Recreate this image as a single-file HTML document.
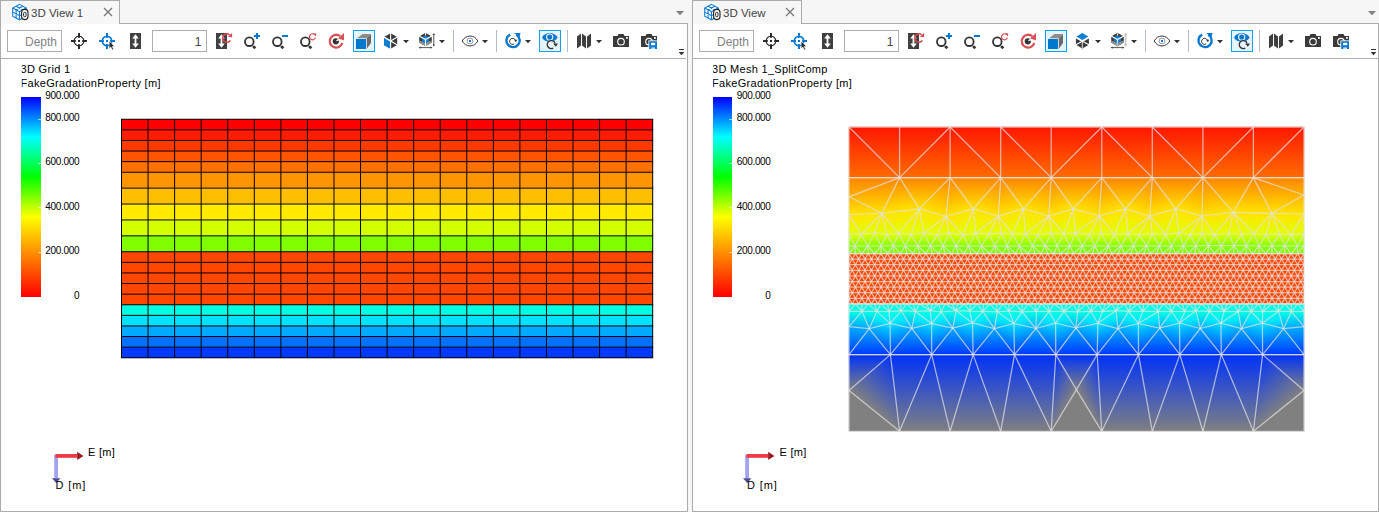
<!DOCTYPE html>
<html><head><meta charset="utf-8"><title>3D View</title>
<style>
html,body{margin:0;padding:0}
body{width:1379px;height:512px;overflow:hidden;background:#f6f6f6;position:relative;
font-family:"Liberation Sans",sans-serif;font-size:12px}
.panel{position:absolute;top:0;height:512px;overflow:hidden}
.panel div{position:absolute}
.tab{left:0;top:0;height:24px;background:#f7f7f7;border:1px solid #acacac;border-bottom:none;box-sizing:border-box}
.stripline{top:23px;height:1px;background:#acacac}
.body{left:0;top:24px;height:488px;background:#fff;border:1px solid #acacac;border-top:none;box-sizing:border-box}
.tbline{left:1px;top:58px;width:685px;height:1px;background:#abadb3}
.tabtxt{left:31px;top:6px;color:#444;font-size:11.5px;line-height:14px;white-space:nowrap}
.ov{position:absolute;left:0;top:0;overflow:hidden}
.tbox{top:30px;width:55px;height:22px;box-sizing:border-box;border:1px solid #abadb3;background:#fff;
text-align:right;font-size:12px;line-height:23px;padding-right:4px}
.vt{left:21px;color:#000;font-size:11px;line-height:14px;white-space:nowrap;letter-spacing:0.3px}
.lg{left:21.1px;top:97.2px;width:19.7px;height:199.5px;
background:linear-gradient(to bottom,#0000ff 0%,#00ffff 20%,#00ff00 40%,#ffff00 60%,#ff0000 100%)}
.ll{left:44px;width:35.2px;text-align:right;font-size:10px;line-height:12px;letter-spacing:-0.33px;color:#000;white-space:nowrap}
.tick{left:37.8px;width:3px;height:1px;background:rgba(255,255,255,0.6)}
</style></head><body>
<div class="panel" style="left:0px;width:688px">
<div class="tab" style="width:120px"></div>
<div class="stripline" style="left:119px;width:569px"></div>
<div class="body" style="width:688px"></div>
<div class="tbline"></div>
<div class="tabtxt">3D View 1</div>
<svg class="ov" width="688" height="512" viewBox="0 0 688 512">
<g fill="none" stroke="#0c7cd8" stroke-width="1.05">
<path d="M19.5 4.4L26.3 8V16.2L19.5 19.8L12.7 16.2V8Z"/>
<path d="M12.7 8L19.5 11.6L26.3 8M19.5 11.6V19.8"/>
<path d="M16.1 6.2L22.9 9.8V18M22.9 6.2L16.1 9.8V18M12.7 12.1L19.5 15.7L26.3 12.1"/>
</g>
<rect x="21.6" y="9.4" width="6.4" height="10.2" rx="3" fill="#fff" stroke="#222" stroke-width="1.1"/>
<rect x="23.6" y="12.3" width="2.4" height="4.4" rx="1" fill="#fff" stroke="#222" stroke-width="1"/>
<path d="M104 8L112 16M112 8L104 16" stroke="#777" stroke-width="1.25" fill="none"/>
<g fill="#2b2b2b" stroke="none">
<rect x="78" y="33" width="2" height="4.8"/>
<rect x="78" y="44.2" width="2" height="4.8"/>
<rect x="71" y="40" width="4.8" height="2"/>
<rect x="82.2" y="40" width="4.8" height="2"/>
<rect x="78" y="40" width="2" height="2"/>
</g><circle cx="79" cy="41" r="4.85" fill="none" stroke="#2b2b2b" stroke-width="1.2"/>
<g fill="#0078d4" stroke="none">
<rect x="106" y="33" width="2" height="4.8"/>
<rect x="106" y="44.2" width="2" height="4.8"/>
<rect x="99" y="40" width="4.8" height="2"/>
<rect x="110.2" y="40" width="4.8" height="2"/>
<rect x="106" y="40" width="2" height="2"/>
</g><circle cx="107" cy="41" r="4.65" fill="none" stroke="#0078d4" stroke-width="1.7"/>
<path d="M109.2 41.2V48.6L110.9 47.1L112.3 49.9L113.6 49.2L112.2 46.5L114.4 46.3Z" fill="#2b2b2b" stroke="#fff" stroke-width="0.5"/>
<rect x="130" y="33" width="11" height="16" fill="#404040"/>
<path d="M135.5 36.5V45.5" stroke="#fff" stroke-width="1.8" fill="none"/>
<path d="M135.5 34.3L138.8 38.6H132.2ZM135.5 47.7L138.8 43.4H132.2Z" fill="#fff"/>
<rect x="216" y="33" width="11" height="16" fill="#404040"/>
<path d="M221.5 36.5V45.5" stroke="#fff" stroke-width="1.8" fill="none"/>
<path d="M221.5 34.3L224.8 38.6H218.2ZM221.5 47.7L224.8 43.4H218.2Z" fill="#fff"/>
<path d="M229.6 34.8A4.2 4.2 0 1 0 230.4 40.4" fill="none" stroke="#d6474b" stroke-width="1.55"/>
<path d="M227.9 36.7L232.1 32.9L232.1 37.3Z" fill="#d6474b"/>
<circle cx="249.3" cy="41.7" r="4.3" fill="none" stroke="#333" stroke-width="1.8"/>
<path d="M253.1 46.1L255.3 48.3" stroke="#333" stroke-width="2.7" fill="none"/>
<path d="M254 36H260M257 33V39" stroke="#0078d4" stroke-width="2" fill="none"/>
<circle cx="277.3" cy="41.7" r="4.3" fill="none" stroke="#333" stroke-width="1.8"/>
<path d="M281.1 46.1L283.3 48.3" stroke="#333" stroke-width="2.7" fill="none"/>
<path d="M282 36H288" stroke="#0078d4" stroke-width="2" fill="none"/>
<circle cx="305.3" cy="41.7" r="4.3" fill="none" stroke="#333" stroke-width="1.8"/>
<path d="M309.1 46.1L311.3 48.3" stroke="#333" stroke-width="2.7" fill="none"/>
<path d="M314.6 34.6A3 3 0 1 0 315.4 37.6" fill="none" stroke="#d6474b" stroke-width="1.2"/>
<path d="M313 33.2L316.2 33.4L316 36.6Z" fill="#d6474b"/>
<path d="M340.2 36.2A6.4 6.4 0 1 0 342.3 43" fill="none" stroke="#d65055" stroke-width="2.3"/>
<path d="M338 38.4L344 33V40.2Z" fill="#d65055"/>
<circle cx="335.8" cy="41.3" r="3.1" fill="#333"/>
<path d="M335.8 41.3L338 38.4L339.5 40.5Z" fill="#fff"/>
<rect x="353.5" y="30.5" width="21" height="21" fill="#e5f3fb" stroke="#11a0ee" stroke-width="1"/>
<rect x="356" y="39" width="10" height="10" fill="#0078cd"/>
<path d="M366.8 38L371 34V43L366.8 48.8Z" fill="#6a6a6a"/>
<path d="M357 38.2L362.5 34H371L366.8 38.2Z" fill="#8c8c8c"/>
<path d="M390.6 33.2L397.2 37V45L390.6 48.8L384 45V37Z" fill="#3a3a3a"/>
<path d="M384 37.2L390 40.7V48.6L384 45.2Z" fill="#0f7fd6"/>
<path d="M390.6 32.5V49.5M384 37L397.4 45M397.4 37L390.6 41" stroke="#fff" stroke-width="1.1" fill="none"/>
<path d="M383.2 36.6L390.6 41" stroke="#fff" stroke-width="1.1" fill="none"/>
<path d="M403 40H409L406 43.2Z" fill="#333"/>
<path d="M425.5 32.8L431.8 36.4V42.6L425.5 46.2L419.2 42.6V36.4Z" fill="#3c3c3c"/>
<path d="M419.2 40.6L425.5 42.4L431.8 40.6V42.6L425.5 46.2L419.2 42.6Z" fill="#909090"/>
<path d="M425.5 35.6L429 37.6V41.6L425.5 43.6L422 41.6V37.6Z" fill="#0f7fd6"/>
<path d="M425.5 32.4V35.6M425.5 39.6V47.4M425.5 39.6L419 35.9M425.5 39.6L432 35.9" stroke="#fff" stroke-width="1.1" fill="none"/>
<path d="M433.8 34V45.5M419.5 47.6H431.5" stroke="#444" stroke-width="0.9" fill="none"/>
<path d="M433.8 33L435 35H432.6ZM433.8 46.6L435 44.6H432.6ZM418.6 47.6L420.6 46.4V48.8ZM432.4 47.6L430.4 46.4V48.8Z" fill="#444"/>
<path d="M439 40H445L442 43.2Z" fill="#333"/>
<rect x="453" y="30" width="1" height="22" fill="#b4bccb"/>
<path d="M462.2 41C465.5 34.4 474.5 34.4 477.8 41C474.5 47.6 465.5 47.6 462.2 41Z" fill="#fff" stroke="#3a3a3a" stroke-width="1"/>
<circle cx="470" cy="41" r="2.9" fill="none" stroke="#8c8c8c" stroke-width="0.9"/>
<rect x="469" y="40" width="2" height="2" fill="#0078d4"/>
<path d="M482 40H488L485 43.2Z" fill="#333"/>
<rect x="496" y="30" width="1" height="22" fill="#b4bccb"/>
<path d="M516.3 34.8A6.6 6.6 0 1 1 510.2 34.6" fill="none" stroke="#0a78cf" stroke-width="2.4"/>
<path d="M514 33H520.6L519 38.2C518 36 516 34.2 514 33Z" fill="#0a78cf"/>
<path d="M515.6 41.2A3 3 0 1 0 514.2 43.9" fill="none" stroke="#3a3a3a" stroke-width="1"/>
<path d="M514.2 39.8H517.4L515.8 42.3Z" fill="#3a3a3a"/>
<path d="M525 40H531L528 43.2Z" fill="#333"/>
<rect x="539.5" y="30.5" width="21" height="21" fill="#e5f3fb" stroke="#11a0ee" stroke-width="1"/>
<path d="M542 37.6C545 31.6 554.4 31.6 557.6 37.6C554.4 43.4 545 43.4 542 37.6Z" fill="#0a78cf"/>
<circle cx="549.7" cy="37.1" r="3.1" fill="none" stroke="#f4faff" stroke-width="1.1"/>
<circle cx="551.2" cy="44.8" r="4.6" fill="#e5f3fb"/>
<path d="M555 43.2A4 4 0 1 0 553.2 48.1" fill="none" stroke="#333" stroke-width="1.3"/>
<path d="M553.2 43.6H558L555.8 46.8Z" fill="#333"/>
<rect x="567" y="30" width="1" height="22" fill="#b4bccb"/>
<path d="M577 36.5L581 33.5V45.5L577 48.5ZM582 33.5L586 36.5V48.5L582 45.5ZM587 36.5L591 33.5V45.5L587 48.5Z" fill="#3e3e3e"/>
<path d="M596 40H602L599 43.2Z" fill="#333"/>
<path d="M613 36H617.5L618.5 34H623.5L624.5 36H629V47H613Z" fill="#3a3a3a"/>
<circle cx="621" cy="41.7" r="3.3" fill="#3a3a3a" stroke="#fff" stroke-width="1.1"/>
<rect x="626" y="37" width="1.8" height="1.8" fill="#fff"/>
<path d="M641 36H645.5L646.5 34H651.5L652.5 36H657V47H641Z" fill="#3a3a3a"/>
<circle cx="649" cy="41.7" r="3.3" fill="#3a3a3a" stroke="#fff" stroke-width="1.1"/>
<rect x="654" y="37" width="1.8" height="1.8" fill="#fff"/>
<rect x="648.4" y="40.4" width="9.2" height="9.2" fill="#fff"/>
<rect x="649.2" y="41.2" width="7.8" height="7.8" fill="#0a78cf"/>
<rect x="651" y="42.8" width="4.2" height="2.4" fill="#fff"/>
<path d="M651.4 49V47.4H654.8V49H653.8L653.1 48.3L652.4 49Z" fill="#fff"/>
<rect x="679" y="49" width="5" height="1" fill="#333"/>
<path d="M678.6 52H684.4L681.5 55.2Z" fill="#333"/>
<path d="M676 11H684L680 15.2Z" fill="#808080"/>
</svg>
<div class="tbox" style="left:7px"><span style="color:#838383">Depth</span></div>
<div class="tbox" style="left:152px"><span style="color:#444;padding-right:0.5px">1</span></div>
<div style="left:0px;top:0;width:688px;height:512px">
<div class="vt" style="top:62px;left:20.6px;clip-path:inset(0 0 0 1.1px)">3D Grid 1</div>
<div class="vt" style="top:76px;left:20.6px;clip-path:inset(0 0 0 1.1px)">FakeGradationProperty [m]</div>
<div class="lg"></div>
<div class="ll" style="top:89.7px">900.000</div>
<div class="ll" style="top:111.7px">800.000</div>
<div class="tick" style="top:118.7px"></div>
<div class="ll" style="top:156px">600.000</div>
<div class="tick" style="top:163px"></div>
<div class="ll" style="top:201.1px">400.000</div>
<div class="tick" style="top:207.3px"></div>
<div class="ll" style="top:244.9px">200.000</div>
<div class="tick" style="top:251.7px"></div>
<div class="ll" style="top:289.7px">0</div>
<svg class="ov" width="688" height="512" viewBox="0 0 688 512">
<rect x="54.2" y="455" width="3.8" height="23.4" fill="#a3a3f5"/>
<path d="M52 478.2H60.4L56.2 483Z" fill="#4a4a96"/>
<rect x="55.4" y="454" width="22" height="3.8" fill="#ee3a44"/>
<path d="M77.2 451.8L83.4 455.9L77.2 460Z" fill="#981c22"/>
</svg>
<div class="vt" style="left:88px;top:445px">E [m]</div>
<div class="vt" style="left:55.5px;top:478px;letter-spacing:0.9px">D [m]</div>
</div>
<svg class="ov" width="688" height="512" viewBox="0 0 688 512">
<rect x="121.50" y="119.25" width="531.20" height="10.90" fill="#ff0000"/>
<rect x="121.50" y="129.85" width="531.20" height="10.90" fill="#ff1c00"/>
<rect x="121.50" y="140.45" width="531.20" height="10.90" fill="#ff3900"/>
<rect x="121.50" y="151.05" width="531.20" height="10.90" fill="#ff5500"/>
<rect x="121.50" y="161.65" width="531.20" height="10.90" fill="#ff7100"/>
<rect x="121.50" y="172.25" width="531.20" height="16.20" fill="#ff9500"/>
<rect x="121.50" y="188.15" width="531.20" height="16.20" fill="#ffbf00"/>
<rect x="121.50" y="204.05" width="531.20" height="16.20" fill="#ffea00"/>
<rect x="121.50" y="219.95" width="531.20" height="16.20" fill="#d4ff00"/>
<rect x="121.50" y="235.85" width="531.20" height="16.20" fill="#80ff00"/>
<rect x="121.50" y="251.75" width="531.20" height="10.90" fill="#ff4700"/>
<rect x="121.50" y="262.35" width="531.20" height="10.90" fill="#ff4700"/>
<rect x="121.50" y="272.95" width="531.20" height="10.90" fill="#ff4700"/>
<rect x="121.50" y="283.55" width="531.20" height="10.90" fill="#ff4700"/>
<rect x="121.50" y="294.15" width="531.20" height="10.90" fill="#ff4700"/>
<rect x="121.50" y="304.75" width="531.20" height="10.90" fill="#00ffe3"/>
<rect x="121.50" y="315.35" width="531.20" height="10.90" fill="#00e3ff"/>
<rect x="121.50" y="325.95" width="531.20" height="10.90" fill="#00aaff"/>
<rect x="121.50" y="336.55" width="531.20" height="10.90" fill="#0071ff"/>
<rect x="121.50" y="347.15" width="531.20" height="10.90" fill="#0039ff"/>
<path d="M121.00 119.25H653.20M121.00 129.85H653.20M121.00 140.45H653.20M121.00 151.05H653.20M121.00 161.65H653.20M121.00 172.25H653.20M121.00 188.15H653.20M121.00 204.05H653.20M121.00 219.95H653.20M121.00 235.85H653.20M121.00 251.75H653.20M121.00 262.35H653.20M121.00 272.95H653.20M121.00 283.55H653.20M121.00 294.15H653.20M121.00 304.75H653.20M121.00 315.35H653.20M121.00 325.95H653.20M121.00 336.55H653.20M121.00 347.15H653.20M121.00 357.75H653.20M121.50 119.25V357.75M148.06 119.25V357.75M174.62 119.25V357.75M201.18 119.25V357.75M227.74 119.25V357.75M254.30 119.25V357.75M280.86 119.25V357.75M307.42 119.25V357.75M333.98 119.25V357.75M360.54 119.25V357.75M387.10 119.25V357.75M413.66 119.25V357.75M440.22 119.25V357.75M466.78 119.25V357.75M493.34 119.25V357.75M519.90 119.25V357.75M546.46 119.25V357.75M573.02 119.25V357.75M599.58 119.25V357.75M626.14 119.25V357.75M652.70 119.25V357.75" stroke="#000" stroke-width="1" fill="none"/>
</svg>
</div>
<div class="panel" style="left:692px;width:687px">
<div class="tab" style="width:110px"></div>
<div class="stripline" style="left:109px;width:578px"></div>
<div class="body" style="width:687px"></div>
<div class="tbline"></div>
<div class="tabtxt">3D View</div>
<svg class="ov" width="687" height="512" viewBox="0 0 687 512">
<g fill="none" stroke="#0c7cd8" stroke-width="1.05">
<path d="M19.5 4.4L26.3 8V16.2L19.5 19.8L12.7 16.2V8Z"/>
<path d="M12.7 8L19.5 11.6L26.3 8M19.5 11.6V19.8"/>
<path d="M16.1 6.2L22.9 9.8V18M22.9 6.2L16.1 9.8V18M12.7 12.1L19.5 15.7L26.3 12.1"/>
</g>
<rect x="21.6" y="9.4" width="6.4" height="10.2" rx="3" fill="#fff" stroke="#222" stroke-width="1.1"/>
<rect x="23.6" y="12.3" width="2.4" height="4.4" rx="1" fill="#fff" stroke="#222" stroke-width="1"/>
<path d="M94 8L102 16M102 8L94 16" stroke="#777" stroke-width="1.25" fill="none"/>
<g fill="#2b2b2b" stroke="none">
<rect x="78" y="33" width="2" height="4.8"/>
<rect x="78" y="44.2" width="2" height="4.8"/>
<rect x="71" y="40" width="4.8" height="2"/>
<rect x="82.2" y="40" width="4.8" height="2"/>
<rect x="78" y="40" width="2" height="2"/>
</g><circle cx="79" cy="41" r="4.85" fill="none" stroke="#2b2b2b" stroke-width="1.2"/>
<g fill="#0078d4" stroke="none">
<rect x="106" y="33" width="2" height="4.8"/>
<rect x="106" y="44.2" width="2" height="4.8"/>
<rect x="99" y="40" width="4.8" height="2"/>
<rect x="110.2" y="40" width="4.8" height="2"/>
<rect x="106" y="40" width="2" height="2"/>
</g><circle cx="107" cy="41" r="4.65" fill="none" stroke="#0078d4" stroke-width="1.7"/>
<path d="M109.2 41.2V48.6L110.9 47.1L112.3 49.9L113.6 49.2L112.2 46.5L114.4 46.3Z" fill="#2b2b2b" stroke="#fff" stroke-width="0.5"/>
<rect x="130" y="33" width="11" height="16" fill="#404040"/>
<path d="M135.5 36.5V45.5" stroke="#fff" stroke-width="1.8" fill="none"/>
<path d="M135.5 34.3L138.8 38.6H132.2ZM135.5 47.7L138.8 43.4H132.2Z" fill="#fff"/>
<rect x="216" y="33" width="11" height="16" fill="#404040"/>
<path d="M221.5 36.5V45.5" stroke="#fff" stroke-width="1.8" fill="none"/>
<path d="M221.5 34.3L224.8 38.6H218.2ZM221.5 47.7L224.8 43.4H218.2Z" fill="#fff"/>
<path d="M229.6 34.8A4.2 4.2 0 1 0 230.4 40.4" fill="none" stroke="#d6474b" stroke-width="1.55"/>
<path d="M227.9 36.7L232.1 32.9L232.1 37.3Z" fill="#d6474b"/>
<circle cx="249.3" cy="41.7" r="4.3" fill="none" stroke="#333" stroke-width="1.8"/>
<path d="M253.1 46.1L255.3 48.3" stroke="#333" stroke-width="2.7" fill="none"/>
<path d="M254 36H260M257 33V39" stroke="#0078d4" stroke-width="2" fill="none"/>
<circle cx="277.3" cy="41.7" r="4.3" fill="none" stroke="#333" stroke-width="1.8"/>
<path d="M281.1 46.1L283.3 48.3" stroke="#333" stroke-width="2.7" fill="none"/>
<path d="M282 36H288" stroke="#0078d4" stroke-width="2" fill="none"/>
<circle cx="305.3" cy="41.7" r="4.3" fill="none" stroke="#333" stroke-width="1.8"/>
<path d="M309.1 46.1L311.3 48.3" stroke="#333" stroke-width="2.7" fill="none"/>
<path d="M314.6 34.6A3 3 0 1 0 315.4 37.6" fill="none" stroke="#d6474b" stroke-width="1.2"/>
<path d="M313 33.2L316.2 33.4L316 36.6Z" fill="#d6474b"/>
<path d="M340.2 36.2A6.4 6.4 0 1 0 342.3 43" fill="none" stroke="#d65055" stroke-width="2.3"/>
<path d="M338 38.4L344 33V40.2Z" fill="#d65055"/>
<circle cx="335.8" cy="41.3" r="3.1" fill="#333"/>
<path d="M335.8 41.3L338 38.4L339.5 40.5Z" fill="#fff"/>
<rect x="353.5" y="30.5" width="21" height="21" fill="#e5f3fb" stroke="#11a0ee" stroke-width="1"/>
<rect x="356" y="39" width="10" height="10" fill="#0078cd"/>
<path d="M366.8 38L371 34V43L366.8 48.8Z" fill="#6a6a6a"/>
<path d="M357 38.2L362.5 34H371L366.8 38.2Z" fill="#8c8c8c"/>
<path d="M390.4 41L396.9 37.2V44.8L390.4 48.6L383.9 44.8V37.2Z" fill="#3a3a3a"/>
<path d="M383 36L390.4 40.6L397.8 36L397.8 37.6L390.4 42L383 37.6Z" fill="#fff"/>
<path d="M383.4 37.4L397.4 45M397.4 37.4L383.4 45" stroke="#fff" stroke-width="1.1" fill="none"/>
<path d="M390.4 42V49.4" stroke="#bdbdbd" stroke-width="1.3" fill="none"/>
<path d="M390.4 33L396.4 36.5L390.4 40L384.4 36.5Z" fill="#0f7fd6"/>
<path d="M403 40H409L406 43.2Z" fill="#333"/>
<path d="M425.5 32.8L431.8 36.4V42.6L425.5 46.2L419.2 42.6V36.4Z" fill="#3c3c3c"/>
<path d="M419.2 40.6L425.5 42.4L431.8 40.6V42.6L425.5 46.2L419.2 42.6Z" fill="#909090"/>
<path d="M425.5 35.6L429 37.6V41.6L425.5 43.6L422 41.6V37.6Z" fill="#0f7fd6"/>
<path d="M425.5 32.4V35.6M425.5 39.6V47.4M425.5 39.6L419 35.9M425.5 39.6L432 35.9" stroke="#fff" stroke-width="1.1" fill="none"/>
<path d="M425.5 32.4V35.6M425.5 41V47.4" stroke="#c4c4c4" stroke-width="1.3" fill="none"/>
<path d="M433.6 34V45.5" stroke="#c8c8c8" stroke-width="1.7" fill="none"/>
<path d="M419.5 47.6H431.5" stroke="#444" stroke-width="0.9" fill="none"/>
<path d="M433.6 32.8L435.2 35.2H432ZM433.6 46.8L435.2 44.4H432Z" fill="#bcbcbc"/>
<path d="M418.6 47.6L420.6 46.4V48.8ZM432.4 47.6L430.4 46.4V48.8Z" fill="#444"/>
<path d="M439 40H445L442 43.2Z" fill="#333"/>
<rect x="453" y="30" width="1" height="22" fill="#b4bccb"/>
<path d="M462.2 41C465.5 34.4 474.5 34.4 477.8 41C474.5 47.6 465.5 47.6 462.2 41Z" fill="#fff" stroke="#3a3a3a" stroke-width="1"/>
<circle cx="470" cy="41" r="2.9" fill="none" stroke="#8c8c8c" stroke-width="0.9"/>
<rect x="469" y="40" width="2" height="2" fill="#0078d4"/>
<path d="M482 40H488L485 43.2Z" fill="#333"/>
<rect x="496" y="30" width="1" height="22" fill="#b4bccb"/>
<path d="M516.3 34.8A6.6 6.6 0 1 1 510.2 34.6" fill="none" stroke="#0a78cf" stroke-width="2.4"/>
<path d="M514 33H520.6L519 38.2C518 36 516 34.2 514 33Z" fill="#0a78cf"/>
<path d="M515.6 41.2A3 3 0 1 0 514.2 43.9" fill="none" stroke="#3a3a3a" stroke-width="1"/>
<path d="M514.2 39.8H517.4L515.8 42.3Z" fill="#3a3a3a"/>
<path d="M525 40H531L528 43.2Z" fill="#333"/>
<rect x="539.5" y="30.5" width="21" height="21" fill="#e5f3fb" stroke="#11a0ee" stroke-width="1"/>
<path d="M542 37.6C545 31.6 554.4 31.6 557.6 37.6C554.4 43.4 545 43.4 542 37.6Z" fill="#0a78cf"/>
<circle cx="549.7" cy="37.1" r="3.1" fill="none" stroke="#f4faff" stroke-width="1.1"/>
<circle cx="551.2" cy="44.8" r="4.6" fill="#e5f3fb"/>
<path d="M555 43.2A4 4 0 1 0 553.2 48.1" fill="none" stroke="#333" stroke-width="1.3"/>
<path d="M553.2 43.6H558L555.8 46.8Z" fill="#333"/>
<rect x="567" y="30" width="1" height="22" fill="#b4bccb"/>
<path d="M577 36.5L581 33.5V45.5L577 48.5ZM582 33.5L586 36.5V48.5L582 45.5ZM587 36.5L591 33.5V45.5L587 48.5Z" fill="#3e3e3e"/>
<path d="M596 40H602L599 43.2Z" fill="#333"/>
<path d="M613 36H617.5L618.5 34H623.5L624.5 36H629V47H613Z" fill="#3a3a3a"/>
<circle cx="621" cy="41.7" r="3.3" fill="#3a3a3a" stroke="#fff" stroke-width="1.1"/>
<rect x="626" y="37" width="1.8" height="1.8" fill="#fff"/>
<path d="M641 36H645.5L646.5 34H651.5L652.5 36H657V47H641Z" fill="#3a3a3a"/>
<circle cx="649" cy="41.7" r="3.3" fill="#3a3a3a" stroke="#fff" stroke-width="1.1"/>
<rect x="654" y="37" width="1.8" height="1.8" fill="#fff"/>
<rect x="648.4" y="40.4" width="9.2" height="9.2" fill="#fff"/>
<rect x="649.2" y="41.2" width="7.8" height="7.8" fill="#0a78cf"/>
<rect x="651" y="42.8" width="4.2" height="2.4" fill="#fff"/>
<path d="M651.4 49V47.4H654.8V49H653.8L653.1 48.3L652.4 49Z" fill="#fff"/>
<rect x="679" y="49" width="5" height="1" fill="#333"/>
<path d="M678.6 52H684.4L681.5 55.2Z" fill="#333"/>
<path d="M676 11H684L680 15.2Z" fill="#808080"/>
</svg>
<div class="tbox" style="left:7px"><span style="color:#838383">Depth</span></div>
<div class="tbox" style="left:152px"><span style="color:#444;padding-right:0.5px">1</span></div>
<div style="left:-0.6px;top:0;width:687px;height:512px">
<div class="vt" style="top:62px;left:20.6px;clip-path:inset(0 0 0 1.1px)">3D Mesh 1_SplitComp</div>
<div class="vt" style="top:76px;left:20.6px;clip-path:inset(0 0 0 1.1px)">FakeGradationProperty [m]</div>
<div class="lg"></div>
<div class="ll" style="top:89.7px">900.000</div>
<div class="ll" style="top:111.7px">800.000</div>
<div class="tick" style="top:118.7px"></div>
<div class="ll" style="top:156px">600.000</div>
<div class="tick" style="top:163px"></div>
<div class="ll" style="top:201.1px">400.000</div>
<div class="tick" style="top:207.3px"></div>
<div class="ll" style="top:244.9px">200.000</div>
<div class="tick" style="top:251.7px"></div>
<div class="ll" style="top:289.7px">0</div>
<svg class="ov" width="687" height="512" viewBox="0 0 687 512">
<rect x="54.2" y="455" width="3.8" height="23.4" fill="#a3a3f5"/>
<path d="M52 478.2H60.4L56.2 483Z" fill="#4a4a96"/>
<rect x="55.4" y="454" width="22" height="3.8" fill="#ee3a44"/>
<path d="M77.2 451.8L83.4 455.9L77.2 460Z" fill="#981c22"/>
</svg>
<div class="vt" style="left:88px;top:445px">E [m]</div>
<div class="vt" style="left:55.5px;top:478px;letter-spacing:0.9px">D [m]</div>
</div>
<svg class="ov" width="687" height="512" viewBox="692 0 687 512">
<defs>
<linearGradient id="cm" gradientUnits="userSpaceOnUse"><stop offset="0" stop-color="#ff0000"/><stop offset="0.4" stop-color="#ffff00"/><stop offset="0.6" stop-color="#00ff00"/><stop offset="0.8" stop-color="#00ffff"/><stop offset="1" stop-color="#0000ff"/></linearGradient>
<linearGradient id="bg" gradientUnits="userSpaceOnUse"><stop offset="0" stop-color="#0032fa"/><stop offset="1" stop-color="#808080"/></linearGradient>
<linearGradient id="s0" gradientUnits="userSpaceOnUse"><stop offset="0" stop-color="#ff1700"/><stop offset="1" stop-color="#ff6c00"/></linearGradient>
<linearGradient id="g1" href="#s0" xlink:href="#s0" x1="849.0" y1="127.0" x2="849.0" y2="177.6"/>
<linearGradient id="g2" href="#s0" xlink:href="#s0" x1="849.0" y1="127.0" x2="849.0" y2="177.6"/>
<linearGradient id="g3" href="#s0" xlink:href="#s0" x1="899.6" y1="127.0" x2="899.6" y2="177.6"/>
<linearGradient id="g4" href="#s0" xlink:href="#s0" x1="950.1" y1="127.0" x2="950.1" y2="177.6"/>
<linearGradient id="g5" href="#s0" xlink:href="#s0" x1="950.1" y1="127.0" x2="950.1" y2="177.6"/>
<linearGradient id="g6" href="#s0" xlink:href="#s0" x1="950.1" y1="127.0" x2="950.1" y2="177.6"/>
<linearGradient id="g7" href="#s0" xlink:href="#s0" x1="1000.7" y1="127.0" x2="1000.7" y2="177.6"/>
<linearGradient id="g8" href="#s0" xlink:href="#s0" x1="1000.7" y1="127.0" x2="1000.7" y2="177.6"/>
<linearGradient id="g9" href="#s0" xlink:href="#s0" x1="1051.2" y1="127.0" x2="1051.2" y2="177.6"/>
<linearGradient id="g10" href="#s0" xlink:href="#s0" x1="1101.8" y1="127.0" x2="1101.8" y2="177.6"/>
<linearGradient id="g11" href="#s0" xlink:href="#s0" x1="1101.8" y1="127.0" x2="1101.8" y2="177.6"/>
<linearGradient id="g12" href="#s0" xlink:href="#s0" x1="1101.8" y1="127.0" x2="1101.8" y2="177.6"/>
<linearGradient id="g13" href="#s0" xlink:href="#s0" x1="1152.3" y1="127.0" x2="1152.3" y2="177.6"/>
<linearGradient id="g14" href="#s0" xlink:href="#s0" x1="1152.3" y1="127.0" x2="1152.3" y2="177.6"/>
<linearGradient id="g15" href="#s0" xlink:href="#s0" x1="1202.9" y1="127.0" x2="1202.9" y2="177.6"/>
<linearGradient id="g16" href="#s0" xlink:href="#s0" x1="1253.4" y1="127.0" x2="1253.4" y2="177.6"/>
<linearGradient id="g17" href="#s0" xlink:href="#s0" x1="1253.4" y1="127.0" x2="1253.4" y2="177.6"/>
<linearGradient id="g18" href="#s0" xlink:href="#s0" x1="1304.0" y1="127.0" x2="1304.0" y2="177.6"/>
<linearGradient id="s1" gradientUnits="userSpaceOnUse"><stop offset="0" stop-color="#ff8400"/><stop offset="1" stop-color="#ffb300"/></linearGradient>
<linearGradient id="g19" href="#s1" xlink:href="#s1" x1="849.0" y1="177.6" x2="849.0" y2="196.8"/>
<linearGradient id="s2" gradientUnits="userSpaceOnUse"><stop offset="0" stop-color="#ff8400"/><stop offset="0.5" stop-color="#ffb300"/><stop offset="1" stop-color="#ffe300"/></linearGradient>
<linearGradient id="g20" href="#s2" xlink:href="#s2" x1="848.4" y1="179.3" x2="849.6" y2="214.3"/>
<linearGradient id="s3" gradientUnits="userSpaceOnUse"><stop offset="0" stop-color="#ffb300"/><stop offset="1" stop-color="#ffe300"/></linearGradient>
<linearGradient id="g21" href="#s3" xlink:href="#s3" x1="849.0" y1="196.8" x2="849.6" y2="214.5"/>
<linearGradient id="g22" href="#s1" xlink:href="#s1" x1="1304.0" y1="177.6" x2="1304.0" y2="195.0"/>
<linearGradient id="g23" href="#s2" xlink:href="#s2" x1="1303.8" y1="177.1" x2="1304.2" y2="212.9"/>
<linearGradient id="g24" href="#s3" xlink:href="#s3" x1="1304.0" y1="195.0" x2="1303.6" y2="214.0"/>
<linearGradient id="s4" gradientUnits="userSpaceOnUse"><stop offset="0" stop-color="#ff8400"/><stop offset="1" stop-color="#ffe300"/></linearGradient>
<linearGradient id="g25" href="#s4" xlink:href="#s4" x1="899.6" y1="177.6" x2="903.5" y2="210.7"/>
<linearGradient id="g26" href="#s4" xlink:href="#s4" x1="899.6" y1="177.6" x2="899.6" y2="208.8"/>
<linearGradient id="g27" href="#s4" xlink:href="#s4" x1="950.1" y1="177.6" x2="939.4" y2="214.6"/>
<linearGradient id="g28" href="#s4" xlink:href="#s4" x1="950.1" y1="177.6" x2="960.0" y2="212.6"/>
<linearGradient id="g29" href="#s4" xlink:href="#s4" x1="950.1" y1="177.6" x2="950.1" y2="208.8"/>
<linearGradient id="g30" href="#s4" xlink:href="#s4" x1="1000.7" y1="177.6" x2="990.3" y2="213.7"/>
<linearGradient id="g31" href="#s4" xlink:href="#s4" x1="1000.7" y1="177.6" x2="1010.7" y2="212.5"/>
<linearGradient id="g32" href="#s4" xlink:href="#s4" x1="1000.7" y1="177.6" x2="1000.7" y2="208.8"/>
<linearGradient id="g33" href="#s4" xlink:href="#s4" x1="1051.2" y1="177.6" x2="1041.0" y2="213.8"/>
<linearGradient id="g34" href="#s4" xlink:href="#s4" x1="1051.2" y1="177.6" x2="1061.5" y2="212.3"/>
<linearGradient id="g35" href="#s4" xlink:href="#s4" x1="1051.2" y1="177.6" x2="1051.2" y2="208.8"/>
<linearGradient id="g36" href="#s4" xlink:href="#s4" x1="1101.8" y1="177.6" x2="1091.8" y2="213.9"/>
<linearGradient id="g37" href="#s4" xlink:href="#s4" x1="1101.8" y1="177.6" x2="1111.4" y2="212.6"/>
<linearGradient id="g38" href="#s4" xlink:href="#s4" x1="1101.8" y1="177.6" x2="1101.8" y2="208.8"/>
<linearGradient id="g39" href="#s4" xlink:href="#s4" x1="1152.3" y1="177.6" x2="1141.7" y2="213.6"/>
<linearGradient id="g40" href="#s4" xlink:href="#s4" x1="1152.3" y1="177.6" x2="1162.0" y2="212.6"/>
<linearGradient id="g41" href="#s4" xlink:href="#s4" x1="1152.3" y1="177.6" x2="1152.3" y2="208.8"/>
<linearGradient id="g42" href="#s4" xlink:href="#s4" x1="1202.9" y1="177.6" x2="1193.0" y2="213.5"/>
<linearGradient id="g43" href="#s4" xlink:href="#s4" x1="1202.9" y1="177.6" x2="1207.4" y2="215.4"/>
<linearGradient id="g44" href="#s4" xlink:href="#s4" x1="1202.9" y1="177.6" x2="1202.9" y2="212.3"/>
<linearGradient id="g45" href="#s4" xlink:href="#s4" x1="1253.4" y1="177.6" x2="1252.5" y2="212.8"/>
<linearGradient id="s5" gradientUnits="userSpaceOnUse"><stop offset="0" stop-color="#ffe300"/><stop offset="1" stop-color="#e3ff00"/></linearGradient>
<linearGradient id="g46" href="#s5" xlink:href="#s5" x1="849.0" y1="214.5" x2="848.8" y2="233.9"/>
<linearGradient id="g47" href="#s5" xlink:href="#s5" x1="849.0" y1="214.5" x2="849.7" y2="234.5"/>
<linearGradient id="g48" href="#s5" xlink:href="#s5" x1="881.8" y1="213.3" x2="883.3" y2="232.3"/>
<linearGradient id="g49" href="#s5" xlink:href="#s5" x1="881.8" y1="213.3" x2="879.7" y2="233.5"/>
<linearGradient id="g50" href="#s5" xlink:href="#s5" x1="881.8" y1="213.3" x2="883.4" y2="234.5"/>
<linearGradient id="g51" href="#s5" xlink:href="#s5" x1="881.8" y1="213.3" x2="884.4" y2="235.1"/>
<linearGradient id="g52" href="#s5" xlink:href="#s5" x1="919.4" y1="208.8" x2="917.5" y2="234.8"/>
<linearGradient id="g53" href="#s5" xlink:href="#s5" x1="919.4" y1="208.8" x2="922.0" y2="233.2"/>
<linearGradient id="g54" href="#s5" xlink:href="#s5" x1="919.4" y1="208.8" x2="913.3" y2="229.9"/>
<linearGradient id="g55" href="#s5" xlink:href="#s5" x1="946.0" y1="216.5" x2="943.6" y2="235.5"/>
<linearGradient id="g56" href="#s5" xlink:href="#s5" x1="946.0" y1="216.5" x2="948.3" y2="233.3"/>
<linearGradient id="g57" href="#s5" xlink:href="#s5" x1="946.0" y1="216.5" x2="944.0" y2="232.5"/>
<linearGradient id="g58" href="#s5" xlink:href="#s5" x1="946.0" y1="216.5" x2="952.1" y2="238.0"/>
<linearGradient id="g59" href="#s5" xlink:href="#s5" x1="973.3" y1="208.8" x2="976.3" y2="233.2"/>
<linearGradient id="g60" href="#s5" xlink:href="#s5" x1="973.3" y1="208.8" x2="967.0" y2="230.8"/>
<linearGradient id="g61" href="#s5" xlink:href="#s5" x1="998.4" y1="216.0" x2="997.5" y2="234.3"/>
<linearGradient id="g62" href="#s5" xlink:href="#s5" x1="998.4" y1="216.0" x2="999.5" y2="233.3"/>
<linearGradient id="g63" href="#s5" xlink:href="#s5" x1="998.4" y1="216.0" x2="997.1" y2="232.9"/>
<linearGradient id="g64" href="#s5" xlink:href="#s5" x1="998.4" y1="216.0" x2="1004.3" y2="236.4"/>
<linearGradient id="g65" href="#s5" xlink:href="#s5" x1="1023.4" y1="208.8" x2="1024.0" y2="233.8"/>
<linearGradient id="g66" href="#s5" xlink:href="#s5" x1="1023.4" y1="208.8" x2="1017.0" y2="231.3"/>
<linearGradient id="g67" href="#s5" xlink:href="#s5" x1="1048.8" y1="216.0" x2="1047.6" y2="235.1"/>
<linearGradient id="g68" href="#s5" xlink:href="#s5" x1="1048.8" y1="216.0" x2="1050.3" y2="233.4"/>
<linearGradient id="g69" href="#s5" xlink:href="#s5" x1="1048.8" y1="216.0" x2="1047.9" y2="233.1"/>
<linearGradient id="g70" href="#s5" xlink:href="#s5" x1="1048.8" y1="216.0" x2="1054.9" y2="236.6"/>
<linearGradient id="g71" href="#s5" xlink:href="#s5" x1="1073.2" y1="208.8" x2="1075.0" y2="233.1"/>
<linearGradient id="g72" href="#s5" xlink:href="#s5" x1="1073.2" y1="208.8" x2="1067.1" y2="230.8"/>
<linearGradient id="g73" href="#s5" xlink:href="#s5" x1="1099.3" y1="216.0" x2="1097.7" y2="235.0"/>
<linearGradient id="g74" href="#s5" xlink:href="#s5" x1="1099.3" y1="216.0" x2="1100.6" y2="233.5"/>
<linearGradient id="g75" href="#s5" xlink:href="#s5" x1="1099.3" y1="216.0" x2="1098.3" y2="233.3"/>
<linearGradient id="g76" href="#s5" xlink:href="#s5" x1="1099.3" y1="216.0" x2="1105.0" y2="236.8"/>
<linearGradient id="g77" href="#s5" xlink:href="#s5" x1="1125.4" y1="208.8" x2="1126.5" y2="233.7"/>
<linearGradient id="g78" href="#s5" xlink:href="#s5" x1="1125.4" y1="208.8" x2="1118.9" y2="231.0"/>
<linearGradient id="g79" href="#s5" xlink:href="#s5" x1="1149.8" y1="216.0" x2="1148.3" y2="235.2"/>
<linearGradient id="g80" href="#s5" xlink:href="#s5" x1="1149.8" y1="216.0" x2="1150.7" y2="233.9"/>
<linearGradient id="g81" href="#s5" xlink:href="#s5" x1="1149.8" y1="216.0" x2="1149.2" y2="233.7"/>
<linearGradient id="g82" href="#s5" xlink:href="#s5" x1="1149.8" y1="216.0" x2="1155.6" y2="236.9"/>
<linearGradient id="g83" href="#s5" xlink:href="#s5" x1="1175.9" y1="208.8" x2="1178.0" y2="233.1"/>
<linearGradient id="g84" href="#s5" xlink:href="#s5" x1="1175.9" y1="208.8" x2="1169.9" y2="230.6"/>
<linearGradient id="g85" href="#s5" xlink:href="#s5" x1="1202.0" y1="216.0" x2="1199.1" y2="236.0"/>
<linearGradient id="g86" href="#s5" xlink:href="#s5" x1="1202.0" y1="216.0" x2="1203.8" y2="233.2"/>
<linearGradient id="g87" href="#s5" xlink:href="#s5" x1="1202.0" y1="216.0" x2="1200.4" y2="233.2"/>
<linearGradient id="g88" href="#s5" xlink:href="#s5" x1="1202.0" y1="216.0" x2="1204.3" y2="235.8"/>
<linearGradient id="g89" href="#s5" xlink:href="#s5" x1="1233.3" y1="212.3" x2="1234.9" y2="233.0"/>
<linearGradient id="g90" href="#s5" xlink:href="#s5" x1="1233.3" y1="212.3" x2="1232.1" y2="233.7"/>
<linearGradient id="g91" href="#s5" xlink:href="#s5" x1="1233.3" y1="212.3" x2="1234.6" y2="234.6"/>
<linearGradient id="g92" href="#s5" xlink:href="#s5" x1="1233.3" y1="212.3" x2="1232.8" y2="232.9"/>
<linearGradient id="g93" href="#s5" xlink:href="#s5" x1="1271.6" y1="213.3" x2="1270.1" y2="234.6"/>
<linearGradient id="g94" href="#s5" xlink:href="#s5" x1="1271.6" y1="213.3" x2="1272.4" y2="234.1"/>
<linearGradient id="g95" href="#s5" xlink:href="#s5" x1="1271.6" y1="213.3" x2="1270.4" y2="233.3"/>
<linearGradient id="g96" href="#s5" xlink:href="#s5" x1="1271.6" y1="213.3" x2="1271.1" y2="234.1"/>
<linearGradient id="g97" href="#s5" xlink:href="#s5" x1="1304.0" y1="214.0" x2="1305.0" y2="233.8"/>
<linearGradient id="s6" gradientUnits="userSpaceOnUse"><stop offset="0" stop-color="#e3ff00"/><stop offset="1" stop-color="#85ff00"/></linearGradient>
<linearGradient id="g98" href="#s6" xlink:href="#s6" x1="849.0" y1="233.9" x2="848.5" y2="245.9"/>
<linearGradient id="g99" href="#s6" xlink:href="#s6" x1="849.0" y1="233.9" x2="848.8" y2="246.1"/>
<linearGradient id="g100" href="#s6" xlink:href="#s6" x1="861.2" y1="234.1" x2="861.2" y2="246.2"/>
<linearGradient id="g101" href="#s6" xlink:href="#s6" x1="861.2" y1="234.1" x2="862.2" y2="246.6"/>
<linearGradient id="g102" href="#s6" xlink:href="#s6" x1="874.6" y1="233.0" x2="874.8" y2="246.1"/>
<linearGradient id="g103" href="#s6" xlink:href="#s6" x1="874.6" y1="233.0" x2="873.4" y2="245.2"/>
<linearGradient id="g104" href="#s6" xlink:href="#s6" x1="887.0" y1="234.3" x2="887.1" y2="245.9"/>
<linearGradient id="g105" href="#s6" xlink:href="#s6" x1="887.0" y1="234.3" x2="887.9" y2="246.3"/>
<linearGradient id="g106" href="#s6" xlink:href="#s6" x1="898.5" y1="233.4" x2="898.4" y2="245.9"/>
<linearGradient id="g107" href="#s6" xlink:href="#s6" x1="898.5" y1="233.4" x2="897.6" y2="245.4"/>
<linearGradient id="g108" href="#s6" xlink:href="#s6" x1="911.1" y1="234.3" x2="911.3" y2="245.8"/>
<linearGradient id="g109" href="#s6" xlink:href="#s6" x1="911.1" y1="234.3" x2="912.3" y2="246.3"/>
<linearGradient id="g110" href="#s6" xlink:href="#s6" x1="923.8" y1="233.0" x2="923.7" y2="245.8"/>
<linearGradient id="g111" href="#s6" xlink:href="#s6" x1="923.8" y1="233.0" x2="922.3" y2="244.8"/>
<linearGradient id="g112" href="#s6" xlink:href="#s6" x1="937.3" y1="234.7" x2="937.2" y2="245.9"/>
<linearGradient id="g113" href="#s6" xlink:href="#s6" x1="937.3" y1="234.7" x2="938.9" y2="246.5"/>
<linearGradient id="g114" href="#s6" xlink:href="#s6" x1="949.2" y1="233.1" x2="949.2" y2="245.9"/>
<linearGradient id="g115" href="#s6" xlink:href="#s6" x1="949.2" y1="233.1" x2="947.7" y2="244.9"/>
<linearGradient id="g116" href="#s6" xlink:href="#s6" x1="963.1" y1="234.8" x2="963.0" y2="246.0"/>
<linearGradient id="g117" href="#s6" xlink:href="#s6" x1="963.1" y1="234.8" x2="964.5" y2="246.5"/>
<linearGradient id="g118" href="#s6" xlink:href="#s6" x1="975.6" y1="233.3" x2="975.6" y2="246.0"/>
<linearGradient id="g119" href="#s6" xlink:href="#s6" x1="975.6" y1="233.3" x2="975.0" y2="245.7"/>
<linearGradient id="g120" href="#s6" xlink:href="#s6" x1="989.2" y1="233.9" x2="989.0" y2="246.1"/>
<linearGradient id="g121" href="#s6" xlink:href="#s6" x1="989.2" y1="233.9" x2="989.9" y2="246.5"/>
<linearGradient id="g122" href="#s6" xlink:href="#s6" x1="1001.5" y1="233.2" x2="1001.7" y2="246.1"/>
<linearGradient id="g123" href="#s6" xlink:href="#s6" x1="1001.5" y1="233.2" x2="1000.6" y2="245.5"/>
<linearGradient id="g124" href="#s6" xlink:href="#s6" x1="1012.5" y1="234.0" x2="1012.4" y2="246.0"/>
<linearGradient id="g125" href="#s6" xlink:href="#s6" x1="1012.5" y1="234.0" x2="1012.7" y2="246.2"/>
<linearGradient id="g126" href="#s6" xlink:href="#s6" x1="1025.5" y1="233.7" x2="1025.6" y2="246.0"/>
<linearGradient id="g127" href="#s6" xlink:href="#s6" x1="1025.5" y1="233.7" x2="1024.8" y2="245.4"/>
<linearGradient id="g128" href="#s6" xlink:href="#s6" x1="1037.8" y1="234.5" x2="1038.1" y2="245.8"/>
<linearGradient id="g129" href="#s6" xlink:href="#s6" x1="1037.8" y1="234.5" x2="1038.8" y2="246.2"/>
<linearGradient id="g130" href="#s6" xlink:href="#s6" x1="1051.6" y1="233.3" x2="1051.4" y2="245.7"/>
<linearGradient id="g131" href="#s6" xlink:href="#s6" x1="1051.6" y1="233.3" x2="1050.9" y2="245.4"/>
<linearGradient id="g132" href="#s6" xlink:href="#s6" x1="1064.0" y1="234.0" x2="1064.0" y2="245.8"/>
<linearGradient id="g133" href="#s6" xlink:href="#s6" x1="1064.0" y1="234.0" x2="1064.9" y2="246.2"/>
<linearGradient id="g134" href="#s6" xlink:href="#s6" x1="1075.4" y1="233.1" x2="1075.5" y2="245.8"/>
<linearGradient id="g135" href="#s6" xlink:href="#s6" x1="1075.4" y1="233.1" x2="1074.4" y2="245.1"/>
<linearGradient id="g136" href="#s6" xlink:href="#s6" x1="1089.6" y1="234.3" x2="1089.5" y2="245.8"/>
<linearGradient id="g137" href="#s6" xlink:href="#s6" x1="1089.6" y1="234.3" x2="1090.4" y2="246.2"/>
<linearGradient id="g138" href="#s6" xlink:href="#s6" x1="1101.3" y1="233.5" x2="1101.2" y2="245.9"/>
<linearGradient id="g139" href="#s6" xlink:href="#s6" x1="1101.3" y1="233.5" x2="1100.7" y2="245.6"/>
<linearGradient id="g140" href="#s6" xlink:href="#s6" x1="1114.3" y1="234.2" x2="1114.3" y2="246.0"/>
<linearGradient id="g141" href="#s6" xlink:href="#s6" x1="1114.3" y1="234.2" x2="1114.8" y2="246.3"/>
<linearGradient id="g142" href="#s6" xlink:href="#s6" x1="1127.8" y1="233.6" x2="1128.0" y2="245.9"/>
<linearGradient id="g143" href="#s6" xlink:href="#s6" x1="1127.8" y1="233.6" x2="1126.9" y2="245.2"/>
<linearGradient id="g144" href="#s6" xlink:href="#s6" x1="1139.1" y1="234.5" x2="1139.0" y2="245.8"/>
<linearGradient id="g145" href="#s6" xlink:href="#s6" x1="1139.1" y1="234.5" x2="1139.7" y2="246.2"/>
<linearGradient id="g146" href="#s6" xlink:href="#s6" x1="1152.4" y1="233.8" x2="1152.1" y2="246.0"/>
<linearGradient id="g147" href="#s6" xlink:href="#s6" x1="1152.4" y1="233.8" x2="1152.0" y2="245.9"/>
<linearGradient id="g148" href="#s6" xlink:href="#s6" x1="1165.5" y1="234.2" x2="1165.7" y2="246.1"/>
<linearGradient id="g149" href="#s6" xlink:href="#s6" x1="1165.5" y1="234.2" x2="1166.6" y2="246.4"/>
<linearGradient id="g150" href="#s6" xlink:href="#s6" x1="1178.8" y1="233.0" x2="1178.8" y2="245.9"/>
<linearGradient id="g151" href="#s6" xlink:href="#s6" x1="1178.8" y1="233.0" x2="1177.0" y2="245.0"/>
<linearGradient id="g152" href="#s6" xlink:href="#s6" x1="1190.1" y1="234.7" x2="1190.2" y2="245.8"/>
<linearGradient id="g153" href="#s6" xlink:href="#s6" x1="1190.1" y1="234.7" x2="1191.3" y2="246.3"/>
<linearGradient id="g154" href="#s6" xlink:href="#s6" x1="1202.1" y1="233.4" x2="1202.2" y2="245.7"/>
<linearGradient id="g155" href="#s6" xlink:href="#s6" x1="1202.1" y1="233.4" x2="1201.0" y2="244.9"/>
<linearGradient id="g156" href="#s6" xlink:href="#s6" x1="1214.4" y1="234.6" x2="1214.4" y2="245.6"/>
<linearGradient id="g157" href="#s6" xlink:href="#s6" x1="1214.4" y1="234.6" x2="1215.3" y2="246.1"/>
<linearGradient id="g158" href="#s6" xlink:href="#s6" x1="1228.8" y1="233.5" x2="1228.8" y2="245.6"/>
<linearGradient id="g159" href="#s6" xlink:href="#s6" x1="1228.8" y1="233.5" x2="1228.1" y2="245.3"/>
<linearGradient id="g160" href="#s6" xlink:href="#s6" x1="1241.7" y1="234.2" x2="1241.6" y2="245.7"/>
<linearGradient id="g161" href="#s6" xlink:href="#s6" x1="1241.7" y1="234.2" x2="1242.4" y2="245.9"/>
<linearGradient id="g162" href="#s6" xlink:href="#s6" x1="1253.9" y1="233.5" x2="1253.6" y2="245.9"/>
<linearGradient id="g163" href="#s6" xlink:href="#s6" x1="1253.9" y1="233.5" x2="1253.1" y2="245.6"/>
<linearGradient id="g164" href="#s6" xlink:href="#s6" x1="1266.3" y1="234.4" x2="1266.4" y2="245.9"/>
<linearGradient id="g165" href="#s6" xlink:href="#s6" x1="1266.3" y1="234.4" x2="1266.7" y2="246.1"/>
<linearGradient id="g166" href="#s6" xlink:href="#s6" x1="1279.5" y1="233.8" x2="1279.7" y2="245.8"/>
<linearGradient id="g167" href="#s6" xlink:href="#s6" x1="1279.5" y1="233.8" x2="1278.8" y2="245.3"/>
<linearGradient id="g168" href="#s6" xlink:href="#s6" x1="1291.3" y1="234.6" x2="1291.0" y2="245.8"/>
<linearGradient id="g169" href="#s6" xlink:href="#s6" x1="1291.3" y1="234.6" x2="1291.9" y2="246.3"/>
<linearGradient id="g170" href="#s6" xlink:href="#s6" x1="1304.0" y1="233.9" x2="1304.2" y2="245.9"/>
<linearGradient id="s7" gradientUnits="userSpaceOnUse"><stop offset="0" stop-color="#00ffe3"/><stop offset="1" stop-color="#00aaff"/></linearGradient>
<linearGradient id="g171" href="#s7" xlink:href="#s7" x1="849.0" y1="311.3" x2="849.0" y2="326.6"/>
<linearGradient id="g172" href="#s7" xlink:href="#s7" x1="862.0" y1="311.3" x2="860.3" y2="327.7"/>
<linearGradient id="g173" href="#s7" xlink:href="#s7" x1="862.0" y1="311.3" x2="861.9" y2="328.6"/>
<linearGradient id="s8" gradientUnits="userSpaceOnUse"><stop offset="0" stop-color="#00ffe3"/><stop offset="0.5" stop-color="#00e3ff"/><stop offset="1" stop-color="#00aaff"/></linearGradient>
<linearGradient id="g174" href="#s8" xlink:href="#s8" x1="876.8" y1="311.4" x2="873.2" y2="329.4"/>
<linearGradient id="s9" gradientUnits="userSpaceOnUse"><stop offset="0" stop-color="#00ffe3"/><stop offset="1" stop-color="#00e3ff"/></linearGradient>
<linearGradient id="g175" href="#s9" xlink:href="#s9" x1="876.8" y1="311.4" x2="876.6" y2="323.2"/>
<linearGradient id="g176" href="#s9" xlink:href="#s9" x1="889.0" y1="311.6" x2="889.9" y2="323.5"/>
<linearGradient id="g177" href="#s8" xlink:href="#s8" x1="901.3" y1="310.7" x2="905.9" y2="329.7"/>
<linearGradient id="g178" href="#s7" xlink:href="#s7" x1="901.3" y1="310.7" x2="900.4" y2="327.7"/>
<linearGradient id="g179" href="#s8" xlink:href="#s8" x1="915.4" y1="311.4" x2="912.0" y2="328.3"/>
<linearGradient id="g180" href="#s9" xlink:href="#s9" x1="915.4" y1="311.4" x2="916.0" y2="324.3"/>
<linearGradient id="g181" href="#s9" xlink:href="#s9" x1="930.3" y1="310.7" x2="928.9" y2="323.3"/>
<linearGradient id="g182" href="#s8" xlink:href="#s8" x1="941.2" y1="312.0" x2="945.3" y2="329.8"/>
<linearGradient id="g183" href="#s7" xlink:href="#s7" x1="941.2" y1="312.0" x2="942.7" y2="329.0"/>
<linearGradient id="g184" href="#s8" xlink:href="#s8" x1="956.1" y1="310.7" x2="952.8" y2="328.1"/>
<linearGradient id="g185" href="#s9" xlink:href="#s9" x1="956.1" y1="310.7" x2="955.7" y2="322.3"/>
<linearGradient id="g186" href="#s9" xlink:href="#s9" x1="969.6" y1="311.2" x2="969.4" y2="322.9"/>
<linearGradient id="g187" href="#s8" xlink:href="#s8" x1="982.9" y1="311.4" x2="986.3" y2="330.1"/>
<linearGradient id="g188" href="#s7" xlink:href="#s7" x1="982.9" y1="311.4" x2="982.5" y2="328.3"/>
<linearGradient id="g189" href="#s8" xlink:href="#s8" x1="997.3" y1="311.8" x2="994.2" y2="328.6"/>
<linearGradient id="g190" href="#s9" xlink:href="#s9" x1="997.3" y1="311.8" x2="998.3" y2="324.6"/>
<linearGradient id="g191" href="#s9" xlink:href="#s9" x1="1008.9" y1="310.9" x2="1008.0" y2="323.0"/>
<linearGradient id="g192" href="#s8" xlink:href="#s8" x1="1022.0" y1="311.8" x2="1026.1" y2="330.7"/>
<linearGradient id="g193" href="#s7" xlink:href="#s7" x1="1022.0" y1="311.8" x2="1022.7" y2="329.1"/>
<linearGradient id="g194" href="#s7" xlink:href="#s7" x1="1036.5" y1="311.2" x2="1036.2" y2="328.5"/>
<linearGradient id="g195" href="#s8" xlink:href="#s8" x1="1049.2" y1="311.4" x2="1044.4" y2="330.7"/>
<linearGradient id="g196" href="#s9" xlink:href="#s9" x1="1049.2" y1="311.4" x2="1049.2" y2="323.2"/>
<linearGradient id="g197" href="#s8" xlink:href="#s8" x1="1064.1" y1="311.4" x2="1068.6" y2="329.8"/>
<linearGradient id="g198" href="#s7" xlink:href="#s7" x1="1064.1" y1="311.4" x2="1063.5" y2="327.6"/>
<linearGradient id="g199" href="#s7" xlink:href="#s7" x1="1077.6" y1="311.8" x2="1078.3" y2="327.9"/>
<linearGradient id="g200" href="#s8" xlink:href="#s8" x1="1090.8" y1="311.2" x2="1085.9" y2="330.6"/>
<linearGradient id="g201" href="#s9" xlink:href="#s9" x1="1090.8" y1="311.2" x2="1090.4" y2="323.0"/>
<linearGradient id="g202" href="#s9" xlink:href="#s9" x1="1102.4" y1="311.6" x2="1103.3" y2="322.9"/>
<linearGradient id="g203" href="#s8" xlink:href="#s8" x1="1116.2" y1="310.6" x2="1119.6" y2="328.4"/>
<linearGradient id="g204" href="#s7" xlink:href="#s7" x1="1116.2" y1="310.6" x2="1115.1" y2="328.6"/>
<linearGradient id="g205" href="#s8" xlink:href="#s8" x1="1128.6" y1="311.4" x2="1124.4" y2="330.2"/>
<linearGradient id="g206" href="#s9" xlink:href="#s9" x1="1128.6" y1="311.4" x2="1128.8" y2="323.7"/>
<linearGradient id="g207" href="#s9" xlink:href="#s9" x1="1142.7" y1="311.2" x2="1142.4" y2="323.6"/>
<linearGradient id="g208" href="#s8" xlink:href="#s8" x1="1158.2" y1="311.6" x2="1161.1" y2="327.9"/>
<linearGradient id="g209" href="#s7" xlink:href="#s7" x1="1158.2" y1="311.6" x2="1158.4" y2="328.2"/>
<linearGradient id="g210" href="#s8" xlink:href="#s8" x1="1171.5" y1="311.4" x2="1167.2" y2="329.9"/>
<linearGradient id="g211" href="#s9" xlink:href="#s9" x1="1171.5" y1="311.4" x2="1171.4" y2="323.0"/>
<linearGradient id="g212" href="#s9" xlink:href="#s9" x1="1184.9" y1="311.5" x2="1185.6" y2="322.6"/>
<linearGradient id="g213" href="#s8" xlink:href="#s8" x1="1196.1" y1="310.8" x2="1199.4" y2="328.6"/>
<linearGradient id="g214" href="#s7" xlink:href="#s7" x1="1196.1" y1="310.8" x2="1195.3" y2="328.3"/>
<linearGradient id="g215" href="#s8" xlink:href="#s8" x1="1209.4" y1="311.4" x2="1205.8" y2="329.6"/>
<linearGradient id="g216" href="#s9" xlink:href="#s9" x1="1209.4" y1="311.4" x2="1209.4" y2="323.2"/>
<linearGradient id="g217" href="#s9" xlink:href="#s9" x1="1224.1" y1="311.3" x2="1223.9" y2="323.2"/>
<linearGradient id="g218" href="#s8" xlink:href="#s8" x1="1238.1" y1="311.6" x2="1240.8" y2="328.8"/>
<linearGradient id="g219" href="#s7" xlink:href="#s7" x1="1238.1" y1="311.6" x2="1238.6" y2="328.8"/>
<linearGradient id="g220" href="#s8" xlink:href="#s8" x1="1250.9" y1="311.2" x2="1247.3" y2="329.9"/>
<linearGradient id="g221" href="#s9" xlink:href="#s9" x1="1250.9" y1="311.2" x2="1250.5" y2="322.7"/>
<linearGradient id="g222" href="#s9" xlink:href="#s9" x1="1262.6" y1="311.7" x2="1263.0" y2="323.1"/>
<linearGradient id="g223" href="#s8" xlink:href="#s8" x1="1278.5" y1="311.2" x2="1281.5" y2="329.1"/>
<linearGradient id="g224" href="#s7" xlink:href="#s7" x1="1278.5" y1="311.2" x2="1278.0" y2="328.6"/>
<linearGradient id="g225" href="#s7" xlink:href="#s7" x1="1291.4" y1="311.6" x2="1293.0" y2="327.7"/>
<linearGradient id="g226" href="#s7" xlink:href="#s7" x1="1291.4" y1="311.6" x2="1291.7" y2="326.9"/>
<linearGradient id="s10" gradientUnits="userSpaceOnUse"><stop offset="0" stop-color="#00aaff"/><stop offset="1" stop-color="#0039ff"/></linearGradient>
<linearGradient id="g227" href="#s10" xlink:href="#s10" x1="849.0" y1="326.6" x2="846.2" y2="354.3"/>
<linearGradient id="g228" href="#s10" xlink:href="#s10" x1="869.2" y1="328.6" x2="869.2" y2="354.6"/>
<linearGradient id="s11" gradientUnits="userSpaceOnUse"><stop offset="0" stop-color="#00e3ff"/><stop offset="0.3333" stop-color="#00aaff"/><stop offset="1" stop-color="#0039ff"/></linearGradient>
<linearGradient id="g229" href="#s11" xlink:href="#s11" x1="871.6" y1="318.9" x2="864.3" y2="348.2"/>
<linearGradient id="g230" href="#s11" xlink:href="#s11" x1="890.1" y1="323.4" x2="897.6" y2="352.8"/>
<linearGradient id="g231" href="#s10" xlink:href="#s10" x1="911.8" y1="328.3" x2="911.8" y2="354.6"/>
<linearGradient id="g232" href="#s11" xlink:href="#s11" x1="914.5" y1="318.7" x2="906.4" y2="347.5"/>
<linearGradient id="g233" href="#s11" xlink:href="#s11" x1="931.6" y1="323.6" x2="939.5" y2="352.5"/>
<linearGradient id="g234" href="#s10" xlink:href="#s10" x1="952.8" y1="328.1" x2="952.8" y2="354.6"/>
<linearGradient id="g235" href="#s11" xlink:href="#s11" x1="955.4" y1="318.3" x2="947.5" y2="347.7"/>
<linearGradient id="g236" href="#s11" xlink:href="#s11" x1="972.5" y1="322.9" x2="979.2" y2="353.2"/>
<linearGradient id="g237" href="#s10" xlink:href="#s10" x1="994.4" y1="328.6" x2="994.4" y2="354.6"/>
<linearGradient id="g238" href="#s11" xlink:href="#s11" x1="997.0" y1="319.0" x2="989.3" y2="348.0"/>
<linearGradient id="g239" href="#s11" xlink:href="#s11" x1="1013.9" y1="323.5" x2="1021.1" y2="353.0"/>
<linearGradient id="g240" href="#s10" xlink:href="#s10" x1="1035.9" y1="328.5" x2="1035.9" y2="354.6"/>
<linearGradient id="g241" href="#s11" xlink:href="#s11" x1="1038.5" y1="318.8" x2="1030.8" y2="348.1"/>
<linearGradient id="g242" href="#s11" xlink:href="#s11" x1="1055.6" y1="323.2" x2="1063.8" y2="352.4"/>
<linearGradient id="g243" href="#s10" xlink:href="#s10" x1="1075.9" y1="328.0" x2="1075.9" y2="354.6"/>
<linearGradient id="g244" href="#s11" xlink:href="#s11" x1="1078.5" y1="318.2" x2="1070.7" y2="347.6"/>
<linearGradient id="g245" href="#s11" xlink:href="#s11" x1="1097.9" y1="323.3" x2="1105.2" y2="352.6"/>
<linearGradient id="g246" href="#s10" xlink:href="#s10" x1="1117.9" y1="328.7" x2="1117.9" y2="354.6"/>
<linearGradient id="g247" href="#s11" xlink:href="#s11" x1="1120.3" y1="319.0" x2="1113.1" y2="348.3"/>
<linearGradient id="g248" href="#s11" xlink:href="#s11" x1="1138.4" y1="323.5" x2="1146.2" y2="352.5"/>
<linearGradient id="g249" href="#s10" xlink:href="#s10" x1="1159.7" y1="328.2" x2="1159.7" y2="354.6"/>
<linearGradient id="g250" href="#s11" xlink:href="#s11" x1="1162.4" y1="318.4" x2="1154.5" y2="347.7"/>
<linearGradient id="g251" href="#s11" xlink:href="#s11" x1="1179.5" y1="323.0" x2="1186.9" y2="352.9"/>
<linearGradient id="g252" href="#s10" xlink:href="#s10" x1="1200.2" y1="328.5" x2="1200.2" y2="354.6"/>
<linearGradient id="g253" href="#s11" xlink:href="#s11" x1="1202.6" y1="318.6" x2="1195.3" y2="348.2"/>
<linearGradient id="g254" href="#s11" xlink:href="#s11" x1="1220.9" y1="323.1" x2="1228.1" y2="353.0"/>
<linearGradient id="g255" href="#s10" xlink:href="#s10" x1="1241.4" y1="328.7" x2="1241.4" y2="354.6"/>
<linearGradient id="g256" href="#s11" xlink:href="#s11" x1="1243.7" y1="318.8" x2="1236.7" y2="348.6"/>
<linearGradient id="g257" href="#s11" xlink:href="#s11" x1="1262.4" y1="323.2" x2="1269.4" y2="353.0"/>
<linearGradient id="g258" href="#s10" xlink:href="#s10" x1="1283.5" y1="328.7" x2="1283.5" y2="354.6"/>
<linearGradient id="g259" href="#s10" xlink:href="#s10" x1="1283.5" y1="328.7" x2="1286.3" y2="356.4"/>
<linearGradient id="g260" href="#bg" xlink:href="#bg" x1="849.0" y1="354.6" x2="849.0" y2="390.5"/>
<linearGradient id="g261" href="#bg" xlink:href="#bg" x1="890.4" y1="354.6" x2="856.5" y2="396.6"/>
<linearGradient id="g262" href="#bg" xlink:href="#bg" x1="890.4" y1="354.6" x2="890.4" y2="431.3"/>
<linearGradient id="g263" href="#bg" xlink:href="#bg" x1="931.7" y1="354.6" x2="931.7" y2="431.3"/>
<linearGradient id="g264" href="#bg" xlink:href="#bg" x1="931.7" y1="354.6" x2="931.7" y2="431.3"/>
<linearGradient id="g265" href="#bg" xlink:href="#bg" x1="973.1" y1="354.6" x2="973.1" y2="431.3"/>
<linearGradient id="g266" href="#bg" xlink:href="#bg" x1="973.1" y1="354.6" x2="973.1" y2="431.3"/>
<linearGradient id="g267" href="#bg" xlink:href="#bg" x1="1014.5" y1="354.6" x2="1014.5" y2="431.3"/>
<linearGradient id="g268" href="#bg" xlink:href="#bg" x1="1014.5" y1="354.6" x2="1014.5" y2="431.3"/>
<linearGradient id="g269" href="#bg" xlink:href="#bg" x1="1055.8" y1="354.6" x2="1086.4" y2="373.1"/>
<linearGradient id="g270" href="#bg" xlink:href="#bg" x1="1055.8" y1="354.6" x2="1055.8" y2="389.6"/>
<linearGradient id="g271" href="#bg" xlink:href="#bg" x1="1097.2" y1="354.6" x2="1066.5" y2="373.3"/>
<linearGradient id="g272" href="#bg" xlink:href="#bg" x1="1097.2" y1="354.6" x2="1097.2" y2="431.3"/>
<linearGradient id="g273" href="#bg" xlink:href="#bg" x1="1138.5" y1="354.6" x2="1138.5" y2="431.3"/>
<linearGradient id="g274" href="#bg" xlink:href="#bg" x1="1138.5" y1="354.6" x2="1138.5" y2="431.3"/>
<linearGradient id="g275" href="#bg" xlink:href="#bg" x1="1179.9" y1="354.6" x2="1179.9" y2="431.3"/>
<linearGradient id="g276" href="#bg" xlink:href="#bg" x1="1179.9" y1="354.6" x2="1179.9" y2="431.3"/>
<linearGradient id="g277" href="#bg" xlink:href="#bg" x1="1221.3" y1="354.6" x2="1221.3" y2="431.3"/>
<linearGradient id="g278" href="#bg" xlink:href="#bg" x1="1221.3" y1="354.6" x2="1221.3" y2="431.3"/>
<linearGradient id="g279" href="#bg" xlink:href="#bg" x1="1262.6" y1="354.6" x2="1296.5" y2="396.6"/>
<linearGradient id="g280" href="#bg" xlink:href="#bg" x1="1262.6" y1="354.6" x2="1262.6" y2="390.5"/>
</defs>
<g shape-rendering="crispEdges" stroke-width="0.6" stroke-linejoin="round">
<polygon points="849.0,127.0 899.6,127.0 899.6,177.6" fill="url(#g1)" stroke="url(#g1)"/>
<polygon points="849.0,127.0 899.6,177.6 849.0,177.6" fill="url(#g2)" stroke="url(#g2)"/>
<polygon points="899.6,127.0 950.1,127.0 899.6,177.6" fill="url(#g3)" stroke="url(#g3)"/>
<polygon points="950.1,127.0 950.1,177.6 899.6,177.6" fill="url(#g4)" stroke="url(#g4)"/>
<polygon points="950.1,127.0 1000.7,127.0 1000.7,177.6" fill="url(#g5)" stroke="url(#g5)"/>
<polygon points="950.1,127.0 1000.7,177.6 950.1,177.6" fill="url(#g6)" stroke="url(#g6)"/>
<polygon points="1000.7,127.0 1051.2,127.0 1051.2,177.6" fill="url(#g7)" stroke="url(#g7)"/>
<polygon points="1000.7,127.0 1051.2,177.6 1000.7,177.6" fill="url(#g8)" stroke="url(#g8)"/>
<polygon points="1051.2,127.0 1101.8,127.0 1051.2,177.6" fill="url(#g9)" stroke="url(#g9)"/>
<polygon points="1101.8,127.0 1101.8,177.6 1051.2,177.6" fill="url(#g10)" stroke="url(#g10)"/>
<polygon points="1101.8,127.0 1152.3,127.0 1152.3,177.6" fill="url(#g11)" stroke="url(#g11)"/>
<polygon points="1101.8,127.0 1152.3,177.6 1101.8,177.6" fill="url(#g12)" stroke="url(#g12)"/>
<polygon points="1152.3,127.0 1202.9,127.0 1202.9,177.6" fill="url(#g13)" stroke="url(#g13)"/>
<polygon points="1152.3,127.0 1202.9,177.6 1152.3,177.6" fill="url(#g14)" stroke="url(#g14)"/>
<polygon points="1202.9,127.0 1253.4,127.0 1202.9,177.6" fill="url(#g15)" stroke="url(#g15)"/>
<polygon points="1253.4,127.0 1253.4,177.6 1202.9,177.6" fill="url(#g16)" stroke="url(#g16)"/>
<polygon points="1253.4,127.0 1304.0,127.0 1253.4,177.6" fill="url(#g17)" stroke="url(#g17)"/>
<polygon points="1304.0,127.0 1304.0,177.6 1253.4,177.6" fill="url(#g18)" stroke="url(#g18)"/>
<polygon points="849.0,177.6 899.6,177.6 849.0,196.8" fill="url(#g19)" stroke="url(#g19)"/>
<polygon points="849.0,196.8 899.6,177.6 881.8,213.3" fill="url(#g20)" stroke="url(#g20)"/>
<polygon points="849.0,196.8 881.8,213.3 849.0,214.5" fill="url(#g21)" stroke="url(#g21)"/>
<polygon points="1304.0,177.6 1253.4,177.6 1304.0,195.0" fill="url(#g22)" stroke="url(#g22)"/>
<polygon points="1304.0,195.0 1253.4,177.6 1271.6,213.3" fill="url(#g23)" stroke="url(#g23)"/>
<polygon points="1304.0,195.0 1271.6,213.3 1304.0,214.0" fill="url(#g24)" stroke="url(#g24)"/>
<polygon points="899.6,177.6 881.8,213.3 919.4,208.8" fill="url(#g25)" stroke="url(#g25)"/>
<polygon points="899.6,177.6 950.1,177.6 919.4,208.8" fill="url(#g26)" stroke="url(#g26)"/>
<polygon points="950.1,177.6 919.4,208.8 946.0,216.5" fill="url(#g27)" stroke="url(#g27)"/>
<polygon points="950.1,177.6 946.0,216.5 973.3,208.8" fill="url(#g28)" stroke="url(#g28)"/>
<polygon points="950.1,177.6 1000.7,177.6 973.3,208.8" fill="url(#g29)" stroke="url(#g29)"/>
<polygon points="1000.7,177.6 973.3,208.8 998.4,216.0" fill="url(#g30)" stroke="url(#g30)"/>
<polygon points="1000.7,177.6 998.4,216.0 1023.4,208.8" fill="url(#g31)" stroke="url(#g31)"/>
<polygon points="1000.7,177.6 1051.2,177.6 1023.4,208.8" fill="url(#g32)" stroke="url(#g32)"/>
<polygon points="1051.2,177.6 1023.4,208.8 1048.8,216.0" fill="url(#g33)" stroke="url(#g33)"/>
<polygon points="1051.2,177.6 1048.8,216.0 1073.2,208.8" fill="url(#g34)" stroke="url(#g34)"/>
<polygon points="1051.2,177.6 1101.8,177.6 1073.2,208.8" fill="url(#g35)" stroke="url(#g35)"/>
<polygon points="1101.8,177.6 1073.2,208.8 1099.3,216.0" fill="url(#g36)" stroke="url(#g36)"/>
<polygon points="1101.8,177.6 1099.3,216.0 1125.4,208.8" fill="url(#g37)" stroke="url(#g37)"/>
<polygon points="1101.8,177.6 1152.3,177.6 1125.4,208.8" fill="url(#g38)" stroke="url(#g38)"/>
<polygon points="1152.3,177.6 1125.4,208.8 1149.8,216.0" fill="url(#g39)" stroke="url(#g39)"/>
<polygon points="1152.3,177.6 1149.8,216.0 1175.9,208.8" fill="url(#g40)" stroke="url(#g40)"/>
<polygon points="1152.3,177.6 1202.9,177.6 1175.9,208.8" fill="url(#g41)" stroke="url(#g41)"/>
<polygon points="1202.9,177.6 1175.9,208.8 1202.0,216.0" fill="url(#g42)" stroke="url(#g42)"/>
<polygon points="1202.9,177.6 1202.0,216.0 1233.3,212.3" fill="url(#g43)" stroke="url(#g43)"/>
<polygon points="1202.9,177.6 1253.4,177.6 1233.3,212.3" fill="url(#g44)" stroke="url(#g44)"/>
<polygon points="1253.4,177.6 1233.3,212.3 1271.6,213.3" fill="url(#g45)" stroke="url(#g45)"/>
<polygon points="849.0,214.5 849.0,233.9 861.2,234.1" fill="url(#g46)" stroke="url(#g46)"/>
<polygon points="849.0,214.5 881.8,213.3 861.2,234.1" fill="url(#g47)" stroke="url(#g47)"/>
<polygon points="881.8,213.3 861.2,234.1 874.6,233.0" fill="url(#g48)" stroke="url(#g48)"/>
<polygon points="881.8,213.3 874.6,233.0 887.0,234.3" fill="url(#g49)" stroke="url(#g49)"/>
<polygon points="881.8,213.3 887.0,234.3 898.5,233.4" fill="url(#g50)" stroke="url(#g50)"/>
<polygon points="881.8,213.3 919.4,208.8 898.5,233.4" fill="url(#g51)" stroke="url(#g51)"/>
<polygon points="919.4,208.8 898.5,233.4 911.1,234.3" fill="url(#g52)" stroke="url(#g52)"/>
<polygon points="919.4,208.8 911.1,234.3 923.8,233.0" fill="url(#g53)" stroke="url(#g53)"/>
<polygon points="919.4,208.8 946.0,216.5 923.8,233.0" fill="url(#g54)" stroke="url(#g54)"/>
<polygon points="946.0,216.5 923.8,233.0 937.3,234.7" fill="url(#g55)" stroke="url(#g55)"/>
<polygon points="946.0,216.5 937.3,234.7 949.2,233.1" fill="url(#g56)" stroke="url(#g56)"/>
<polygon points="946.0,216.5 949.2,233.1 963.1,234.8" fill="url(#g57)" stroke="url(#g57)"/>
<polygon points="946.0,216.5 973.3,208.8 963.1,234.8" fill="url(#g58)" stroke="url(#g58)"/>
<polygon points="973.3,208.8 963.1,234.8 975.6,233.3" fill="url(#g59)" stroke="url(#g59)"/>
<polygon points="973.3,208.8 998.4,216.0 975.6,233.3" fill="url(#g60)" stroke="url(#g60)"/>
<polygon points="998.4,216.0 975.6,233.3 989.2,233.9" fill="url(#g61)" stroke="url(#g61)"/>
<polygon points="998.4,216.0 989.2,233.9 1001.5,233.2" fill="url(#g62)" stroke="url(#g62)"/>
<polygon points="998.4,216.0 1001.5,233.2 1012.5,234.0" fill="url(#g63)" stroke="url(#g63)"/>
<polygon points="998.4,216.0 1023.4,208.8 1012.5,234.0" fill="url(#g64)" stroke="url(#g64)"/>
<polygon points="1023.4,208.8 1012.5,234.0 1025.5,233.7" fill="url(#g65)" stroke="url(#g65)"/>
<polygon points="1023.4,208.8 1048.8,216.0 1025.5,233.7" fill="url(#g66)" stroke="url(#g66)"/>
<polygon points="1048.8,216.0 1025.5,233.7 1037.8,234.5" fill="url(#g67)" stroke="url(#g67)"/>
<polygon points="1048.8,216.0 1037.8,234.5 1051.6,233.3" fill="url(#g68)" stroke="url(#g68)"/>
<polygon points="1048.8,216.0 1051.6,233.3 1064.0,234.0" fill="url(#g69)" stroke="url(#g69)"/>
<polygon points="1048.8,216.0 1073.2,208.8 1064.0,234.0" fill="url(#g70)" stroke="url(#g70)"/>
<polygon points="1073.2,208.8 1064.0,234.0 1075.4,233.1" fill="url(#g71)" stroke="url(#g71)"/>
<polygon points="1073.2,208.8 1099.3,216.0 1075.4,233.1" fill="url(#g72)" stroke="url(#g72)"/>
<polygon points="1099.3,216.0 1075.4,233.1 1089.6,234.3" fill="url(#g73)" stroke="url(#g73)"/>
<polygon points="1099.3,216.0 1089.6,234.3 1101.3,233.5" fill="url(#g74)" stroke="url(#g74)"/>
<polygon points="1099.3,216.0 1101.3,233.5 1114.3,234.2" fill="url(#g75)" stroke="url(#g75)"/>
<polygon points="1099.3,216.0 1125.4,208.8 1114.3,234.2" fill="url(#g76)" stroke="url(#g76)"/>
<polygon points="1125.4,208.8 1114.3,234.2 1127.8,233.6" fill="url(#g77)" stroke="url(#g77)"/>
<polygon points="1125.4,208.8 1149.8,216.0 1127.8,233.6" fill="url(#g78)" stroke="url(#g78)"/>
<polygon points="1149.8,216.0 1127.8,233.6 1139.1,234.5" fill="url(#g79)" stroke="url(#g79)"/>
<polygon points="1149.8,216.0 1139.1,234.5 1152.4,233.8" fill="url(#g80)" stroke="url(#g80)"/>
<polygon points="1149.8,216.0 1152.4,233.8 1165.5,234.2" fill="url(#g81)" stroke="url(#g81)"/>
<polygon points="1149.8,216.0 1175.9,208.8 1165.5,234.2" fill="url(#g82)" stroke="url(#g82)"/>
<polygon points="1175.9,208.8 1165.5,234.2 1178.8,233.0" fill="url(#g83)" stroke="url(#g83)"/>
<polygon points="1175.9,208.8 1202.0,216.0 1178.8,233.0" fill="url(#g84)" stroke="url(#g84)"/>
<polygon points="1202.0,216.0 1178.8,233.0 1190.1,234.7" fill="url(#g85)" stroke="url(#g85)"/>
<polygon points="1202.0,216.0 1190.1,234.7 1202.1,233.4" fill="url(#g86)" stroke="url(#g86)"/>
<polygon points="1202.0,216.0 1202.1,233.4 1214.4,234.6" fill="url(#g87)" stroke="url(#g87)"/>
<polygon points="1202.0,216.0 1233.3,212.3 1214.4,234.6" fill="url(#g88)" stroke="url(#g88)"/>
<polygon points="1233.3,212.3 1214.4,234.6 1228.8,233.5" fill="url(#g89)" stroke="url(#g89)"/>
<polygon points="1233.3,212.3 1228.8,233.5 1241.7,234.2" fill="url(#g90)" stroke="url(#g90)"/>
<polygon points="1233.3,212.3 1241.7,234.2 1253.9,233.5" fill="url(#g91)" stroke="url(#g91)"/>
<polygon points="1233.3,212.3 1271.6,213.3 1253.9,233.5" fill="url(#g92)" stroke="url(#g92)"/>
<polygon points="1271.6,213.3 1253.9,233.5 1266.3,234.4" fill="url(#g93)" stroke="url(#g93)"/>
<polygon points="1271.6,213.3 1266.3,234.4 1279.5,233.8" fill="url(#g94)" stroke="url(#g94)"/>
<polygon points="1271.6,213.3 1279.5,233.8 1291.3,234.6" fill="url(#g95)" stroke="url(#g95)"/>
<polygon points="1271.6,213.3 1304.0,214.0 1291.3,234.6" fill="url(#g96)" stroke="url(#g96)"/>
<polygon points="1304.0,214.0 1291.3,234.6 1304.0,233.9" fill="url(#g97)" stroke="url(#g97)"/>
<polygon points="849.0,233.9 849.0,245.9 854.9,246.1" fill="url(#g98)" stroke="url(#g98)"/>
<polygon points="849.0,233.9 861.2,234.1 854.9,246.1" fill="url(#g99)" stroke="url(#g99)"/>
<polygon points="861.2,234.1 854.9,246.1 867.7,246.2" fill="url(#g100)" stroke="url(#g100)"/>
<polygon points="861.2,234.1 874.6,233.0 867.7,246.2" fill="url(#g101)" stroke="url(#g101)"/>
<polygon points="874.6,233.0 867.7,246.2 881.1,246.0" fill="url(#g102)" stroke="url(#g102)"/>
<polygon points="874.6,233.0 887.0,234.3 881.1,246.0" fill="url(#g103)" stroke="url(#g103)"/>
<polygon points="887.0,234.3 881.1,246.0 893.4,245.9" fill="url(#g104)" stroke="url(#g104)"/>
<polygon points="887.0,234.3 898.5,233.4 893.4,245.9" fill="url(#g105)" stroke="url(#g105)"/>
<polygon points="898.5,233.4 893.4,245.9 905.3,246.0" fill="url(#g106)" stroke="url(#g106)"/>
<polygon points="898.5,233.4 911.1,234.3 905.3,246.0" fill="url(#g107)" stroke="url(#g107)"/>
<polygon points="911.1,234.3 905.3,246.0 917.7,245.7" fill="url(#g108)" stroke="url(#g108)"/>
<polygon points="911.1,234.3 923.8,233.0 917.7,245.7" fill="url(#g109)" stroke="url(#g109)"/>
<polygon points="923.8,233.0 917.7,245.7 930.4,245.9" fill="url(#g110)" stroke="url(#g110)"/>
<polygon points="923.8,233.0 937.3,234.7 930.4,245.9" fill="url(#g111)" stroke="url(#g111)"/>
<polygon points="937.3,234.7 930.4,245.9 943.0,245.9" fill="url(#g112)" stroke="url(#g112)"/>
<polygon points="937.3,234.7 949.2,233.1 943.0,245.9" fill="url(#g113)" stroke="url(#g113)"/>
<polygon points="949.2,233.1 943.0,245.9 956.0,245.9" fill="url(#g114)" stroke="url(#g114)"/>
<polygon points="949.2,233.1 963.1,234.8 956.0,245.9" fill="url(#g115)" stroke="url(#g115)"/>
<polygon points="963.1,234.8 956.0,245.9 968.5,246.0" fill="url(#g116)" stroke="url(#g116)"/>
<polygon points="963.1,234.8 975.6,233.3 968.5,246.0" fill="url(#g117)" stroke="url(#g117)"/>
<polygon points="975.6,233.3 968.5,246.0 981.3,246.0" fill="url(#g118)" stroke="url(#g118)"/>
<polygon points="975.6,233.3 989.2,233.9 981.3,246.0" fill="url(#g119)" stroke="url(#g119)"/>
<polygon points="989.2,233.9 981.3,246.0 994.7,246.2" fill="url(#g120)" stroke="url(#g120)"/>
<polygon points="989.2,233.9 1001.5,233.2 994.7,246.2" fill="url(#g121)" stroke="url(#g121)"/>
<polygon points="1001.5,233.2 994.7,246.2 1007.1,246.0" fill="url(#g122)" stroke="url(#g122)"/>
<polygon points="1001.5,233.2 1012.5,234.0 1007.1,246.0" fill="url(#g123)" stroke="url(#g123)"/>
<polygon points="1012.5,234.0 1007.1,246.0 1019.3,246.0" fill="url(#g124)" stroke="url(#g124)"/>
<polygon points="1012.5,234.0 1025.5,233.7 1019.3,246.0" fill="url(#g125)" stroke="url(#g125)"/>
<polygon points="1025.5,233.7 1019.3,246.0 1032.6,245.9" fill="url(#g126)" stroke="url(#g126)"/>
<polygon points="1025.5,233.7 1037.8,234.5 1032.6,245.9" fill="url(#g127)" stroke="url(#g127)"/>
<polygon points="1037.8,234.5 1032.6,245.9 1045.0,245.7" fill="url(#g128)" stroke="url(#g128)"/>
<polygon points="1037.8,234.5 1051.6,233.3 1045.0,245.7" fill="url(#g129)" stroke="url(#g129)"/>
<polygon points="1051.6,233.3 1045.0,245.7 1057.0,245.8" fill="url(#g130)" stroke="url(#g130)"/>
<polygon points="1051.6,233.3 1064.0,234.0 1057.0,245.8" fill="url(#g131)" stroke="url(#g131)"/>
<polygon points="1064.0,234.0 1057.0,245.8 1070.0,245.8" fill="url(#g132)" stroke="url(#g132)"/>
<polygon points="1064.0,234.0 1075.4,233.1 1070.0,245.8" fill="url(#g133)" stroke="url(#g133)"/>
<polygon points="1075.4,233.1 1070.0,245.8 1082.4,245.8" fill="url(#g134)" stroke="url(#g134)"/>
<polygon points="1075.4,233.1 1089.6,234.3 1082.4,245.8" fill="url(#g135)" stroke="url(#g135)"/>
<polygon points="1089.6,234.3 1082.4,245.8 1094.8,245.9" fill="url(#g136)" stroke="url(#g136)"/>
<polygon points="1089.6,234.3 1101.3,233.5 1094.8,245.9" fill="url(#g137)" stroke="url(#g137)"/>
<polygon points="1101.3,233.5 1094.8,245.9 1108.4,246.0" fill="url(#g138)" stroke="url(#g138)"/>
<polygon points="1101.3,233.5 1114.3,234.2 1108.4,246.0" fill="url(#g139)" stroke="url(#g139)"/>
<polygon points="1114.3,234.2 1108.4,246.0 1121.2,246.0" fill="url(#g140)" stroke="url(#g140)"/>
<polygon points="1114.3,234.2 1127.8,233.6 1121.2,246.0" fill="url(#g141)" stroke="url(#g141)"/>
<polygon points="1127.8,233.6 1121.2,246.0 1133.6,245.8" fill="url(#g142)" stroke="url(#g142)"/>
<polygon points="1127.8,233.6 1139.1,234.5 1133.6,245.8" fill="url(#g143)" stroke="url(#g143)"/>
<polygon points="1139.1,234.5 1133.6,245.8 1146.6,245.8" fill="url(#g144)" stroke="url(#g144)"/>
<polygon points="1139.1,234.5 1152.4,233.8 1146.6,245.8" fill="url(#g145)" stroke="url(#g145)"/>
<polygon points="1152.4,233.8 1146.6,245.8 1159.4,246.1" fill="url(#g146)" stroke="url(#g146)"/>
<polygon points="1152.4,233.8 1165.5,234.2 1159.4,246.1" fill="url(#g147)" stroke="url(#g147)"/>
<polygon points="1165.5,234.2 1159.4,246.1 1171.6,246.0" fill="url(#g148)" stroke="url(#g148)"/>
<polygon points="1165.5,234.2 1178.8,233.0 1171.6,246.0" fill="url(#g149)" stroke="url(#g149)"/>
<polygon points="1178.8,233.0 1171.6,246.0 1183.4,245.9" fill="url(#g150)" stroke="url(#g150)"/>
<polygon points="1178.8,233.0 1190.1,234.7 1183.4,245.9" fill="url(#g151)" stroke="url(#g151)"/>
<polygon points="1190.1,234.7 1183.4,245.9 1195.7,245.8" fill="url(#g152)" stroke="url(#g152)"/>
<polygon points="1190.1,234.7 1202.1,233.4 1195.7,245.8" fill="url(#g153)" stroke="url(#g153)"/>
<polygon points="1202.1,233.4 1195.7,245.8 1208.5,245.6" fill="url(#g154)" stroke="url(#g154)"/>
<polygon points="1202.1,233.4 1214.4,234.6 1208.5,245.6" fill="url(#g155)" stroke="url(#g155)"/>
<polygon points="1214.4,234.6 1208.5,245.6 1221.4,245.6" fill="url(#g156)" stroke="url(#g156)"/>
<polygon points="1214.4,234.6 1228.8,233.5 1221.4,245.6" fill="url(#g157)" stroke="url(#g157)"/>
<polygon points="1228.8,233.5 1221.4,245.6 1233.8,245.6" fill="url(#g158)" stroke="url(#g158)"/>
<polygon points="1228.8,233.5 1241.7,234.2 1233.8,245.6" fill="url(#g159)" stroke="url(#g159)"/>
<polygon points="1241.7,234.2 1233.8,245.6 1246.2,245.7" fill="url(#g160)" stroke="url(#g160)"/>
<polygon points="1241.7,234.2 1253.9,233.5 1246.2,245.7" fill="url(#g161)" stroke="url(#g161)"/>
<polygon points="1253.9,233.5 1246.2,245.7 1258.9,246.0" fill="url(#g162)" stroke="url(#g162)"/>
<polygon points="1253.9,233.5 1266.3,234.4 1258.9,246.0" fill="url(#g163)" stroke="url(#g163)"/>
<polygon points="1266.3,234.4 1258.9,246.0 1272.0,245.9" fill="url(#g164)" stroke="url(#g164)"/>
<polygon points="1266.3,234.4 1279.5,233.8 1272.0,245.9" fill="url(#g165)" stroke="url(#g165)"/>
<polygon points="1279.5,233.8 1272.0,245.9 1284.9,245.7" fill="url(#g166)" stroke="url(#g166)"/>
<polygon points="1279.5,233.8 1291.3,234.6 1284.9,245.7" fill="url(#g167)" stroke="url(#g167)"/>
<polygon points="1291.3,234.6 1284.9,245.7 1297.4,246.0" fill="url(#g168)" stroke="url(#g168)"/>
<polygon points="1291.3,234.6 1304.0,233.9 1297.4,246.0" fill="url(#g169)" stroke="url(#g169)"/>
<polygon points="1304.0,233.9 1297.4,246.0 1304.0,245.9" fill="url(#g170)" stroke="url(#g170)"/>
<polygon points="849.0,245.9 854.9,246.1 849.0,253.5" fill="#85ff00" stroke="#85ff00"/>
<polygon points="854.9,246.1 849.0,253.5 855.4,253.5" fill="#85ff00" stroke="#85ff00"/>
<polygon points="854.9,246.1 855.4,253.5 861.8,253.5" fill="#85ff00" stroke="#85ff00"/>
<polygon points="854.9,246.1 867.7,246.2 861.8,253.5" fill="#85ff00" stroke="#85ff00"/>
<polygon points="867.7,246.2 861.8,253.5 868.2,253.5" fill="#85ff00" stroke="#85ff00"/>
<polygon points="867.7,246.2 868.2,253.5 874.6,253.5" fill="#85ff00" stroke="#85ff00"/>
<polygon points="867.7,246.2 881.1,246.0 874.6,253.5" fill="#85ff00" stroke="#85ff00"/>
<polygon points="881.1,246.0 874.6,253.5 881.0,253.5" fill="#85ff00" stroke="#85ff00"/>
<polygon points="881.1,246.0 881.0,253.5 887.5,253.5" fill="#85ff00" stroke="#85ff00"/>
<polygon points="881.1,246.0 893.4,245.9 887.5,253.5" fill="#85ff00" stroke="#85ff00"/>
<polygon points="893.4,245.9 887.5,253.5 893.9,253.5" fill="#85ff00" stroke="#85ff00"/>
<polygon points="893.4,245.9 893.9,253.5 900.3,253.5" fill="#85ff00" stroke="#85ff00"/>
<polygon points="893.4,245.9 905.3,246.0 900.3,253.5" fill="#85ff00" stroke="#85ff00"/>
<polygon points="905.3,246.0 900.3,253.5 906.7,253.5" fill="#85ff00" stroke="#85ff00"/>
<polygon points="905.3,246.0 906.7,253.5 913.1,253.5" fill="#85ff00" stroke="#85ff00"/>
<polygon points="905.3,246.0 917.7,245.7 913.1,253.5" fill="#85ff00" stroke="#85ff00"/>
<polygon points="917.7,245.7 913.1,253.5 919.5,253.5" fill="#85ff00" stroke="#85ff00"/>
<polygon points="917.7,245.7 919.5,253.5 925.9,253.5" fill="#85ff00" stroke="#85ff00"/>
<polygon points="917.7,245.7 930.4,245.9 925.9,253.5" fill="#85ff00" stroke="#85ff00"/>
<polygon points="930.4,245.9 925.9,253.5 932.3,253.5" fill="#85ff00" stroke="#85ff00"/>
<polygon points="930.4,245.9 932.3,253.5 938.7,253.5" fill="#85ff00" stroke="#85ff00"/>
<polygon points="930.4,245.9 943.0,245.9 938.7,253.5" fill="#85ff00" stroke="#85ff00"/>
<polygon points="943.0,245.9 938.7,253.5 945.1,253.5" fill="#85ff00" stroke="#85ff00"/>
<polygon points="943.0,245.9 945.1,253.5 951.5,253.5" fill="#85ff00" stroke="#85ff00"/>
<polygon points="943.0,245.9 956.0,245.9 951.5,253.5" fill="#85ff00" stroke="#85ff00"/>
<polygon points="956.0,245.9 951.5,253.5 957.9,253.5" fill="#85ff00" stroke="#85ff00"/>
<polygon points="956.0,245.9 957.9,253.5 964.4,253.5" fill="#85ff00" stroke="#85ff00"/>
<polygon points="956.0,245.9 968.5,246.0 964.4,253.5" fill="#85ff00" stroke="#85ff00"/>
<polygon points="968.5,246.0 964.4,253.5 970.8,253.5" fill="#85ff00" stroke="#85ff00"/>
<polygon points="968.5,246.0 970.8,253.5 977.2,253.5" fill="#85ff00" stroke="#85ff00"/>
<polygon points="968.5,246.0 981.3,246.0 977.2,253.5" fill="#85ff00" stroke="#85ff00"/>
<polygon points="981.3,246.0 977.2,253.5 983.6,253.5" fill="#85ff00" stroke="#85ff00"/>
<polygon points="981.3,246.0 983.6,253.5 990.0,253.5" fill="#85ff00" stroke="#85ff00"/>
<polygon points="981.3,246.0 994.7,246.2 990.0,253.5" fill="#85ff00" stroke="#85ff00"/>
<polygon points="994.7,246.2 990.0,253.5 996.4,253.5" fill="#85ff00" stroke="#85ff00"/>
<polygon points="994.7,246.2 996.4,253.5 1002.8,253.5" fill="#85ff00" stroke="#85ff00"/>
<polygon points="994.7,246.2 1007.1,246.0 1002.8,253.5" fill="#85ff00" stroke="#85ff00"/>
<polygon points="1007.1,246.0 1002.8,253.5 1009.2,253.5" fill="#85ff00" stroke="#85ff00"/>
<polygon points="1007.1,246.0 1009.2,253.5 1015.6,253.5" fill="#85ff00" stroke="#85ff00"/>
<polygon points="1007.1,246.0 1019.3,246.0 1015.6,253.5" fill="#85ff00" stroke="#85ff00"/>
<polygon points="1019.3,246.0 1015.6,253.5 1022.0,253.5" fill="#85ff00" stroke="#85ff00"/>
<polygon points="1019.3,246.0 1022.0,253.5 1028.4,253.5" fill="#85ff00" stroke="#85ff00"/>
<polygon points="1019.3,246.0 1032.6,245.9 1028.4,253.5" fill="#85ff00" stroke="#85ff00"/>
<polygon points="1032.6,245.9 1028.4,253.5 1034.8,253.5" fill="#85ff00" stroke="#85ff00"/>
<polygon points="1032.6,245.9 1034.8,253.5 1041.3,253.5" fill="#85ff00" stroke="#85ff00"/>
<polygon points="1032.6,245.9 1045.0,245.7 1041.3,253.5" fill="#85ff00" stroke="#85ff00"/>
<polygon points="1045.0,245.7 1041.3,253.5 1047.7,253.5" fill="#85ff00" stroke="#85ff00"/>
<polygon points="1045.0,245.7 1047.7,253.5 1054.1,253.5" fill="#85ff00" stroke="#85ff00"/>
<polygon points="1045.0,245.7 1057.0,245.8 1054.1,253.5" fill="#85ff00" stroke="#85ff00"/>
<polygon points="1057.0,245.8 1054.1,253.5 1060.5,253.5" fill="#85ff00" stroke="#85ff00"/>
<polygon points="1057.0,245.8 1070.0,245.8 1060.5,253.5" fill="#85ff00" stroke="#85ff00"/>
<polygon points="1070.0,245.8 1060.5,253.5 1066.9,253.5" fill="#85ff00" stroke="#85ff00"/>
<polygon points="1070.0,245.8 1066.9,253.5 1073.3,253.5" fill="#85ff00" stroke="#85ff00"/>
<polygon points="1070.0,245.8 1082.4,245.8 1073.3,253.5" fill="#85ff00" stroke="#85ff00"/>
<polygon points="1082.4,245.8 1073.3,253.5 1079.7,253.5" fill="#85ff00" stroke="#85ff00"/>
<polygon points="1082.4,245.8 1079.7,253.5 1086.1,253.5" fill="#85ff00" stroke="#85ff00"/>
<polygon points="1082.4,245.8 1094.8,245.9 1086.1,253.5" fill="#85ff00" stroke="#85ff00"/>
<polygon points="1094.8,245.9 1086.1,253.5 1092.5,253.5" fill="#85ff00" stroke="#85ff00"/>
<polygon points="1094.8,245.9 1092.5,253.5 1098.9,253.5" fill="#85ff00" stroke="#85ff00"/>
<polygon points="1094.8,245.9 1108.4,246.0 1098.9,253.5" fill="#85ff00" stroke="#85ff00"/>
<polygon points="1108.4,246.0 1098.9,253.5 1105.3,253.5" fill="#85ff00" stroke="#85ff00"/>
<polygon points="1108.4,246.0 1105.3,253.5 1111.7,253.5" fill="#85ff00" stroke="#85ff00"/>
<polygon points="1108.4,246.0 1121.2,246.0 1111.7,253.5" fill="#85ff00" stroke="#85ff00"/>
<polygon points="1121.2,246.0 1111.7,253.5 1118.2,253.5" fill="#85ff00" stroke="#85ff00"/>
<polygon points="1121.2,246.0 1118.2,253.5 1124.6,253.5" fill="#85ff00" stroke="#85ff00"/>
<polygon points="1121.2,246.0 1133.6,245.8 1124.6,253.5" fill="#85ff00" stroke="#85ff00"/>
<polygon points="1133.6,245.8 1124.6,253.5 1131.0,253.5" fill="#85ff00" stroke="#85ff00"/>
<polygon points="1133.6,245.8 1131.0,253.5 1137.4,253.5" fill="#85ff00" stroke="#85ff00"/>
<polygon points="1133.6,245.8 1146.6,245.8 1137.4,253.5" fill="#85ff00" stroke="#85ff00"/>
<polygon points="1146.6,245.8 1137.4,253.5 1143.8,253.5" fill="#85ff00" stroke="#85ff00"/>
<polygon points="1146.6,245.8 1143.8,253.5 1150.2,253.5" fill="#85ff00" stroke="#85ff00"/>
<polygon points="1146.6,245.8 1159.4,246.1 1150.2,253.5" fill="#85ff00" stroke="#85ff00"/>
<polygon points="1159.4,246.1 1150.2,253.5 1156.6,253.5" fill="#85ff00" stroke="#85ff00"/>
<polygon points="1159.4,246.1 1156.6,253.5 1163.0,253.5" fill="#85ff00" stroke="#85ff00"/>
<polygon points="1159.4,246.1 1171.6,246.0 1163.0,253.5" fill="#85ff00" stroke="#85ff00"/>
<polygon points="1171.6,246.0 1163.0,253.5 1169.4,253.5" fill="#85ff00" stroke="#85ff00"/>
<polygon points="1171.6,246.0 1169.4,253.5 1175.8,253.5" fill="#85ff00" stroke="#85ff00"/>
<polygon points="1171.6,246.0 1183.4,245.9 1175.8,253.5" fill="#85ff00" stroke="#85ff00"/>
<polygon points="1183.4,245.9 1175.8,253.5 1182.2,253.5" fill="#85ff00" stroke="#85ff00"/>
<polygon points="1183.4,245.9 1182.2,253.5 1188.6,253.5" fill="#85ff00" stroke="#85ff00"/>
<polygon points="1183.4,245.9 1195.7,245.8 1188.6,253.5" fill="#85ff00" stroke="#85ff00"/>
<polygon points="1195.7,245.8 1188.6,253.5 1195.1,253.5" fill="#85ff00" stroke="#85ff00"/>
<polygon points="1195.7,245.8 1195.1,253.5 1201.5,253.5" fill="#85ff00" stroke="#85ff00"/>
<polygon points="1195.7,245.8 1208.5,245.6 1201.5,253.5" fill="#85ff00" stroke="#85ff00"/>
<polygon points="1208.5,245.6 1201.5,253.5 1207.9,253.5" fill="#85ff00" stroke="#85ff00"/>
<polygon points="1208.5,245.6 1207.9,253.5 1214.3,253.5" fill="#85ff00" stroke="#85ff00"/>
<polygon points="1208.5,245.6 1221.4,245.6 1214.3,253.5" fill="#85ff00" stroke="#85ff00"/>
<polygon points="1221.4,245.6 1214.3,253.5 1220.7,253.5" fill="#85ff00" stroke="#85ff00"/>
<polygon points="1221.4,245.6 1220.7,253.5 1227.1,253.5" fill="#85ff00" stroke="#85ff00"/>
<polygon points="1221.4,245.6 1233.8,245.6 1227.1,253.5" fill="#85ff00" stroke="#85ff00"/>
<polygon points="1233.8,245.6 1227.1,253.5 1233.5,253.5" fill="#85ff00" stroke="#85ff00"/>
<polygon points="1233.8,245.6 1233.5,253.5 1239.9,253.5" fill="#85ff00" stroke="#85ff00"/>
<polygon points="1233.8,245.6 1246.2,245.7 1239.9,253.5" fill="#85ff00" stroke="#85ff00"/>
<polygon points="1246.2,245.7 1239.9,253.5 1246.3,253.5" fill="#85ff00" stroke="#85ff00"/>
<polygon points="1246.2,245.7 1246.3,253.5 1252.7,253.5" fill="#85ff00" stroke="#85ff00"/>
<polygon points="1246.2,245.7 1258.9,246.0 1252.7,253.5" fill="#85ff00" stroke="#85ff00"/>
<polygon points="1258.9,246.0 1252.7,253.5 1259.1,253.5" fill="#85ff00" stroke="#85ff00"/>
<polygon points="1258.9,246.0 1259.1,253.5 1265.5,253.5" fill="#85ff00" stroke="#85ff00"/>
<polygon points="1258.9,246.0 1272.0,245.9 1265.5,253.5" fill="#85ff00" stroke="#85ff00"/>
<polygon points="1272.0,245.9 1265.5,253.5 1272.0,253.5" fill="#85ff00" stroke="#85ff00"/>
<polygon points="1272.0,245.9 1272.0,253.5 1278.4,253.5" fill="#85ff00" stroke="#85ff00"/>
<polygon points="1272.0,245.9 1284.9,245.7 1278.4,253.5" fill="#85ff00" stroke="#85ff00"/>
<polygon points="1284.9,245.7 1278.4,253.5 1284.8,253.5" fill="#85ff00" stroke="#85ff00"/>
<polygon points="1284.9,245.7 1284.8,253.5 1291.2,253.5" fill="#85ff00" stroke="#85ff00"/>
<polygon points="1284.9,245.7 1297.4,246.0 1291.2,253.5" fill="#85ff00" stroke="#85ff00"/>
<polygon points="1297.4,246.0 1291.2,253.5 1297.6,253.5" fill="#85ff00" stroke="#85ff00"/>
<polygon points="1297.4,246.0 1304.0,245.9 1297.6,253.5" fill="#85ff00" stroke="#85ff00"/>
<polygon points="1304.0,245.9 1297.6,253.5 1304.0,253.5" fill="#85ff00" stroke="#85ff00"/>
<rect x="849.0" y="253.5" width="455.0" height="50.4" fill="#ff4700"/>
<polygon points="849.0,303.9 855.4,303.9 849.0,311.3" fill="#00ffe3" stroke="#00ffe3"/>
<polygon points="855.4,303.9 849.0,311.3 862.0,311.3" fill="#00ffe3" stroke="#00ffe3"/>
<polygon points="855.4,303.9 861.8,303.9 862.0,311.3" fill="#00ffe3" stroke="#00ffe3"/>
<polygon points="861.8,303.9 868.2,303.9 862.0,311.3" fill="#00ffe3" stroke="#00ffe3"/>
<polygon points="868.2,303.9 862.0,311.3 876.8,311.4" fill="#00ffe3" stroke="#00ffe3"/>
<polygon points="868.2,303.9 874.6,303.9 876.8,311.4" fill="#00ffe3" stroke="#00ffe3"/>
<polygon points="874.6,303.9 881.0,303.9 876.8,311.4" fill="#00ffe3" stroke="#00ffe3"/>
<polygon points="881.0,303.9 876.8,311.4 889.0,311.6" fill="#00ffe3" stroke="#00ffe3"/>
<polygon points="881.0,303.9 887.5,303.9 889.0,311.6" fill="#00ffe3" stroke="#00ffe3"/>
<polygon points="887.5,303.9 893.9,303.9 889.0,311.6" fill="#00ffe3" stroke="#00ffe3"/>
<polygon points="893.9,303.9 889.0,311.6 901.3,310.7" fill="#00ffe3" stroke="#00ffe3"/>
<polygon points="893.9,303.9 900.3,303.9 901.3,310.7" fill="#00ffe3" stroke="#00ffe3"/>
<polygon points="900.3,303.9 906.7,303.9 901.3,310.7" fill="#00ffe3" stroke="#00ffe3"/>
<polygon points="906.7,303.9 901.3,310.7 915.4,311.4" fill="#00ffe3" stroke="#00ffe3"/>
<polygon points="906.7,303.9 913.1,303.9 915.4,311.4" fill="#00ffe3" stroke="#00ffe3"/>
<polygon points="913.1,303.9 919.5,303.9 915.4,311.4" fill="#00ffe3" stroke="#00ffe3"/>
<polygon points="919.5,303.9 915.4,311.4 930.3,310.7" fill="#00ffe3" stroke="#00ffe3"/>
<polygon points="919.5,303.9 925.9,303.9 930.3,310.7" fill="#00ffe3" stroke="#00ffe3"/>
<polygon points="925.9,303.9 932.3,303.9 930.3,310.7" fill="#00ffe3" stroke="#00ffe3"/>
<polygon points="932.3,303.9 938.7,303.9 930.3,310.7" fill="#00ffe3" stroke="#00ffe3"/>
<polygon points="938.7,303.9 930.3,310.7 941.2,312.0" fill="#00ffe3" stroke="#00ffe3"/>
<polygon points="938.7,303.9 945.1,303.9 941.2,312.0" fill="#00ffe3" stroke="#00ffe3"/>
<polygon points="945.1,303.9 941.2,312.0 956.1,310.7" fill="#00ffe3" stroke="#00ffe3"/>
<polygon points="945.1,303.9 951.5,303.9 956.1,310.7" fill="#00ffe3" stroke="#00ffe3"/>
<polygon points="951.5,303.9 957.9,303.9 956.1,310.7" fill="#00ffe3" stroke="#00ffe3"/>
<polygon points="957.9,303.9 964.4,303.9 956.1,310.7" fill="#00ffe3" stroke="#00ffe3"/>
<polygon points="964.4,303.9 956.1,310.7 969.6,311.2" fill="#00ffe3" stroke="#00ffe3"/>
<polygon points="964.4,303.9 970.8,303.9 969.6,311.2" fill="#00ffe3" stroke="#00ffe3"/>
<polygon points="970.8,303.9 977.2,303.9 969.6,311.2" fill="#00ffe3" stroke="#00ffe3"/>
<polygon points="977.2,303.9 969.6,311.2 982.9,311.4" fill="#00ffe3" stroke="#00ffe3"/>
<polygon points="977.2,303.9 983.6,303.9 982.9,311.4" fill="#00ffe3" stroke="#00ffe3"/>
<polygon points="983.6,303.9 990.0,303.9 982.9,311.4" fill="#00ffe3" stroke="#00ffe3"/>
<polygon points="990.0,303.9 982.9,311.4 997.3,311.8" fill="#00ffe3" stroke="#00ffe3"/>
<polygon points="990.0,303.9 996.4,303.9 997.3,311.8" fill="#00ffe3" stroke="#00ffe3"/>
<polygon points="996.4,303.9 1002.8,303.9 997.3,311.8" fill="#00ffe3" stroke="#00ffe3"/>
<polygon points="1002.8,303.9 997.3,311.8 1008.9,310.9" fill="#00ffe3" stroke="#00ffe3"/>
<polygon points="1002.8,303.9 1009.2,303.9 1008.9,310.9" fill="#00ffe3" stroke="#00ffe3"/>
<polygon points="1009.2,303.9 1015.6,303.9 1008.9,310.9" fill="#00ffe3" stroke="#00ffe3"/>
<polygon points="1015.6,303.9 1008.9,310.9 1022.0,311.8" fill="#00ffe3" stroke="#00ffe3"/>
<polygon points="1015.6,303.9 1022.0,303.9 1022.0,311.8" fill="#00ffe3" stroke="#00ffe3"/>
<polygon points="1022.0,303.9 1028.4,303.9 1022.0,311.8" fill="#00ffe3" stroke="#00ffe3"/>
<polygon points="1028.4,303.9 1022.0,311.8 1036.5,311.2" fill="#00ffe3" stroke="#00ffe3"/>
<polygon points="1028.4,303.9 1034.8,303.9 1036.5,311.2" fill="#00ffe3" stroke="#00ffe3"/>
<polygon points="1034.8,303.9 1041.3,303.9 1036.5,311.2" fill="#00ffe3" stroke="#00ffe3"/>
<polygon points="1041.3,303.9 1036.5,311.2 1049.2,311.4" fill="#00ffe3" stroke="#00ffe3"/>
<polygon points="1041.3,303.9 1047.7,303.9 1049.2,311.4" fill="#00ffe3" stroke="#00ffe3"/>
<polygon points="1047.7,303.9 1054.1,303.9 1049.2,311.4" fill="#00ffe3" stroke="#00ffe3"/>
<polygon points="1054.1,303.9 1049.2,311.4 1064.1,311.4" fill="#00ffe3" stroke="#00ffe3"/>
<polygon points="1054.1,303.9 1060.5,303.9 1064.1,311.4" fill="#00ffe3" stroke="#00ffe3"/>
<polygon points="1060.5,303.9 1066.9,303.9 1064.1,311.4" fill="#00ffe3" stroke="#00ffe3"/>
<polygon points="1066.9,303.9 1073.3,303.9 1064.1,311.4" fill="#00ffe3" stroke="#00ffe3"/>
<polygon points="1073.3,303.9 1064.1,311.4 1077.6,311.8" fill="#00ffe3" stroke="#00ffe3"/>
<polygon points="1073.3,303.9 1079.7,303.9 1077.6,311.8" fill="#00ffe3" stroke="#00ffe3"/>
<polygon points="1079.7,303.9 1086.1,303.9 1077.6,311.8" fill="#00ffe3" stroke="#00ffe3"/>
<polygon points="1086.1,303.9 1077.6,311.8 1090.8,311.2" fill="#00ffe3" stroke="#00ffe3"/>
<polygon points="1086.1,303.9 1092.5,303.9 1090.8,311.2" fill="#00ffe3" stroke="#00ffe3"/>
<polygon points="1092.5,303.9 1098.9,303.9 1090.8,311.2" fill="#00ffe3" stroke="#00ffe3"/>
<polygon points="1098.9,303.9 1090.8,311.2 1102.4,311.6" fill="#00ffe3" stroke="#00ffe3"/>
<polygon points="1098.9,303.9 1105.3,303.9 1102.4,311.6" fill="#00ffe3" stroke="#00ffe3"/>
<polygon points="1105.3,303.9 1111.7,303.9 1102.4,311.6" fill="#00ffe3" stroke="#00ffe3"/>
<polygon points="1111.7,303.9 1102.4,311.6 1116.2,310.6" fill="#00ffe3" stroke="#00ffe3"/>
<polygon points="1111.7,303.9 1118.2,303.9 1116.2,310.6" fill="#00ffe3" stroke="#00ffe3"/>
<polygon points="1118.2,303.9 1124.6,303.9 1116.2,310.6" fill="#00ffe3" stroke="#00ffe3"/>
<polygon points="1124.6,303.9 1116.2,310.6 1128.6,311.4" fill="#00ffe3" stroke="#00ffe3"/>
<polygon points="1124.6,303.9 1131.0,303.9 1128.6,311.4" fill="#00ffe3" stroke="#00ffe3"/>
<polygon points="1131.0,303.9 1137.4,303.9 1128.6,311.4" fill="#00ffe3" stroke="#00ffe3"/>
<polygon points="1137.4,303.9 1128.6,311.4 1142.7,311.2" fill="#00ffe3" stroke="#00ffe3"/>
<polygon points="1137.4,303.9 1143.8,303.9 1142.7,311.2" fill="#00ffe3" stroke="#00ffe3"/>
<polygon points="1143.8,303.9 1150.2,303.9 1142.7,311.2" fill="#00ffe3" stroke="#00ffe3"/>
<polygon points="1150.2,303.9 1142.7,311.2 1158.2,311.6" fill="#00ffe3" stroke="#00ffe3"/>
<polygon points="1150.2,303.9 1156.6,303.9 1158.2,311.6" fill="#00ffe3" stroke="#00ffe3"/>
<polygon points="1156.6,303.9 1163.0,303.9 1158.2,311.6" fill="#00ffe3" stroke="#00ffe3"/>
<polygon points="1163.0,303.9 1158.2,311.6 1171.5,311.4" fill="#00ffe3" stroke="#00ffe3"/>
<polygon points="1163.0,303.9 1169.4,303.9 1171.5,311.4" fill="#00ffe3" stroke="#00ffe3"/>
<polygon points="1169.4,303.9 1175.8,303.9 1171.5,311.4" fill="#00ffe3" stroke="#00ffe3"/>
<polygon points="1175.8,303.9 1171.5,311.4 1184.9,311.5" fill="#00ffe3" stroke="#00ffe3"/>
<polygon points="1175.8,303.9 1182.2,303.9 1184.9,311.5" fill="#00ffe3" stroke="#00ffe3"/>
<polygon points="1182.2,303.9 1188.6,303.9 1184.9,311.5" fill="#00ffe3" stroke="#00ffe3"/>
<polygon points="1188.6,303.9 1184.9,311.5 1196.1,310.8" fill="#00ffe3" stroke="#00ffe3"/>
<polygon points="1188.6,303.9 1195.1,303.9 1196.1,310.8" fill="#00ffe3" stroke="#00ffe3"/>
<polygon points="1195.1,303.9 1201.5,303.9 1196.1,310.8" fill="#00ffe3" stroke="#00ffe3"/>
<polygon points="1201.5,303.9 1196.1,310.8 1209.4,311.4" fill="#00ffe3" stroke="#00ffe3"/>
<polygon points="1201.5,303.9 1207.9,303.9 1209.4,311.4" fill="#00ffe3" stroke="#00ffe3"/>
<polygon points="1207.9,303.9 1214.3,303.9 1209.4,311.4" fill="#00ffe3" stroke="#00ffe3"/>
<polygon points="1214.3,303.9 1209.4,311.4 1224.1,311.3" fill="#00ffe3" stroke="#00ffe3"/>
<polygon points="1214.3,303.9 1220.7,303.9 1224.1,311.3" fill="#00ffe3" stroke="#00ffe3"/>
<polygon points="1220.7,303.9 1227.1,303.9 1224.1,311.3" fill="#00ffe3" stroke="#00ffe3"/>
<polygon points="1227.1,303.9 1233.5,303.9 1224.1,311.3" fill="#00ffe3" stroke="#00ffe3"/>
<polygon points="1233.5,303.9 1224.1,311.3 1238.1,311.6" fill="#00ffe3" stroke="#00ffe3"/>
<polygon points="1233.5,303.9 1239.9,303.9 1238.1,311.6" fill="#00ffe3" stroke="#00ffe3"/>
<polygon points="1239.9,303.9 1246.3,303.9 1238.1,311.6" fill="#00ffe3" stroke="#00ffe3"/>
<polygon points="1246.3,303.9 1238.1,311.6 1250.9,311.2" fill="#00ffe3" stroke="#00ffe3"/>
<polygon points="1246.3,303.9 1252.7,303.9 1250.9,311.2" fill="#00ffe3" stroke="#00ffe3"/>
<polygon points="1252.7,303.9 1259.1,303.9 1250.9,311.2" fill="#00ffe3" stroke="#00ffe3"/>
<polygon points="1259.1,303.9 1250.9,311.2 1262.6,311.7" fill="#00ffe3" stroke="#00ffe3"/>
<polygon points="1259.1,303.9 1265.5,303.9 1262.6,311.7" fill="#00ffe3" stroke="#00ffe3"/>
<polygon points="1265.5,303.9 1272.0,303.9 1262.6,311.7" fill="#00ffe3" stroke="#00ffe3"/>
<polygon points="1272.0,303.9 1262.6,311.7 1278.5,311.2" fill="#00ffe3" stroke="#00ffe3"/>
<polygon points="1272.0,303.9 1278.4,303.9 1278.5,311.2" fill="#00ffe3" stroke="#00ffe3"/>
<polygon points="1278.4,303.9 1284.8,303.9 1278.5,311.2" fill="#00ffe3" stroke="#00ffe3"/>
<polygon points="1284.8,303.9 1278.5,311.2 1291.4,311.6" fill="#00ffe3" stroke="#00ffe3"/>
<polygon points="1284.8,303.9 1291.2,303.9 1291.4,311.6" fill="#00ffe3" stroke="#00ffe3"/>
<polygon points="1291.2,303.9 1297.6,303.9 1291.4,311.6" fill="#00ffe3" stroke="#00ffe3"/>
<polygon points="1297.6,303.9 1291.4,311.6 1304.0,311.3" fill="#00ffe3" stroke="#00ffe3"/>
<polygon points="1297.6,303.9 1304.0,303.9 1304.0,311.3" fill="#00ffe3" stroke="#00ffe3"/>
<polygon points="849.0,311.3 862.0,311.3 849.0,326.6" fill="url(#g171)" stroke="url(#g171)"/>
<polygon points="862.0,311.3 849.0,326.6 869.2,328.6" fill="url(#g172)" stroke="url(#g172)"/>
<polygon points="862.0,311.3 876.8,311.4 869.2,328.6" fill="url(#g173)" stroke="url(#g173)"/>
<polygon points="876.8,311.4 869.2,328.6 890.1,323.4" fill="url(#g174)" stroke="url(#g174)"/>
<polygon points="876.8,311.4 889.0,311.6 890.1,323.4" fill="url(#g175)" stroke="url(#g175)"/>
<polygon points="889.0,311.6 901.3,310.7 890.1,323.4" fill="url(#g176)" stroke="url(#g176)"/>
<polygon points="901.3,310.7 890.1,323.4 911.8,328.3" fill="url(#g177)" stroke="url(#g177)"/>
<polygon points="901.3,310.7 915.4,311.4 911.8,328.3" fill="url(#g178)" stroke="url(#g178)"/>
<polygon points="915.4,311.4 911.8,328.3 931.6,323.6" fill="url(#g179)" stroke="url(#g179)"/>
<polygon points="915.4,311.4 930.3,310.7 931.6,323.6" fill="url(#g180)" stroke="url(#g180)"/>
<polygon points="930.3,310.7 941.2,312.0 931.6,323.6" fill="url(#g181)" stroke="url(#g181)"/>
<polygon points="941.2,312.0 931.6,323.6 952.8,328.1" fill="url(#g182)" stroke="url(#g182)"/>
<polygon points="941.2,312.0 956.1,310.7 952.8,328.1" fill="url(#g183)" stroke="url(#g183)"/>
<polygon points="956.1,310.7 952.8,328.1 972.5,322.9" fill="url(#g184)" stroke="url(#g184)"/>
<polygon points="956.1,310.7 969.6,311.2 972.5,322.9" fill="url(#g185)" stroke="url(#g185)"/>
<polygon points="969.6,311.2 982.9,311.4 972.5,322.9" fill="url(#g186)" stroke="url(#g186)"/>
<polygon points="982.9,311.4 972.5,322.9 994.4,328.6" fill="url(#g187)" stroke="url(#g187)"/>
<polygon points="982.9,311.4 997.3,311.8 994.4,328.6" fill="url(#g188)" stroke="url(#g188)"/>
<polygon points="997.3,311.8 994.4,328.6 1013.9,323.5" fill="url(#g189)" stroke="url(#g189)"/>
<polygon points="997.3,311.8 1008.9,310.9 1013.9,323.5" fill="url(#g190)" stroke="url(#g190)"/>
<polygon points="1008.9,310.9 1022.0,311.8 1013.9,323.5" fill="url(#g191)" stroke="url(#g191)"/>
<polygon points="1022.0,311.8 1013.9,323.5 1035.9,328.5" fill="url(#g192)" stroke="url(#g192)"/>
<polygon points="1022.0,311.8 1036.5,311.2 1035.9,328.5" fill="url(#g193)" stroke="url(#g193)"/>
<polygon points="1036.5,311.2 1049.2,311.4 1035.9,328.5" fill="url(#g194)" stroke="url(#g194)"/>
<polygon points="1049.2,311.4 1035.9,328.5 1055.6,323.2" fill="url(#g195)" stroke="url(#g195)"/>
<polygon points="1049.2,311.4 1064.1,311.4 1055.6,323.2" fill="url(#g196)" stroke="url(#g196)"/>
<polygon points="1064.1,311.4 1055.6,323.2 1075.9,328.0" fill="url(#g197)" stroke="url(#g197)"/>
<polygon points="1064.1,311.4 1077.6,311.8 1075.9,328.0" fill="url(#g198)" stroke="url(#g198)"/>
<polygon points="1077.6,311.8 1090.8,311.2 1075.9,328.0" fill="url(#g199)" stroke="url(#g199)"/>
<polygon points="1090.8,311.2 1075.9,328.0 1097.9,323.3" fill="url(#g200)" stroke="url(#g200)"/>
<polygon points="1090.8,311.2 1102.4,311.6 1097.9,323.3" fill="url(#g201)" stroke="url(#g201)"/>
<polygon points="1102.4,311.6 1116.2,310.6 1097.9,323.3" fill="url(#g202)" stroke="url(#g202)"/>
<polygon points="1116.2,310.6 1097.9,323.3 1117.9,328.7" fill="url(#g203)" stroke="url(#g203)"/>
<polygon points="1116.2,310.6 1128.6,311.4 1117.9,328.7" fill="url(#g204)" stroke="url(#g204)"/>
<polygon points="1128.6,311.4 1117.9,328.7 1138.4,323.5" fill="url(#g205)" stroke="url(#g205)"/>
<polygon points="1128.6,311.4 1142.7,311.2 1138.4,323.5" fill="url(#g206)" stroke="url(#g206)"/>
<polygon points="1142.7,311.2 1158.2,311.6 1138.4,323.5" fill="url(#g207)" stroke="url(#g207)"/>
<polygon points="1158.2,311.6 1138.4,323.5 1159.7,328.2" fill="url(#g208)" stroke="url(#g208)"/>
<polygon points="1158.2,311.6 1171.5,311.4 1159.7,328.2" fill="url(#g209)" stroke="url(#g209)"/>
<polygon points="1171.5,311.4 1159.7,328.2 1179.5,323.0" fill="url(#g210)" stroke="url(#g210)"/>
<polygon points="1171.5,311.4 1184.9,311.5 1179.5,323.0" fill="url(#g211)" stroke="url(#g211)"/>
<polygon points="1184.9,311.5 1196.1,310.8 1179.5,323.0" fill="url(#g212)" stroke="url(#g212)"/>
<polygon points="1196.1,310.8 1179.5,323.0 1200.2,328.5" fill="url(#g213)" stroke="url(#g213)"/>
<polygon points="1196.1,310.8 1209.4,311.4 1200.2,328.5" fill="url(#g214)" stroke="url(#g214)"/>
<polygon points="1209.4,311.4 1200.2,328.5 1220.9,323.1" fill="url(#g215)" stroke="url(#g215)"/>
<polygon points="1209.4,311.4 1224.1,311.3 1220.9,323.1" fill="url(#g216)" stroke="url(#g216)"/>
<polygon points="1224.1,311.3 1238.1,311.6 1220.9,323.1" fill="url(#g217)" stroke="url(#g217)"/>
<polygon points="1238.1,311.6 1220.9,323.1 1241.4,328.7" fill="url(#g218)" stroke="url(#g218)"/>
<polygon points="1238.1,311.6 1250.9,311.2 1241.4,328.7" fill="url(#g219)" stroke="url(#g219)"/>
<polygon points="1250.9,311.2 1241.4,328.7 1262.4,323.2" fill="url(#g220)" stroke="url(#g220)"/>
<polygon points="1250.9,311.2 1262.6,311.7 1262.4,323.2" fill="url(#g221)" stroke="url(#g221)"/>
<polygon points="1262.6,311.7 1278.5,311.2 1262.4,323.2" fill="url(#g222)" stroke="url(#g222)"/>
<polygon points="1278.5,311.2 1262.4,323.2 1283.5,328.7" fill="url(#g223)" stroke="url(#g223)"/>
<polygon points="1278.5,311.2 1291.4,311.6 1283.5,328.7" fill="url(#g224)" stroke="url(#g224)"/>
<polygon points="1291.4,311.6 1283.5,328.7 1304.0,326.6" fill="url(#g225)" stroke="url(#g225)"/>
<polygon points="1291.4,311.6 1304.0,311.3 1304.0,326.6" fill="url(#g226)" stroke="url(#g226)"/>
<polygon points="849.0,326.6 869.2,328.6 849.0,354.6" fill="url(#g227)" stroke="url(#g227)"/>
<polygon points="869.2,328.6 849.0,354.6 890.4,354.6" fill="url(#g228)" stroke="url(#g228)"/>
<polygon points="869.2,328.6 890.1,323.4 890.4,354.6" fill="url(#g229)" stroke="url(#g229)"/>
<polygon points="890.1,323.4 911.8,328.3 890.4,354.6" fill="url(#g230)" stroke="url(#g230)"/>
<polygon points="911.8,328.3 890.4,354.6 931.7,354.6" fill="url(#g231)" stroke="url(#g231)"/>
<polygon points="911.8,328.3 931.6,323.6 931.7,354.6" fill="url(#g232)" stroke="url(#g232)"/>
<polygon points="931.6,323.6 952.8,328.1 931.7,354.6" fill="url(#g233)" stroke="url(#g233)"/>
<polygon points="952.8,328.1 931.7,354.6 973.1,354.6" fill="url(#g234)" stroke="url(#g234)"/>
<polygon points="952.8,328.1 972.5,322.9 973.1,354.6" fill="url(#g235)" stroke="url(#g235)"/>
<polygon points="972.5,322.9 994.4,328.6 973.1,354.6" fill="url(#g236)" stroke="url(#g236)"/>
<polygon points="994.4,328.6 973.1,354.6 1014.5,354.6" fill="url(#g237)" stroke="url(#g237)"/>
<polygon points="994.4,328.6 1013.9,323.5 1014.5,354.6" fill="url(#g238)" stroke="url(#g238)"/>
<polygon points="1013.9,323.5 1035.9,328.5 1014.5,354.6" fill="url(#g239)" stroke="url(#g239)"/>
<polygon points="1035.9,328.5 1014.5,354.6 1055.8,354.6" fill="url(#g240)" stroke="url(#g240)"/>
<polygon points="1035.9,328.5 1055.6,323.2 1055.8,354.6" fill="url(#g241)" stroke="url(#g241)"/>
<polygon points="1055.6,323.2 1075.9,328.0 1055.8,354.6" fill="url(#g242)" stroke="url(#g242)"/>
<polygon points="1075.9,328.0 1055.8,354.6 1097.2,354.6" fill="url(#g243)" stroke="url(#g243)"/>
<polygon points="1075.9,328.0 1097.9,323.3 1097.2,354.6" fill="url(#g244)" stroke="url(#g244)"/>
<polygon points="1097.9,323.3 1117.9,328.7 1097.2,354.6" fill="url(#g245)" stroke="url(#g245)"/>
<polygon points="1117.9,328.7 1097.2,354.6 1138.5,354.6" fill="url(#g246)" stroke="url(#g246)"/>
<polygon points="1117.9,328.7 1138.4,323.5 1138.5,354.6" fill="url(#g247)" stroke="url(#g247)"/>
<polygon points="1138.4,323.5 1159.7,328.2 1138.5,354.6" fill="url(#g248)" stroke="url(#g248)"/>
<polygon points="1159.7,328.2 1138.5,354.6 1179.9,354.6" fill="url(#g249)" stroke="url(#g249)"/>
<polygon points="1159.7,328.2 1179.5,323.0 1179.9,354.6" fill="url(#g250)" stroke="url(#g250)"/>
<polygon points="1179.5,323.0 1200.2,328.5 1179.9,354.6" fill="url(#g251)" stroke="url(#g251)"/>
<polygon points="1200.2,328.5 1179.9,354.6 1221.3,354.6" fill="url(#g252)" stroke="url(#g252)"/>
<polygon points="1200.2,328.5 1220.9,323.1 1221.3,354.6" fill="url(#g253)" stroke="url(#g253)"/>
<polygon points="1220.9,323.1 1241.4,328.7 1221.3,354.6" fill="url(#g254)" stroke="url(#g254)"/>
<polygon points="1241.4,328.7 1221.3,354.6 1262.6,354.6" fill="url(#g255)" stroke="url(#g255)"/>
<polygon points="1241.4,328.7 1262.4,323.2 1262.6,354.6" fill="url(#g256)" stroke="url(#g256)"/>
<polygon points="1262.4,323.2 1283.5,328.7 1262.6,354.6" fill="url(#g257)" stroke="url(#g257)"/>
<polygon points="1283.5,328.7 1262.6,354.6 1304.0,354.6" fill="url(#g258)" stroke="url(#g258)"/>
<polygon points="1283.5,328.7 1304.0,326.6 1304.0,354.6" fill="url(#g259)" stroke="url(#g259)"/>
<polygon points="849.0,354.6 890.4,354.6 849.0,390.5" fill="url(#g260)" stroke="url(#g260)"/>
<polygon points="890.4,354.6 849.0,390.5 899.6,431.3" fill="url(#g261)" stroke="url(#g261)"/>
<polygon points="849.0,390.5 849.0,431.3 899.6,431.3" fill="#808080" stroke="#808080"/>
<polygon points="890.4,354.6 899.6,431.3 931.7,354.6" fill="url(#g262)" stroke="url(#g262)"/>
<polygon points="931.7,354.6 899.6,431.3 950.1,431.3" fill="url(#g263)" stroke="url(#g263)"/>
<polygon points="931.7,354.6 950.1,431.3 973.1,354.6" fill="url(#g264)" stroke="url(#g264)"/>
<polygon points="973.1,354.6 950.1,431.3 1000.7,431.3" fill="url(#g265)" stroke="url(#g265)"/>
<polygon points="973.1,354.6 1000.7,431.3 1014.5,354.6" fill="url(#g266)" stroke="url(#g266)"/>
<polygon points="1014.5,354.6 1000.7,431.3 1051.2,431.3" fill="url(#g267)" stroke="url(#g267)"/>
<polygon points="1014.5,354.6 1051.2,431.3 1055.8,354.6" fill="url(#g268)" stroke="url(#g268)"/>
<polygon points="1055.8,354.6 1051.2,431.3 1076.4,389.6" fill="url(#g269)" stroke="url(#g269)"/>
<polygon points="1055.8,354.6 1076.4,389.6 1097.2,354.6" fill="url(#g270)" stroke="url(#g270)"/>
<polygon points="1076.4,389.6 1051.2,431.3 1101.8,431.3" fill="#808080" stroke="#808080"/>
<polygon points="1097.2,354.6 1076.4,389.6 1101.8,431.3" fill="url(#g271)" stroke="url(#g271)"/>
<polygon points="1097.2,354.6 1101.8,431.3 1138.5,354.6" fill="url(#g272)" stroke="url(#g272)"/>
<polygon points="1138.5,354.6 1101.8,431.3 1152.3,431.3" fill="url(#g273)" stroke="url(#g273)"/>
<polygon points="1138.5,354.6 1152.3,431.3 1179.9,354.6" fill="url(#g274)" stroke="url(#g274)"/>
<polygon points="1179.9,354.6 1152.3,431.3 1202.9,431.3" fill="url(#g275)" stroke="url(#g275)"/>
<polygon points="1179.9,354.6 1202.9,431.3 1221.3,354.6" fill="url(#g276)" stroke="url(#g276)"/>
<polygon points="1221.3,354.6 1202.9,431.3 1253.4,431.3" fill="url(#g277)" stroke="url(#g277)"/>
<polygon points="1221.3,354.6 1253.4,431.3 1262.6,354.6" fill="url(#g278)" stroke="url(#g278)"/>
<polygon points="1262.6,354.6 1253.4,431.3 1304.0,390.5" fill="url(#g279)" stroke="url(#g279)"/>
<polygon points="1262.6,354.6 1304.0,390.5 1304.0,354.6" fill="url(#g280)" stroke="url(#g280)"/>
<polygon points="1304.0,390.5 1253.4,431.3 1304.0,431.3" fill="#808080" stroke="#808080"/>
</g>
<g fill="none" stroke="#e2e2e2" stroke-opacity="0.72" stroke-width="1.25" stroke-linecap="round">
<path d="M849.0 127.0L899.6 127.0M849.0 177.6L899.6 177.6M899.6 127.0L950.1 127.0M899.6 177.6L950.1 177.6M950.1 127.0L1000.7 127.0M950.1 177.6L1000.7 177.6M1000.7 127.0L1051.2 127.0M1000.7 177.6L1051.2 177.6M1051.2 127.0L1101.8 127.0M1051.2 177.6L1101.8 177.6M1101.8 127.0L1152.3 127.0M1101.8 177.6L1152.3 177.6M1152.3 127.0L1202.9 127.0M1152.3 177.6L1202.9 177.6M1202.9 127.0L1253.4 127.0M1202.9 177.6L1253.4 177.6M1253.4 127.0L1304.0 127.0M1253.4 177.6L1304.0 177.6"/>
<path d="M849.0 127.0L899.6 177.6M950.1 127.0L1000.7 177.6M1000.7 127.0L1051.2 177.6M1101.8 127.0L1152.3 177.6M1152.3 127.0L1202.9 177.6"/>
<path d="M849.0 127.0L849.0 177.6M899.6 127.0L899.6 177.6M950.1 127.0L950.1 177.6M1000.7 127.0L1000.7 177.6M1051.2 127.0L1051.2 177.6M1101.8 127.0L1101.8 177.6M1152.3 127.0L1152.3 177.6M1202.9 127.0L1202.9 177.6M1253.4 127.0L1253.4 177.6M1304.0 127.0L1304.0 177.6"/>
<path d="M899.6 177.6L950.1 127.0M1051.2 177.6L1101.8 127.0M1202.9 177.6L1253.4 127.0M1253.4 177.6L1304.0 127.0"/>
<path d="M849.0 177.6L899.6 177.6M849.0 214.5L881.8 213.3M849.0 233.9L861.2 234.1M849.0 245.9L854.9 246.1M849.0 253.5L855.4 253.5M854.9 246.1L867.7 246.2M855.4 253.5L861.8 253.5M861.2 234.1L874.6 233.0M861.8 253.5L868.2 253.5M867.7 246.2L881.1 246.0M868.2 253.5L874.6 253.5M874.6 253.5L881.0 253.5M874.6 233.0L887.0 234.3M881.0 253.5L887.5 253.5M881.1 246.0L893.4 245.9M881.8 213.3L919.4 208.8M887.0 234.3L898.5 233.4M887.5 253.5L893.9 253.5M893.4 245.9L905.3 246.0M893.9 253.5L900.3 253.5M898.5 233.4L911.1 234.3M899.6 177.6L950.1 177.6M900.3 253.5L906.7 253.5M905.3 246.0L917.7 245.7M906.7 253.5L913.1 253.5M911.1 234.3L923.8 233.0M913.1 253.5L919.5 253.5M917.7 245.7L930.4 245.9M919.5 253.5L925.9 253.5M923.8 233.0L937.3 234.7M925.9 253.5L932.3 253.5M930.4 245.9L943.0 245.9M932.3 253.5L938.7 253.5M937.3 234.7L949.2 233.1M938.7 253.5L945.1 253.5M943.0 245.9L956.0 245.9M945.1 253.5L951.5 253.5M949.2 233.1L963.1 234.8M950.1 177.6L1000.7 177.6M951.5 253.5L957.9 253.5M956.0 245.9L968.5 246.0M957.9 253.5L964.4 253.5M963.1 234.8L975.6 233.3M964.4 253.5L970.8 253.5M968.5 246.0L981.3 246.0M970.8 253.5L977.2 253.5M975.6 233.3L989.2 233.9M977.2 253.5L983.6 253.5M981.3 246.0L994.7 246.2M983.6 253.5L990.0 253.5M989.2 233.9L1001.5 233.2M990.0 253.5L996.4 253.5M994.7 246.2L1007.1 246.0M996.4 253.5L1002.8 253.5M1000.7 177.6L1051.2 177.6M1001.5 233.2L1012.5 234.0M1002.8 253.5L1009.2 253.5M1007.1 246.0L1019.3 246.0M1009.2 253.5L1015.6 253.5M1012.5 234.0L1025.5 233.7M1015.6 253.5L1022.0 253.5M1019.3 246.0L1032.6 245.9M1022.0 253.5L1028.4 253.5M1025.5 233.7L1037.8 234.5M1028.4 253.5L1034.8 253.5M1032.6 245.9L1045.0 245.7M1034.8 253.5L1041.3 253.5M1037.8 234.5L1051.6 233.3M1041.3 253.5L1047.7 253.5M1045.0 245.7L1057.0 245.8M1047.7 253.5L1054.1 253.5M1051.2 177.6L1101.8 177.6M1051.6 233.3L1064.0 234.0M1054.1 253.5L1060.5 253.5M1057.0 245.8L1070.0 245.8M1060.5 253.5L1066.9 253.5M1064.0 234.0L1075.4 233.1M1066.9 253.5L1073.3 253.5M1070.0 245.8L1082.4 245.8M1073.3 253.5L1079.7 253.5M1075.4 233.1L1089.6 234.3M1079.7 253.5L1086.1 253.5M1082.4 245.8L1094.8 245.9M1086.1 253.5L1092.5 253.5M1089.6 234.3L1101.3 233.5M1092.5 253.5L1098.9 253.5M1094.8 245.9L1108.4 246.0M1098.9 253.5L1105.3 253.5M1101.3 233.5L1114.3 234.2M1101.8 177.6L1152.3 177.6M1105.3 253.5L1111.7 253.5M1108.4 246.0L1121.2 246.0M1111.7 253.5L1118.2 253.5M1114.3 234.2L1127.8 233.6M1118.2 253.5L1124.6 253.5M1121.2 246.0L1133.6 245.8M1124.6 253.5L1131.0 253.5M1127.8 233.6L1139.1 234.5M1131.0 253.5L1137.4 253.5M1133.6 245.8L1146.6 245.8M1137.4 253.5L1143.8 253.5M1139.1 234.5L1152.4 233.8M1143.8 253.5L1150.2 253.5M1146.6 245.8L1159.4 246.1M1150.2 253.5L1156.6 253.5M1152.3 177.6L1202.9 177.6M1152.4 233.8L1165.5 234.2M1156.6 253.5L1163.0 253.5M1159.4 246.1L1171.6 246.0M1163.0 253.5L1169.4 253.5M1165.5 234.2L1178.8 233.0M1169.4 253.5L1175.8 253.5M1171.6 246.0L1183.4 245.9M1175.8 253.5L1182.2 253.5M1178.8 233.0L1190.1 234.7M1182.2 253.5L1188.6 253.5M1183.4 245.9L1195.7 245.8M1188.6 253.5L1195.1 253.5M1190.1 234.7L1202.1 233.4M1195.1 253.5L1201.5 253.5M1195.7 245.8L1208.5 245.6M1201.5 253.5L1207.9 253.5M1202.0 216.0L1233.3 212.3M1202.1 233.4L1214.4 234.6M1202.9 177.6L1253.4 177.6M1207.9 253.5L1214.3 253.5M1208.5 245.6L1221.4 245.6M1214.3 253.5L1220.7 253.5M1214.4 234.6L1228.8 233.5M1220.7 253.5L1227.1 253.5M1221.4 245.6L1233.8 245.6M1227.1 253.5L1233.5 253.5M1228.8 233.5L1241.7 234.2M1233.3 212.3L1271.6 213.3M1233.5 253.5L1239.9 253.5M1233.8 245.6L1246.2 245.7M1239.9 253.5L1246.3 253.5M1241.7 234.2L1253.9 233.5M1246.2 245.7L1258.9 246.0M1246.3 253.5L1252.7 253.5M1252.7 253.5L1259.1 253.5M1253.4 177.6L1304.0 177.6M1253.9 233.5L1266.3 234.4M1258.9 246.0L1272.0 245.9M1259.1 253.5L1265.5 253.5M1265.5 253.5L1272.0 253.5M1266.3 234.4L1279.5 233.8M1271.6 213.3L1304.0 214.0M1272.0 253.5L1278.4 253.5M1272.0 245.9L1284.9 245.7M1278.4 253.5L1284.8 253.5M1279.5 233.8L1291.3 234.6M1284.8 253.5L1291.2 253.5M1284.9 245.7L1297.4 246.0M1291.2 253.5L1297.6 253.5M1291.3 234.6L1304.0 233.9M1297.4 246.0L1304.0 245.9M1297.6 253.5L1304.0 253.5"/>
<path d="M849.0 196.8L881.8 213.3M905.3 246.0L913.1 253.5M917.7 245.7L925.9 253.5M919.4 208.8L946.0 216.5M930.4 245.9L938.7 253.5M943.0 245.9L951.5 253.5M956.0 245.9L964.4 253.5M968.5 246.0L977.2 253.5M973.3 208.8L998.4 216.0M981.3 246.0L990.0 253.5M994.7 246.2L1002.8 253.5M1007.1 246.0L1015.6 253.5M1019.3 246.0L1028.4 253.5M1023.4 208.8L1048.8 216.0M1032.6 245.9L1041.3 253.5M1045.0 245.7L1054.1 253.5M1073.2 208.8L1099.3 216.0M1125.4 208.8L1149.8 216.0M1175.9 208.8L1202.0 216.0M1253.4 177.6L1304.0 195.0"/>
<path d="M849.0 214.5L861.2 234.1M849.0 233.9L854.9 246.1M854.9 246.1L861.8 253.5M861.2 234.1L867.7 246.2M867.7 246.2L874.6 253.5M874.6 233.0L881.1 246.0M881.1 246.0L887.5 253.5M881.8 213.3L898.5 233.4M887.0 234.3L893.4 245.9M893.4 245.9L900.3 253.5M898.5 233.4L905.3 246.0M899.6 177.6L919.4 208.8M911.1 234.3L917.7 245.7M923.8 233.0L930.4 245.9M937.3 234.7L943.0 245.9M943.0 245.9L945.1 253.5M946.0 216.5L963.1 234.8M949.2 233.1L956.0 245.9M950.1 177.6L973.3 208.8M963.1 234.8L968.5 246.0M968.5 246.0L970.8 253.5M975.6 233.3L981.3 246.0M981.3 246.0L983.6 253.5M989.2 233.9L994.7 246.2M998.4 216.0L1012.5 234.0M1000.7 177.6L1023.4 208.8M1001.5 233.2L1007.1 246.0M1007.1 246.0L1009.2 253.5M1012.5 234.0L1019.3 246.0M1019.3 246.0L1022.0 253.5M1025.5 233.7L1032.6 245.9M1032.6 245.9L1034.8 253.5M1037.8 234.5L1045.0 245.7M1045.0 245.7L1047.7 253.5M1048.8 216.0L1064.0 234.0M1051.2 177.6L1073.2 208.8M1051.6 233.3L1057.0 245.8M1057.0 245.8L1060.5 253.5M1064.0 234.0L1070.0 245.8M1070.0 245.8L1073.3 253.5M1075.4 233.1L1082.4 245.8M1082.4 245.8L1086.1 253.5M1089.6 234.3L1094.8 245.9M1094.8 245.9L1098.9 253.5M1099.3 216.0L1114.3 234.2M1101.3 233.5L1108.4 246.0M1101.8 177.6L1125.4 208.8M1108.4 246.0L1111.7 253.5M1114.3 234.2L1121.2 246.0M1121.2 246.0L1124.6 253.5M1127.8 233.6L1133.6 245.8M1133.6 245.8L1137.4 253.5M1139.1 234.5L1146.6 245.8M1146.6 245.8L1150.2 253.5M1149.8 216.0L1165.5 234.2M1152.3 177.6L1175.9 208.8M1152.4 233.8L1159.4 246.1M1159.4 246.1L1163.0 253.5M1165.5 234.2L1171.6 246.0M1171.6 246.0L1175.8 253.5M1178.8 233.0L1183.4 245.9M1183.4 245.9L1188.6 253.5M1190.1 234.7L1195.7 245.8M1195.7 245.8L1201.5 253.5M1202.0 216.0L1214.4 234.6M1202.1 233.4L1208.5 245.6M1202.9 177.6L1233.3 212.3M1208.5 245.6L1214.3 253.5M1214.4 234.6L1221.4 245.6M1221.4 245.6L1227.1 253.5M1228.8 233.5L1233.8 245.6M1233.3 212.3L1241.7 234.2M1233.3 212.3L1253.9 233.5M1233.8 245.6L1239.9 253.5M1241.7 234.2L1246.2 245.7M1246.2 245.7L1252.7 253.5M1253.4 177.6L1271.6 213.3M1253.9 233.5L1258.9 246.0M1258.9 246.0L1265.5 253.5M1266.3 234.4L1272.0 245.9M1271.6 213.3L1279.5 233.8M1271.6 213.3L1291.3 234.6M1272.0 245.9L1278.4 253.5M1279.5 233.8L1284.9 245.7M1284.9 245.7L1291.2 253.5M1291.3 234.6L1297.4 246.0"/>
<path d="M849.0 177.6L849.0 196.8M849.0 196.8L849.0 214.5M849.0 214.5L849.0 233.9M849.0 233.9L849.0 245.9M849.0 245.9L849.0 253.5M854.9 246.1L855.4 253.5M867.7 246.2L868.2 253.5M881.0 253.5L881.1 246.0M881.8 213.3L887.0 234.3M893.4 245.9L893.9 253.5M905.3 246.0L906.7 253.5M917.7 245.7L919.5 253.5M919.4 208.8L923.8 233.0M930.4 245.9L932.3 253.5M946.0 216.5L949.2 233.1M946.0 216.5L950.1 177.6M956.0 245.9L957.9 253.5M973.3 208.8L975.6 233.3M994.7 246.2L996.4 253.5M998.4 216.0L1000.7 177.6M998.4 216.0L1001.5 233.2M1023.4 208.8L1025.5 233.7M1048.8 216.0L1051.2 177.6M1048.8 216.0L1051.6 233.3M1073.2 208.8L1075.4 233.1M1099.3 216.0L1101.3 233.5M1099.3 216.0L1101.8 177.6M1125.4 208.8L1127.8 233.6M1149.8 216.0L1152.3 177.6M1149.8 216.0L1152.4 233.8M1175.9 208.8L1178.8 233.0M1182.2 253.5L1183.4 245.9M1195.1 253.5L1195.7 245.8M1202.0 216.0L1202.1 233.4M1202.0 216.0L1202.9 177.6M1207.9 253.5L1208.5 245.6M1220.7 253.5L1221.4 245.6M1228.8 233.5L1233.3 212.3M1233.5 253.5L1233.8 245.6M1246.2 245.7L1246.3 253.5M1258.9 246.0L1259.1 253.5M1266.3 234.4L1271.6 213.3M1272.0 253.5L1272.0 245.9M1284.8 253.5L1284.9 245.7M1297.4 246.0L1297.6 253.5M1304.0 177.6L1304.0 195.0M1304.0 195.0L1304.0 214.0M1304.0 214.0L1304.0 233.9M1304.0 233.9L1304.0 245.9M1304.0 245.9L1304.0 253.5"/>
<path d="M849.0 253.5L854.9 246.1M854.9 246.1L861.2 234.1M861.2 234.1L881.8 213.3M861.8 253.5L867.7 246.2M867.7 246.2L874.6 233.0M874.6 253.5L881.1 246.0M874.6 233.0L881.8 213.3M881.1 246.0L887.0 234.3M881.8 213.3L899.6 177.6M887.5 253.5L893.4 245.9M893.4 245.9L898.5 233.4M898.5 233.4L919.4 208.8M900.3 253.5L905.3 246.0M905.3 246.0L911.1 234.3M911.1 234.3L919.4 208.8M913.1 253.5L917.7 245.7M917.7 245.7L923.8 233.0M919.4 208.8L950.1 177.6M925.9 253.5L930.4 245.9M930.4 245.9L937.3 234.7M937.3 234.7L946.0 216.5M938.7 253.5L943.0 245.9M943.0 245.9L949.2 233.1M951.5 253.5L956.0 245.9M956.0 245.9L963.1 234.8M963.1 234.8L973.3 208.8M964.4 253.5L968.5 246.0M968.5 246.0L975.6 233.3M973.3 208.8L1000.7 177.6M977.2 253.5L981.3 246.0M981.3 246.0L989.2 233.9M989.2 233.9L998.4 216.0M990.0 253.5L994.7 246.2M994.7 246.2L1001.5 233.2M1002.8 253.5L1007.1 246.0M1007.1 246.0L1012.5 234.0M1012.5 234.0L1023.4 208.8M1015.6 253.5L1019.3 246.0M1019.3 246.0L1025.5 233.7M1023.4 208.8L1051.2 177.6M1028.4 253.5L1032.6 245.9M1032.6 245.9L1037.8 234.5M1037.8 234.5L1048.8 216.0M1041.3 253.5L1045.0 245.7M1045.0 245.7L1051.6 233.3M1054.1 253.5L1057.0 245.8M1057.0 245.8L1064.0 234.0M1064.0 234.0L1073.2 208.8M1066.9 253.5L1070.0 245.8M1070.0 245.8L1075.4 233.1M1073.2 208.8L1101.8 177.6M1079.7 253.5L1082.4 245.8M1082.4 245.8L1089.6 234.3M1089.6 234.3L1099.3 216.0M1092.5 253.5L1094.8 245.9M1094.8 245.9L1101.3 233.5M1105.3 253.5L1108.4 246.0M1108.4 246.0L1114.3 234.2M1114.3 234.2L1125.4 208.8M1118.2 253.5L1121.2 246.0M1121.2 246.0L1127.8 233.6M1125.4 208.8L1152.3 177.6M1131.0 253.5L1133.6 245.8M1133.6 245.8L1139.1 234.5M1139.1 234.5L1149.8 216.0M1143.8 253.5L1146.6 245.8M1146.6 245.8L1152.4 233.8M1156.6 253.5L1159.4 246.1M1159.4 246.1L1165.5 234.2M1165.5 234.2L1175.9 208.8M1169.4 253.5L1171.6 246.0M1171.6 246.0L1178.8 233.0M1175.9 208.8L1202.9 177.6M1183.4 245.9L1190.1 234.7M1188.6 253.5L1195.7 245.8M1190.1 234.7L1202.0 216.0M1195.7 245.8L1202.1 233.4M1201.5 253.5L1208.5 245.6M1208.5 245.6L1214.4 234.6M1214.3 253.5L1221.4 245.6M1214.4 234.6L1233.3 212.3M1221.4 245.6L1228.8 233.5M1227.1 253.5L1233.8 245.6M1233.3 212.3L1253.4 177.6M1233.8 245.6L1241.7 234.2M1239.9 253.5L1246.2 245.7M1246.2 245.7L1253.9 233.5M1252.7 253.5L1258.9 246.0M1253.9 233.5L1271.6 213.3M1258.9 246.0L1266.3 234.4M1265.5 253.5L1272.0 245.9M1272.0 245.9L1279.5 233.8M1278.4 253.5L1284.9 245.7M1284.9 245.7L1291.3 234.6M1291.2 253.5L1297.4 246.0M1291.3 234.6L1304.0 214.0M1297.4 246.0L1304.0 233.9M1297.6 253.5L1304.0 245.9"/>
<path d="M849.0 196.8L899.6 177.6M923.8 233.0L946.0 216.5M946.0 216.5L973.3 208.8M975.6 233.3L998.4 216.0M998.4 216.0L1023.4 208.8M1025.5 233.7L1048.8 216.0M1048.8 216.0L1073.2 208.8M1060.5 253.5L1070.0 245.8M1073.3 253.5L1082.4 245.8M1075.4 233.1L1099.3 216.0M1086.1 253.5L1094.8 245.9M1098.9 253.5L1108.4 246.0M1099.3 216.0L1125.4 208.8M1111.7 253.5L1121.2 246.0M1124.6 253.5L1133.6 245.8M1127.8 233.6L1149.8 216.0M1137.4 253.5L1146.6 245.8M1149.8 216.0L1175.9 208.8M1150.2 253.5L1159.4 246.1M1163.0 253.5L1171.6 246.0M1175.8 253.5L1183.4 245.9M1178.8 233.0L1202.0 216.0M1271.6 213.3L1304.0 195.0"/>
<path d="M849.0 253.5L855.4 253.5M849.0 259.1L852.2 259.1M849.0 264.7L855.4 264.7M849.0 270.3L852.2 270.3M849.0 275.9L855.4 275.9M849.0 281.5L852.2 281.5M849.0 287.1L855.4 287.1M849.0 292.7L852.2 292.7M849.0 298.3L855.4 298.3M849.0 303.9L852.2 303.9M852.2 259.1L858.6 259.1M852.2 270.3L858.6 270.3M852.2 281.5L858.6 281.5M852.2 292.7L858.6 292.7M852.2 303.9L858.6 303.9M855.4 253.5L861.8 253.5M855.4 264.7L861.8 264.7M855.4 275.9L861.8 275.9M855.4 287.1L861.8 287.1M855.4 298.3L861.8 298.3M858.6 259.1L865.0 259.1M858.6 270.3L865.0 270.3M858.6 281.5L865.0 281.5M858.6 292.7L865.0 292.7M858.6 303.9L865.0 303.9M861.8 253.5L868.2 253.5M861.8 264.7L868.2 264.7M861.8 275.9L868.2 275.9M861.8 287.1L868.2 287.1M861.8 298.3L868.2 298.3M865.0 259.1L871.4 259.1M865.0 270.3L871.4 270.3M865.0 281.5L871.4 281.5M865.0 292.7L871.4 292.7M865.0 303.9L871.4 303.9M868.2 253.5L874.6 253.5M868.2 264.7L874.6 264.7M868.2 275.9L874.6 275.9M868.2 287.1L874.6 287.1M868.2 298.3L874.6 298.3M871.4 259.1L877.8 259.1M871.4 270.3L877.8 270.3M871.4 281.5L877.8 281.5M871.4 292.7L877.8 292.7M871.4 303.9L877.8 303.9M874.6 253.5L881.0 253.5M874.6 264.7L881.0 264.7M874.6 275.9L881.0 275.9M874.6 287.1L881.0 287.1M874.6 298.3L881.0 298.3M877.8 259.1L884.2 259.1M877.8 270.3L884.2 270.3M877.8 281.5L884.2 281.5M877.8 292.7L884.2 292.7M877.8 303.9L884.2 303.9M881.0 253.5L887.5 253.5M881.0 264.7L887.5 264.7M881.0 275.9L887.5 275.9M881.0 287.1L887.5 287.1M881.0 298.3L887.5 298.3M884.2 259.1L890.7 259.1M884.2 270.3L890.7 270.3M884.2 281.5L890.7 281.5M884.2 292.7L890.7 292.7M884.2 303.9L890.7 303.9M887.5 253.5L893.9 253.5M887.5 264.7L893.9 264.7M887.5 275.9L893.9 275.9M887.5 287.1L893.9 287.1M887.5 298.3L893.9 298.3M890.7 259.1L897.1 259.1M890.7 270.3L897.1 270.3M890.7 281.5L897.1 281.5M890.7 292.7L897.1 292.7M890.7 303.9L897.1 303.9M893.9 253.5L900.3 253.5M893.9 264.7L900.3 264.7M893.9 275.9L900.3 275.9M893.9 287.1L900.3 287.1M893.9 298.3L900.3 298.3M897.1 259.1L903.5 259.1M897.1 270.3L903.5 270.3M897.1 281.5L903.5 281.5M897.1 292.7L903.5 292.7M897.1 303.9L903.5 303.9M900.3 253.5L906.7 253.5M900.3 264.7L906.7 264.7M900.3 275.9L906.7 275.9M900.3 287.1L906.7 287.1M900.3 298.3L906.7 298.3M903.5 259.1L909.9 259.1M903.5 270.3L909.9 270.3M903.5 281.5L909.9 281.5M903.5 292.7L909.9 292.7M903.5 303.9L909.9 303.9M906.7 253.5L913.1 253.5M906.7 264.7L913.1 264.7M906.7 275.9L913.1 275.9M906.7 287.1L913.1 287.1M906.7 298.3L913.1 298.3M909.9 259.1L916.3 259.1M909.9 270.3L916.3 270.3M909.9 281.5L916.3 281.5M909.9 292.7L916.3 292.7M909.9 303.9L916.3 303.9M913.1 253.5L919.5 253.5M913.1 264.7L919.5 264.7M913.1 275.9L919.5 275.9M913.1 287.1L919.5 287.1M913.1 298.3L919.5 298.3M916.3 259.1L922.7 259.1M916.3 270.3L922.7 270.3M916.3 281.5L922.7 281.5M916.3 292.7L922.7 292.7M916.3 303.9L922.7 303.9M919.5 253.5L925.9 253.5M919.5 264.7L925.9 264.7M919.5 275.9L925.9 275.9M919.5 287.1L925.9 287.1M919.5 298.3L925.9 298.3M922.7 259.1L929.1 259.1M922.7 270.3L929.1 270.3M922.7 281.5L929.1 281.5M922.7 292.7L929.1 292.7M922.7 303.9L929.1 303.9M925.9 253.5L932.3 253.5M925.9 264.7L932.3 264.7M925.9 275.9L932.3 275.9M925.9 287.1L932.3 287.1M925.9 298.3L932.3 298.3M929.1 259.1L935.5 259.1M929.1 270.3L935.5 270.3M929.1 281.5L935.5 281.5M929.1 292.7L935.5 292.7M929.1 303.9L935.5 303.9M932.3 253.5L938.7 253.5M932.3 264.7L938.7 264.7M932.3 275.9L938.7 275.9M932.3 287.1L938.7 287.1M932.3 298.3L938.7 298.3M935.5 259.1L941.9 259.1M935.5 270.3L941.9 270.3M935.5 281.5L941.9 281.5M935.5 292.7L941.9 292.7M935.5 303.9L941.9 303.9M938.7 253.5L945.1 253.5M938.7 264.7L945.1 264.7M938.7 275.9L945.1 275.9M938.7 287.1L945.1 287.1M938.7 298.3L945.1 298.3M941.9 259.1L948.3 259.1M941.9 270.3L948.3 270.3M941.9 281.5L948.3 281.5M941.9 292.7L948.3 292.7M941.9 303.9L948.3 303.9M945.1 253.5L951.5 253.5M945.1 264.7L951.5 264.7M945.1 275.9L951.5 275.9M945.1 287.1L951.5 287.1M945.1 298.3L951.5 298.3M948.3 259.1L954.7 259.1M948.3 270.3L954.7 270.3M948.3 281.5L954.7 281.5M948.3 292.7L954.7 292.7M948.3 303.9L954.7 303.9M951.5 253.5L957.9 253.5M951.5 264.7L957.9 264.7M951.5 275.9L957.9 275.9M951.5 287.1L957.9 287.1M951.5 298.3L957.9 298.3M954.7 259.1L961.1 259.1M954.7 270.3L961.1 270.3M954.7 281.5L961.1 281.5M954.7 292.7L961.1 292.7M954.7 303.9L961.1 303.9M957.9 253.5L964.4 253.5M957.9 264.7L964.4 264.7M957.9 275.9L964.4 275.9M957.9 287.1L964.4 287.1M957.9 298.3L964.4 298.3M961.1 259.1L967.6 259.1M961.1 270.3L967.6 270.3M961.1 281.5L967.6 281.5M961.1 292.7L967.6 292.7M961.1 303.9L967.6 303.9M964.4 253.5L970.8 253.5M964.4 264.7L970.8 264.7M964.4 275.9L970.8 275.9M964.4 287.1L970.8 287.1M964.4 298.3L970.8 298.3M967.6 259.1L974.0 259.1M967.6 270.3L974.0 270.3M967.6 281.5L974.0 281.5M967.6 292.7L974.0 292.7M967.6 303.9L974.0 303.9M970.8 253.5L977.2 253.5M970.8 264.7L977.2 264.7M970.8 275.9L977.2 275.9M970.8 287.1L977.2 287.1M970.8 298.3L977.2 298.3M974.0 259.1L980.4 259.1M974.0 270.3L980.4 270.3M974.0 281.5L980.4 281.5M974.0 292.7L980.4 292.7M974.0 303.9L980.4 303.9M977.2 253.5L983.6 253.5M977.2 264.7L983.6 264.7M977.2 275.9L983.6 275.9M977.2 287.1L983.6 287.1M977.2 298.3L983.6 298.3M980.4 259.1L986.8 259.1M980.4 270.3L986.8 270.3M980.4 281.5L986.8 281.5M980.4 292.7L986.8 292.7M980.4 303.9L986.8 303.9M983.6 253.5L990.0 253.5M983.6 264.7L990.0 264.7M983.6 275.9L990.0 275.9M983.6 287.1L990.0 287.1M983.6 298.3L990.0 298.3M986.8 259.1L993.2 259.1M986.8 270.3L993.2 270.3M986.8 281.5L993.2 281.5M986.8 292.7L993.2 292.7M986.8 303.9L993.2 303.9M990.0 253.5L996.4 253.5M990.0 264.7L996.4 264.7M990.0 275.9L996.4 275.9M990.0 287.1L996.4 287.1M990.0 298.3L996.4 298.3M993.2 259.1L999.6 259.1M993.2 270.3L999.6 270.3M993.2 281.5L999.6 281.5M993.2 292.7L999.6 292.7M993.2 303.9L999.6 303.9M996.4 253.5L1002.8 253.5M996.4 264.7L1002.8 264.7M996.4 275.9L1002.8 275.9M996.4 287.1L1002.8 287.1M996.4 298.3L1002.8 298.3M999.6 259.1L1006.0 259.1M999.6 270.3L1006.0 270.3M999.6 281.5L1006.0 281.5M999.6 292.7L1006.0 292.7M999.6 303.9L1006.0 303.9M1002.8 253.5L1009.2 253.5M1002.8 264.7L1009.2 264.7M1002.8 275.9L1009.2 275.9M1002.8 287.1L1009.2 287.1M1002.8 298.3L1009.2 298.3M1006.0 259.1L1012.4 259.1M1006.0 270.3L1012.4 270.3M1006.0 281.5L1012.4 281.5M1006.0 292.7L1012.4 292.7M1006.0 303.9L1012.4 303.9M1009.2 253.5L1015.6 253.5M1009.2 264.7L1015.6 264.7M1009.2 275.9L1015.6 275.9M1009.2 287.1L1015.6 287.1M1009.2 298.3L1015.6 298.3M1012.4 259.1L1018.8 259.1M1012.4 270.3L1018.8 270.3M1012.4 281.5L1018.8 281.5M1012.4 292.7L1018.8 292.7M1012.4 303.9L1018.8 303.9M1015.6 253.5L1022.0 253.5M1015.6 264.7L1022.0 264.7M1015.6 275.9L1022.0 275.9M1015.6 287.1L1022.0 287.1M1015.6 298.3L1022.0 298.3M1018.8 259.1L1025.2 259.1M1018.8 270.3L1025.2 270.3M1018.8 281.5L1025.2 281.5M1018.8 292.7L1025.2 292.7M1018.8 303.9L1025.2 303.9M1022.0 253.5L1028.4 253.5M1022.0 264.7L1028.4 264.7M1022.0 275.9L1028.4 275.9M1022.0 287.1L1028.4 287.1M1022.0 298.3L1028.4 298.3M1025.2 259.1L1031.6 259.1M1025.2 270.3L1031.6 270.3M1025.2 281.5L1031.6 281.5M1025.2 292.7L1031.6 292.7M1025.2 303.9L1031.6 303.9M1028.4 253.5L1034.8 253.5M1028.4 264.7L1034.8 264.7M1028.4 275.9L1034.8 275.9M1028.4 287.1L1034.8 287.1M1028.4 298.3L1034.8 298.3M1031.6 259.1L1038.0 259.1M1031.6 270.3L1038.0 270.3M1031.6 281.5L1038.0 281.5M1031.6 292.7L1038.0 292.7M1031.6 303.9L1038.0 303.9M1034.8 253.5L1041.3 253.5M1034.8 264.7L1041.3 264.7M1034.8 275.9L1041.3 275.9M1034.8 287.1L1041.3 287.1M1034.8 298.3L1041.3 298.3M1038.0 259.1L1044.5 259.1M1038.0 270.3L1044.5 270.3M1038.0 281.5L1044.5 281.5M1038.0 292.7L1044.5 292.7M1038.0 303.9L1044.5 303.9M1041.3 253.5L1047.7 253.5M1041.3 264.7L1047.7 264.7M1041.3 275.9L1047.7 275.9M1041.3 287.1L1047.7 287.1M1041.3 298.3L1047.7 298.3M1044.5 259.1L1050.9 259.1M1044.5 270.3L1050.9 270.3M1044.5 281.5L1050.9 281.5M1044.5 292.7L1050.9 292.7M1044.5 303.9L1050.9 303.9M1047.7 253.5L1054.1 253.5M1047.7 264.7L1054.1 264.7M1047.7 275.9L1054.1 275.9M1047.7 287.1L1054.1 287.1M1047.7 298.3L1054.1 298.3M1050.9 259.1L1057.3 259.1M1050.9 270.3L1057.3 270.3M1050.9 281.5L1057.3 281.5M1050.9 292.7L1057.3 292.7M1050.9 303.9L1057.3 303.9M1054.1 253.5L1060.5 253.5M1054.1 264.7L1060.5 264.7M1054.1 275.9L1060.5 275.9M1054.1 287.1L1060.5 287.1M1054.1 298.3L1060.5 298.3M1057.3 259.1L1063.7 259.1M1057.3 270.3L1063.7 270.3M1057.3 281.5L1063.7 281.5M1057.3 292.7L1063.7 292.7M1057.3 303.9L1063.7 303.9M1060.5 253.5L1066.9 253.5M1060.5 264.7L1066.9 264.7M1060.5 275.9L1066.9 275.9M1060.5 287.1L1066.9 287.1M1060.5 298.3L1066.9 298.3M1063.7 259.1L1070.1 259.1M1063.7 270.3L1070.1 270.3M1063.7 281.5L1070.1 281.5M1063.7 292.7L1070.1 292.7M1063.7 303.9L1070.1 303.9M1066.9 253.5L1073.3 253.5M1066.9 264.7L1073.3 264.7M1066.9 275.9L1073.3 275.9M1066.9 287.1L1073.3 287.1M1066.9 298.3L1073.3 298.3M1070.1 259.1L1076.5 259.1M1070.1 270.3L1076.5 270.3M1070.1 281.5L1076.5 281.5M1070.1 292.7L1076.5 292.7M1070.1 303.9L1076.5 303.9M1073.3 253.5L1079.7 253.5M1073.3 264.7L1079.7 264.7M1073.3 275.9L1079.7 275.9M1073.3 287.1L1079.7 287.1M1073.3 298.3L1079.7 298.3M1076.5 259.1L1082.9 259.1M1076.5 270.3L1082.9 270.3M1076.5 281.5L1082.9 281.5M1076.5 292.7L1082.9 292.7M1076.5 303.9L1082.9 303.9M1079.7 253.5L1086.1 253.5M1079.7 264.7L1086.1 264.7M1079.7 275.9L1086.1 275.9M1079.7 287.1L1086.1 287.1M1079.7 298.3L1086.1 298.3M1082.9 259.1L1089.3 259.1M1082.9 270.3L1089.3 270.3M1082.9 281.5L1089.3 281.5M1082.9 292.7L1089.3 292.7M1082.9 303.9L1089.3 303.9M1086.1 253.5L1092.5 253.5M1086.1 264.7L1092.5 264.7M1086.1 275.9L1092.5 275.9M1086.1 287.1L1092.5 287.1M1086.1 298.3L1092.5 298.3M1089.3 259.1L1095.7 259.1M1089.3 270.3L1095.7 270.3M1089.3 281.5L1095.7 281.5M1089.3 292.7L1095.7 292.7M1089.3 303.9L1095.7 303.9M1092.5 253.5L1098.9 253.5M1092.5 264.7L1098.9 264.7M1092.5 275.9L1098.9 275.9M1092.5 287.1L1098.9 287.1M1092.5 298.3L1098.9 298.3M1095.7 259.1L1102.1 259.1M1095.7 270.3L1102.1 270.3M1095.7 281.5L1102.1 281.5M1095.7 292.7L1102.1 292.7M1095.7 303.9L1102.1 303.9M1098.9 253.5L1105.3 253.5M1098.9 264.7L1105.3 264.7M1098.9 275.9L1105.3 275.9M1098.9 287.1L1105.3 287.1M1098.9 298.3L1105.3 298.3M1102.1 259.1L1108.5 259.1M1102.1 270.3L1108.5 270.3M1102.1 281.5L1108.5 281.5M1102.1 292.7L1108.5 292.7M1102.1 303.9L1108.5 303.9M1105.3 253.5L1111.7 253.5M1105.3 264.7L1111.7 264.7M1105.3 275.9L1111.7 275.9M1105.3 287.1L1111.7 287.1M1105.3 298.3L1111.7 298.3M1108.5 259.1L1115.0 259.1M1108.5 270.3L1115.0 270.3M1108.5 281.5L1115.0 281.5M1108.5 292.7L1115.0 292.7M1108.5 303.9L1115.0 303.9M1111.7 253.5L1118.2 253.5M1111.7 264.7L1118.2 264.7M1111.7 275.9L1118.2 275.9M1111.7 287.1L1118.2 287.1M1111.7 298.3L1118.2 298.3M1115.0 259.1L1121.4 259.1M1115.0 270.3L1121.4 270.3M1115.0 281.5L1121.4 281.5M1115.0 292.7L1121.4 292.7M1115.0 303.9L1121.4 303.9M1118.2 253.5L1124.6 253.5M1118.2 264.7L1124.6 264.7M1118.2 275.9L1124.6 275.9M1118.2 287.1L1124.6 287.1M1118.2 298.3L1124.6 298.3M1121.4 259.1L1127.8 259.1M1121.4 270.3L1127.8 270.3M1121.4 281.5L1127.8 281.5M1121.4 292.7L1127.8 292.7M1121.4 303.9L1127.8 303.9M1124.6 253.5L1131.0 253.5M1124.6 264.7L1131.0 264.7M1124.6 275.9L1131.0 275.9M1124.6 287.1L1131.0 287.1M1124.6 298.3L1131.0 298.3M1127.8 259.1L1134.2 259.1M1127.8 270.3L1134.2 270.3M1127.8 281.5L1134.2 281.5M1127.8 292.7L1134.2 292.7M1127.8 303.9L1134.2 303.9M1131.0 253.5L1137.4 253.5M1131.0 264.7L1137.4 264.7M1131.0 275.9L1137.4 275.9M1131.0 287.1L1137.4 287.1M1131.0 298.3L1137.4 298.3M1134.2 259.1L1140.6 259.1M1134.2 270.3L1140.6 270.3M1134.2 281.5L1140.6 281.5M1134.2 292.7L1140.6 292.7M1134.2 303.9L1140.6 303.9M1137.4 253.5L1143.8 253.5M1137.4 264.7L1143.8 264.7M1137.4 275.9L1143.8 275.9M1137.4 287.1L1143.8 287.1M1137.4 298.3L1143.8 298.3M1140.6 259.1L1147.0 259.1M1140.6 270.3L1147.0 270.3M1140.6 281.5L1147.0 281.5M1140.6 292.7L1147.0 292.7M1140.6 303.9L1147.0 303.9M1143.8 253.5L1150.2 253.5M1143.8 264.7L1150.2 264.7M1143.8 275.9L1150.2 275.9M1143.8 287.1L1150.2 287.1M1143.8 298.3L1150.2 298.3M1147.0 259.1L1153.4 259.1M1147.0 270.3L1153.4 270.3M1147.0 281.5L1153.4 281.5M1147.0 292.7L1153.4 292.7M1147.0 303.9L1153.4 303.9M1150.2 253.5L1156.6 253.5M1150.2 264.7L1156.6 264.7M1150.2 275.9L1156.6 275.9M1150.2 287.1L1156.6 287.1M1150.2 298.3L1156.6 298.3M1153.4 259.1L1159.8 259.1M1153.4 270.3L1159.8 270.3M1153.4 281.5L1159.8 281.5M1153.4 292.7L1159.8 292.7M1153.4 303.9L1159.8 303.9M1156.6 253.5L1163.0 253.5M1156.6 264.7L1163.0 264.7M1156.6 275.9L1163.0 275.9M1156.6 287.1L1163.0 287.1M1156.6 298.3L1163.0 298.3M1159.8 259.1L1166.2 259.1M1159.8 270.3L1166.2 270.3M1159.8 281.5L1166.2 281.5M1159.8 292.7L1166.2 292.7M1159.8 303.9L1166.2 303.9M1163.0 253.5L1169.4 253.5M1163.0 264.7L1169.4 264.7M1163.0 275.9L1169.4 275.9M1163.0 287.1L1169.4 287.1M1163.0 298.3L1169.4 298.3M1166.2 259.1L1172.6 259.1M1166.2 270.3L1172.6 270.3M1166.2 281.5L1172.6 281.5M1166.2 292.7L1172.6 292.7M1166.2 303.9L1172.6 303.9M1169.4 253.5L1175.8 253.5M1169.4 264.7L1175.8 264.7M1169.4 275.9L1175.8 275.9M1169.4 287.1L1175.8 287.1M1169.4 298.3L1175.8 298.3M1172.6 259.1L1179.0 259.1M1172.6 270.3L1179.0 270.3M1172.6 281.5L1179.0 281.5M1172.6 292.7L1179.0 292.7M1172.6 303.9L1179.0 303.9M1175.8 253.5L1182.2 253.5M1175.8 264.7L1182.2 264.7M1175.8 275.9L1182.2 275.9M1175.8 287.1L1182.2 287.1M1175.8 298.3L1182.2 298.3M1179.0 259.1L1185.4 259.1M1179.0 270.3L1185.4 270.3M1179.0 281.5L1185.4 281.5M1179.0 292.7L1185.4 292.7M1179.0 303.9L1185.4 303.9M1182.2 253.5L1188.6 253.5M1182.2 264.7L1188.6 264.7M1182.2 275.9L1188.6 275.9M1182.2 287.1L1188.6 287.1M1182.2 298.3L1188.6 298.3M1185.4 259.1L1191.9 259.1M1185.4 270.3L1191.9 270.3M1185.4 281.5L1191.9 281.5M1185.4 292.7L1191.9 292.7M1185.4 303.9L1191.9 303.9M1188.6 253.5L1195.1 253.5M1188.6 264.7L1195.1 264.7M1188.6 275.9L1195.1 275.9M1188.6 287.1L1195.1 287.1M1188.6 298.3L1195.1 298.3M1191.9 259.1L1198.3 259.1M1191.9 270.3L1198.3 270.3M1191.9 281.5L1198.3 281.5M1191.9 292.7L1198.3 292.7M1191.9 303.9L1198.3 303.9M1195.1 253.5L1201.5 253.5M1195.1 264.7L1201.5 264.7M1195.1 275.9L1201.5 275.9M1195.1 287.1L1201.5 287.1M1195.1 298.3L1201.5 298.3M1198.3 259.1L1204.7 259.1M1198.3 270.3L1204.7 270.3M1198.3 281.5L1204.7 281.5M1198.3 292.7L1204.7 292.7M1198.3 303.9L1204.7 303.9M1201.5 253.5L1207.9 253.5M1201.5 264.7L1207.9 264.7M1201.5 275.9L1207.9 275.9M1201.5 287.1L1207.9 287.1M1201.5 298.3L1207.9 298.3M1204.7 259.1L1211.1 259.1M1204.7 270.3L1211.1 270.3M1204.7 281.5L1211.1 281.5M1204.7 292.7L1211.1 292.7M1204.7 303.9L1211.1 303.9M1207.9 253.5L1214.3 253.5M1207.9 264.7L1214.3 264.7M1207.9 275.9L1214.3 275.9M1207.9 287.1L1214.3 287.1M1207.9 298.3L1214.3 298.3M1211.1 259.1L1217.5 259.1M1211.1 270.3L1217.5 270.3M1211.1 281.5L1217.5 281.5M1211.1 292.7L1217.5 292.7M1211.1 303.9L1217.5 303.9M1214.3 253.5L1220.7 253.5M1214.3 264.7L1220.7 264.7M1214.3 275.9L1220.7 275.9M1214.3 287.1L1220.7 287.1M1214.3 298.3L1220.7 298.3M1217.5 259.1L1223.9 259.1M1217.5 270.3L1223.9 270.3M1217.5 281.5L1223.9 281.5M1217.5 292.7L1223.9 292.7M1217.5 303.9L1223.9 303.9M1220.7 253.5L1227.1 253.5M1220.7 264.7L1227.1 264.7M1220.7 275.9L1227.1 275.9M1220.7 287.1L1227.1 287.1M1220.7 298.3L1227.1 298.3M1223.9 259.1L1230.3 259.1M1223.9 270.3L1230.3 270.3M1223.9 281.5L1230.3 281.5M1223.9 292.7L1230.3 292.7M1223.9 303.9L1230.3 303.9M1227.1 253.5L1233.5 253.5M1227.1 264.7L1233.5 264.7M1227.1 275.9L1233.5 275.9M1227.1 287.1L1233.5 287.1M1227.1 298.3L1233.5 298.3M1230.3 259.1L1236.7 259.1M1230.3 270.3L1236.7 270.3M1230.3 281.5L1236.7 281.5M1230.3 292.7L1236.7 292.7M1230.3 303.9L1236.7 303.9M1233.5 253.5L1239.9 253.5M1233.5 264.7L1239.9 264.7M1233.5 275.9L1239.9 275.9M1233.5 287.1L1239.9 287.1M1233.5 298.3L1239.9 298.3M1236.7 259.1L1243.1 259.1M1236.7 270.3L1243.1 270.3M1236.7 281.5L1243.1 281.5M1236.7 292.7L1243.1 292.7M1236.7 303.9L1243.1 303.9M1239.9 253.5L1246.3 253.5M1239.9 264.7L1246.3 264.7M1239.9 275.9L1246.3 275.9M1239.9 287.1L1246.3 287.1M1239.9 298.3L1246.3 298.3M1243.1 259.1L1249.5 259.1M1243.1 270.3L1249.5 270.3M1243.1 281.5L1249.5 281.5M1243.1 292.7L1249.5 292.7M1243.1 303.9L1249.5 303.9M1246.3 253.5L1252.7 253.5M1246.3 264.7L1252.7 264.7M1246.3 275.9L1252.7 275.9M1246.3 287.1L1252.7 287.1M1246.3 298.3L1252.7 298.3M1249.5 259.1L1255.9 259.1M1249.5 270.3L1255.9 270.3M1249.5 281.5L1255.9 281.5M1249.5 292.7L1255.9 292.7M1249.5 303.9L1255.9 303.9M1252.7 253.5L1259.1 253.5M1252.7 264.7L1259.1 264.7M1252.7 275.9L1259.1 275.9M1252.7 287.1L1259.1 287.1M1252.7 298.3L1259.1 298.3M1255.9 259.1L1262.3 259.1M1255.9 270.3L1262.3 270.3M1255.9 281.5L1262.3 281.5M1255.9 292.7L1262.3 292.7M1255.9 303.9L1262.3 303.9M1259.1 253.5L1265.5 253.5M1259.1 264.7L1265.5 264.7M1259.1 275.9L1265.5 275.9M1259.1 287.1L1265.5 287.1M1259.1 298.3L1265.5 298.3M1262.3 259.1L1268.8 259.1M1262.3 270.3L1268.8 270.3M1262.3 281.5L1268.8 281.5M1262.3 292.7L1268.8 292.7M1262.3 303.9L1268.8 303.9M1265.5 253.5L1272.0 253.5M1265.5 264.7L1272.0 264.7M1265.5 275.9L1272.0 275.9M1265.5 287.1L1272.0 287.1M1265.5 298.3L1272.0 298.3M1268.8 259.1L1275.2 259.1M1268.8 270.3L1275.2 270.3M1268.8 281.5L1275.2 281.5M1268.8 292.7L1275.2 292.7M1268.8 303.9L1275.2 303.9M1272.0 253.5L1278.4 253.5M1272.0 264.7L1278.4 264.7M1272.0 275.9L1278.4 275.9M1272.0 287.1L1278.4 287.1M1272.0 298.3L1278.4 298.3M1275.2 259.1L1281.6 259.1M1275.2 270.3L1281.6 270.3M1275.2 281.5L1281.6 281.5M1275.2 292.7L1281.6 292.7M1275.2 303.9L1281.6 303.9M1278.4 253.5L1284.8 253.5M1278.4 264.7L1284.8 264.7M1278.4 275.9L1284.8 275.9M1278.4 287.1L1284.8 287.1M1278.4 298.3L1284.8 298.3M1281.6 259.1L1288.0 259.1M1281.6 270.3L1288.0 270.3M1281.6 281.5L1288.0 281.5M1281.6 292.7L1288.0 292.7M1281.6 303.9L1288.0 303.9M1284.8 253.5L1291.2 253.5M1284.8 264.7L1291.2 264.7M1284.8 275.9L1291.2 275.9M1284.8 287.1L1291.2 287.1M1284.8 298.3L1291.2 298.3M1288.0 259.1L1294.4 259.1M1288.0 270.3L1294.4 270.3M1288.0 281.5L1294.4 281.5M1288.0 292.7L1294.4 292.7M1288.0 303.9L1294.4 303.9M1291.2 253.5L1297.6 253.5M1291.2 264.7L1297.6 264.7M1291.2 275.9L1297.6 275.9M1291.2 287.1L1297.6 287.1M1291.2 298.3L1297.6 298.3M1294.4 259.1L1300.8 259.1M1294.4 270.3L1300.8 270.3M1294.4 281.5L1300.8 281.5M1294.4 292.7L1300.8 292.7M1294.4 303.9L1300.8 303.9M1297.6 253.5L1304.0 253.5M1297.6 264.7L1304.0 264.7M1297.6 275.9L1304.0 275.9M1297.6 287.1L1304.0 287.1M1297.6 298.3L1304.0 298.3M1300.8 259.1L1304.0 259.1M1300.8 270.3L1304.0 270.3M1300.8 281.5L1304.0 281.5M1300.8 292.7L1304.0 292.7M1300.8 303.9L1304.0 303.9"/>
<path d="M849.0 253.5L852.2 259.1M849.0 264.7L852.2 270.3M849.0 275.9L852.2 281.5M849.0 287.1L852.2 292.7M849.0 298.3L852.2 303.9M852.2 259.1L855.4 264.7M852.2 270.3L855.4 275.9M852.2 281.5L855.4 287.1M852.2 292.7L855.4 298.3M855.4 253.5L858.6 259.1M855.4 264.7L858.6 270.3M855.4 275.9L858.6 281.5M855.4 287.1L858.6 292.7M855.4 298.3L858.6 303.9M858.6 259.1L861.8 264.7M858.6 270.3L861.8 275.9M858.6 281.5L861.8 287.1M858.6 292.7L861.8 298.3M861.8 253.5L865.0 259.1M861.8 264.7L865.0 270.3M861.8 275.9L865.0 281.5M861.8 287.1L865.0 292.7M861.8 298.3L865.0 303.9M865.0 259.1L868.2 264.7M865.0 270.3L868.2 275.9M865.0 281.5L868.2 287.1M865.0 292.7L868.2 298.3M868.2 253.5L871.4 259.1M868.2 264.7L871.4 270.3M868.2 275.9L871.4 281.5M868.2 287.1L871.4 292.7M868.2 298.3L871.4 303.9M871.4 259.1L874.6 264.7M871.4 270.3L874.6 275.9M871.4 281.5L874.6 287.1M871.4 292.7L874.6 298.3M874.6 253.5L877.8 259.1M874.6 264.7L877.8 270.3M874.6 275.9L877.8 281.5M874.6 287.1L877.8 292.7M874.6 298.3L877.8 303.9M877.8 259.1L881.0 264.7M877.8 270.3L881.0 275.9M877.8 281.5L881.0 287.1M877.8 292.7L881.0 298.3M881.0 253.5L884.2 259.1M881.0 264.7L884.2 270.3M881.0 275.9L884.2 281.5M881.0 287.1L884.2 292.7M881.0 298.3L884.2 303.9M884.2 259.1L887.5 264.7M884.2 270.3L887.5 275.9M884.2 281.5L887.5 287.1M884.2 292.7L887.5 298.3M887.5 253.5L890.7 259.1M887.5 264.7L890.7 270.3M887.5 275.9L890.7 281.5M887.5 287.1L890.7 292.7M887.5 298.3L890.7 303.9M890.7 259.1L893.9 264.7M890.7 270.3L893.9 275.9M890.7 281.5L893.9 287.1M890.7 292.7L893.9 298.3M893.9 253.5L897.1 259.1M893.9 264.7L897.1 270.3M893.9 275.9L897.1 281.5M893.9 287.1L897.1 292.7M893.9 298.3L897.1 303.9M897.1 259.1L900.3 264.7M897.1 270.3L900.3 275.9M897.1 281.5L900.3 287.1M897.1 292.7L900.3 298.3M900.3 253.5L903.5 259.1M900.3 264.7L903.5 270.3M900.3 275.9L903.5 281.5M900.3 287.1L903.5 292.7M900.3 298.3L903.5 303.9M903.5 259.1L906.7 264.7M903.5 270.3L906.7 275.9M903.5 281.5L906.7 287.1M903.5 292.7L906.7 298.3M906.7 253.5L909.9 259.1M906.7 264.7L909.9 270.3M906.7 275.9L909.9 281.5M906.7 287.1L909.9 292.7M906.7 298.3L909.9 303.9M909.9 259.1L913.1 264.7M909.9 270.3L913.1 275.9M909.9 281.5L913.1 287.1M909.9 292.7L913.1 298.3M913.1 253.5L916.3 259.1M913.1 264.7L916.3 270.3M913.1 275.9L916.3 281.5M913.1 287.1L916.3 292.7M913.1 298.3L916.3 303.9M916.3 259.1L919.5 264.7M916.3 270.3L919.5 275.9M916.3 281.5L919.5 287.1M916.3 292.7L919.5 298.3M919.5 253.5L922.7 259.1M919.5 264.7L922.7 270.3M919.5 275.9L922.7 281.5M919.5 287.1L922.7 292.7M919.5 298.3L922.7 303.9M922.7 259.1L925.9 264.7M922.7 270.3L925.9 275.9M922.7 281.5L925.9 287.1M922.7 292.7L925.9 298.3M925.9 253.5L929.1 259.1M925.9 264.7L929.1 270.3M925.9 275.9L929.1 281.5M925.9 287.1L929.1 292.7M925.9 298.3L929.1 303.9M929.1 259.1L932.3 264.7M929.1 270.3L932.3 275.9M929.1 281.5L932.3 287.1M929.1 292.7L932.3 298.3M932.3 253.5L935.5 259.1M932.3 264.7L935.5 270.3M932.3 275.9L935.5 281.5M932.3 287.1L935.5 292.7M932.3 298.3L935.5 303.9M935.5 259.1L938.7 264.7M935.5 270.3L938.7 275.9M935.5 281.5L938.7 287.1M935.5 292.7L938.7 298.3M938.7 253.5L941.9 259.1M938.7 264.7L941.9 270.3M938.7 275.9L941.9 281.5M938.7 287.1L941.9 292.7M938.7 298.3L941.9 303.9M941.9 259.1L945.1 264.7M941.9 270.3L945.1 275.9M941.9 281.5L945.1 287.1M941.9 292.7L945.1 298.3M945.1 253.5L948.3 259.1M945.1 264.7L948.3 270.3M945.1 275.9L948.3 281.5M945.1 287.1L948.3 292.7M945.1 298.3L948.3 303.9M948.3 259.1L951.5 264.7M948.3 270.3L951.5 275.9M948.3 281.5L951.5 287.1M948.3 292.7L951.5 298.3M951.5 253.5L954.7 259.1M951.5 264.7L954.7 270.3M951.5 275.9L954.7 281.5M951.5 287.1L954.7 292.7M951.5 298.3L954.7 303.9M954.7 259.1L957.9 264.7M954.7 270.3L957.9 275.9M954.7 281.5L957.9 287.1M954.7 292.7L957.9 298.3M957.9 253.5L961.1 259.1M957.9 264.7L961.1 270.3M957.9 275.9L961.1 281.5M957.9 287.1L961.1 292.7M957.9 298.3L961.1 303.9M961.1 259.1L964.4 264.7M961.1 270.3L964.4 275.9M961.1 281.5L964.4 287.1M961.1 292.7L964.4 298.3M964.4 253.5L967.6 259.1M964.4 264.7L967.6 270.3M964.4 275.9L967.6 281.5M964.4 287.1L967.6 292.7M964.4 298.3L967.6 303.9M967.6 259.1L970.8 264.7M967.6 270.3L970.8 275.9M967.6 281.5L970.8 287.1M967.6 292.7L970.8 298.3M970.8 253.5L974.0 259.1M970.8 264.7L974.0 270.3M970.8 275.9L974.0 281.5M970.8 287.1L974.0 292.7M970.8 298.3L974.0 303.9M974.0 259.1L977.2 264.7M974.0 270.3L977.2 275.9M974.0 281.5L977.2 287.1M974.0 292.7L977.2 298.3M977.2 253.5L980.4 259.1M977.2 264.7L980.4 270.3M977.2 275.9L980.4 281.5M977.2 287.1L980.4 292.7M977.2 298.3L980.4 303.9M980.4 259.1L983.6 264.7M980.4 270.3L983.6 275.9M980.4 281.5L983.6 287.1M980.4 292.7L983.6 298.3M983.6 253.5L986.8 259.1M983.6 264.7L986.8 270.3M983.6 275.9L986.8 281.5M983.6 287.1L986.8 292.7M983.6 298.3L986.8 303.9M986.8 259.1L990.0 264.7M986.8 270.3L990.0 275.9M986.8 281.5L990.0 287.1M986.8 292.7L990.0 298.3M990.0 253.5L993.2 259.1M990.0 264.7L993.2 270.3M990.0 275.9L993.2 281.5M990.0 287.1L993.2 292.7M990.0 298.3L993.2 303.9M993.2 259.1L996.4 264.7M993.2 270.3L996.4 275.9M993.2 281.5L996.4 287.1M993.2 292.7L996.4 298.3M996.4 253.5L999.6 259.1M996.4 264.7L999.6 270.3M996.4 275.9L999.6 281.5M996.4 287.1L999.6 292.7M996.4 298.3L999.6 303.9M999.6 259.1L1002.8 264.7M999.6 270.3L1002.8 275.9M999.6 281.5L1002.8 287.1M999.6 292.7L1002.8 298.3M1002.8 253.5L1006.0 259.1M1002.8 264.7L1006.0 270.3M1002.8 275.9L1006.0 281.5M1002.8 287.1L1006.0 292.7M1002.8 298.3L1006.0 303.9M1006.0 259.1L1009.2 264.7M1006.0 270.3L1009.2 275.9M1006.0 281.5L1009.2 287.1M1006.0 292.7L1009.2 298.3M1009.2 253.5L1012.4 259.1M1009.2 264.7L1012.4 270.3M1009.2 275.9L1012.4 281.5M1009.2 287.1L1012.4 292.7M1009.2 298.3L1012.4 303.9M1012.4 259.1L1015.6 264.7M1012.4 270.3L1015.6 275.9M1012.4 281.5L1015.6 287.1M1012.4 292.7L1015.6 298.3M1015.6 253.5L1018.8 259.1M1015.6 264.7L1018.8 270.3M1015.6 275.9L1018.8 281.5M1015.6 287.1L1018.8 292.7M1015.6 298.3L1018.8 303.9M1018.8 259.1L1022.0 264.7M1018.8 270.3L1022.0 275.9M1018.8 281.5L1022.0 287.1M1018.8 292.7L1022.0 298.3M1022.0 253.5L1025.2 259.1M1022.0 264.7L1025.2 270.3M1022.0 275.9L1025.2 281.5M1022.0 287.1L1025.2 292.7M1022.0 298.3L1025.2 303.9M1025.2 259.1L1028.4 264.7M1025.2 270.3L1028.4 275.9M1025.2 281.5L1028.4 287.1M1025.2 292.7L1028.4 298.3M1028.4 253.5L1031.6 259.1M1028.4 264.7L1031.6 270.3M1028.4 275.9L1031.6 281.5M1028.4 287.1L1031.6 292.7M1028.4 298.3L1031.6 303.9M1031.6 259.1L1034.8 264.7M1031.6 270.3L1034.8 275.9M1031.6 281.5L1034.8 287.1M1031.6 292.7L1034.8 298.3M1034.8 253.5L1038.0 259.1M1034.8 264.7L1038.0 270.3M1034.8 275.9L1038.0 281.5M1034.8 287.1L1038.0 292.7M1034.8 298.3L1038.0 303.9M1038.0 259.1L1041.3 264.7M1038.0 270.3L1041.3 275.9M1038.0 281.5L1041.3 287.1M1038.0 292.7L1041.3 298.3M1041.3 253.5L1044.5 259.1M1041.3 264.7L1044.5 270.3M1041.3 275.9L1044.5 281.5M1041.3 287.1L1044.5 292.7M1041.3 298.3L1044.5 303.9M1044.5 259.1L1047.7 264.7M1044.5 270.3L1047.7 275.9M1044.5 281.5L1047.7 287.1M1044.5 292.7L1047.7 298.3M1047.7 253.5L1050.9 259.1M1047.7 264.7L1050.9 270.3M1047.7 275.9L1050.9 281.5M1047.7 287.1L1050.9 292.7M1047.7 298.3L1050.9 303.9M1050.9 259.1L1054.1 264.7M1050.9 270.3L1054.1 275.9M1050.9 281.5L1054.1 287.1M1050.9 292.7L1054.1 298.3M1054.1 253.5L1057.3 259.1M1054.1 264.7L1057.3 270.3M1054.1 275.9L1057.3 281.5M1054.1 287.1L1057.3 292.7M1054.1 298.3L1057.3 303.9M1057.3 259.1L1060.5 264.7M1057.3 270.3L1060.5 275.9M1057.3 281.5L1060.5 287.1M1057.3 292.7L1060.5 298.3M1060.5 253.5L1063.7 259.1M1060.5 264.7L1063.7 270.3M1060.5 275.9L1063.7 281.5M1060.5 287.1L1063.7 292.7M1060.5 298.3L1063.7 303.9M1063.7 259.1L1066.9 264.7M1063.7 270.3L1066.9 275.9M1063.7 281.5L1066.9 287.1M1063.7 292.7L1066.9 298.3M1066.9 253.5L1070.1 259.1M1066.9 264.7L1070.1 270.3M1066.9 275.9L1070.1 281.5M1066.9 287.1L1070.1 292.7M1066.9 298.3L1070.1 303.9M1070.1 259.1L1073.3 264.7M1070.1 270.3L1073.3 275.9M1070.1 281.5L1073.3 287.1M1070.1 292.7L1073.3 298.3M1073.3 253.5L1076.5 259.1M1073.3 264.7L1076.5 270.3M1073.3 275.9L1076.5 281.5M1073.3 287.1L1076.5 292.7M1073.3 298.3L1076.5 303.9M1076.5 259.1L1079.7 264.7M1076.5 270.3L1079.7 275.9M1076.5 281.5L1079.7 287.1M1076.5 292.7L1079.7 298.3M1079.7 253.5L1082.9 259.1M1079.7 264.7L1082.9 270.3M1079.7 275.9L1082.9 281.5M1079.7 287.1L1082.9 292.7M1079.7 298.3L1082.9 303.9M1082.9 259.1L1086.1 264.7M1082.9 270.3L1086.1 275.9M1082.9 281.5L1086.1 287.1M1082.9 292.7L1086.1 298.3M1086.1 253.5L1089.3 259.1M1086.1 264.7L1089.3 270.3M1086.1 275.9L1089.3 281.5M1086.1 287.1L1089.3 292.7M1086.1 298.3L1089.3 303.9M1089.3 259.1L1092.5 264.7M1089.3 270.3L1092.5 275.9M1089.3 281.5L1092.5 287.1M1089.3 292.7L1092.5 298.3M1092.5 253.5L1095.7 259.1M1092.5 264.7L1095.7 270.3M1092.5 275.9L1095.7 281.5M1092.5 287.1L1095.7 292.7M1092.5 298.3L1095.7 303.9M1095.7 259.1L1098.9 264.7M1095.7 270.3L1098.9 275.9M1095.7 281.5L1098.9 287.1M1095.7 292.7L1098.9 298.3M1098.9 253.5L1102.1 259.1M1098.9 264.7L1102.1 270.3M1098.9 275.9L1102.1 281.5M1098.9 287.1L1102.1 292.7M1098.9 298.3L1102.1 303.9M1102.1 259.1L1105.3 264.7M1102.1 270.3L1105.3 275.9M1102.1 281.5L1105.3 287.1M1102.1 292.7L1105.3 298.3M1105.3 253.5L1108.5 259.1M1105.3 264.7L1108.5 270.3M1105.3 275.9L1108.5 281.5M1105.3 287.1L1108.5 292.7M1105.3 298.3L1108.5 303.9M1108.5 259.1L1111.7 264.7M1108.5 270.3L1111.7 275.9M1108.5 281.5L1111.7 287.1M1108.5 292.7L1111.7 298.3M1111.7 253.5L1115.0 259.1M1111.7 264.7L1115.0 270.3M1111.7 275.9L1115.0 281.5M1111.7 287.1L1115.0 292.7M1111.7 298.3L1115.0 303.9M1115.0 259.1L1118.2 264.7M1115.0 270.3L1118.2 275.9M1115.0 281.5L1118.2 287.1M1115.0 292.7L1118.2 298.3M1118.2 253.5L1121.4 259.1M1118.2 264.7L1121.4 270.3M1118.2 275.9L1121.4 281.5M1118.2 287.1L1121.4 292.7M1118.2 298.3L1121.4 303.9M1121.4 259.1L1124.6 264.7M1121.4 270.3L1124.6 275.9M1121.4 281.5L1124.6 287.1M1121.4 292.7L1124.6 298.3M1124.6 253.5L1127.8 259.1M1124.6 264.7L1127.8 270.3M1124.6 275.9L1127.8 281.5M1124.6 287.1L1127.8 292.7M1124.6 298.3L1127.8 303.9M1127.8 259.1L1131.0 264.7M1127.8 270.3L1131.0 275.9M1127.8 281.5L1131.0 287.1M1127.8 292.7L1131.0 298.3M1131.0 253.5L1134.2 259.1M1131.0 264.7L1134.2 270.3M1131.0 275.9L1134.2 281.5M1131.0 287.1L1134.2 292.7M1131.0 298.3L1134.2 303.9M1134.2 259.1L1137.4 264.7M1134.2 270.3L1137.4 275.9M1134.2 281.5L1137.4 287.1M1134.2 292.7L1137.4 298.3M1137.4 253.5L1140.6 259.1M1137.4 264.7L1140.6 270.3M1137.4 275.9L1140.6 281.5M1137.4 287.1L1140.6 292.7M1137.4 298.3L1140.6 303.9M1140.6 259.1L1143.8 264.7M1140.6 270.3L1143.8 275.9M1140.6 281.5L1143.8 287.1M1140.6 292.7L1143.8 298.3M1143.8 253.5L1147.0 259.1M1143.8 264.7L1147.0 270.3M1143.8 275.9L1147.0 281.5M1143.8 287.1L1147.0 292.7M1143.8 298.3L1147.0 303.9M1147.0 259.1L1150.2 264.7M1147.0 270.3L1150.2 275.9M1147.0 281.5L1150.2 287.1M1147.0 292.7L1150.2 298.3M1150.2 253.5L1153.4 259.1M1150.2 264.7L1153.4 270.3M1150.2 275.9L1153.4 281.5M1150.2 287.1L1153.4 292.7M1150.2 298.3L1153.4 303.9M1153.4 259.1L1156.6 264.7M1153.4 270.3L1156.6 275.9M1153.4 281.5L1156.6 287.1M1153.4 292.7L1156.6 298.3M1156.6 253.5L1159.8 259.1M1156.6 264.7L1159.8 270.3M1156.6 275.9L1159.8 281.5M1156.6 287.1L1159.8 292.7M1156.6 298.3L1159.8 303.9M1159.8 259.1L1163.0 264.7M1159.8 270.3L1163.0 275.9M1159.8 281.5L1163.0 287.1M1159.8 292.7L1163.0 298.3M1163.0 253.5L1166.2 259.1M1163.0 264.7L1166.2 270.3M1163.0 275.9L1166.2 281.5M1163.0 287.1L1166.2 292.7M1163.0 298.3L1166.2 303.9M1166.2 259.1L1169.4 264.7M1166.2 270.3L1169.4 275.9M1166.2 281.5L1169.4 287.1M1166.2 292.7L1169.4 298.3M1169.4 253.5L1172.6 259.1M1169.4 264.7L1172.6 270.3M1169.4 275.9L1172.6 281.5M1169.4 287.1L1172.6 292.7M1169.4 298.3L1172.6 303.9M1172.6 259.1L1175.8 264.7M1172.6 270.3L1175.8 275.9M1172.6 281.5L1175.8 287.1M1172.6 292.7L1175.8 298.3M1175.8 253.5L1179.0 259.1M1175.8 264.7L1179.0 270.3M1175.8 275.9L1179.0 281.5M1175.8 287.1L1179.0 292.7M1175.8 298.3L1179.0 303.9M1179.0 259.1L1182.2 264.7M1179.0 270.3L1182.2 275.9M1179.0 281.5L1182.2 287.1M1179.0 292.7L1182.2 298.3M1182.2 253.5L1185.4 259.1M1182.2 264.7L1185.4 270.3M1182.2 275.9L1185.4 281.5M1182.2 287.1L1185.4 292.7M1182.2 298.3L1185.4 303.9M1185.4 259.1L1188.6 264.7M1185.4 270.3L1188.6 275.9M1185.4 281.5L1188.6 287.1M1185.4 292.7L1188.6 298.3M1188.6 253.5L1191.9 259.1M1188.6 264.7L1191.9 270.3M1188.6 275.9L1191.9 281.5M1188.6 287.1L1191.9 292.7M1188.6 298.3L1191.9 303.9M1191.9 259.1L1195.1 264.7M1191.9 270.3L1195.1 275.9M1191.9 281.5L1195.1 287.1M1191.9 292.7L1195.1 298.3M1195.1 253.5L1198.3 259.1M1195.1 264.7L1198.3 270.3M1195.1 275.9L1198.3 281.5M1195.1 287.1L1198.3 292.7M1195.1 298.3L1198.3 303.9M1198.3 259.1L1201.5 264.7M1198.3 270.3L1201.5 275.9M1198.3 281.5L1201.5 287.1M1198.3 292.7L1201.5 298.3M1201.5 253.5L1204.7 259.1M1201.5 264.7L1204.7 270.3M1201.5 275.9L1204.7 281.5M1201.5 287.1L1204.7 292.7M1201.5 298.3L1204.7 303.9M1204.7 259.1L1207.9 264.7M1204.7 270.3L1207.9 275.9M1204.7 281.5L1207.9 287.1M1204.7 292.7L1207.9 298.3M1207.9 253.5L1211.1 259.1M1207.9 264.7L1211.1 270.3M1207.9 275.9L1211.1 281.5M1207.9 287.1L1211.1 292.7M1207.9 298.3L1211.1 303.9M1211.1 259.1L1214.3 264.7M1211.1 270.3L1214.3 275.9M1211.1 281.5L1214.3 287.1M1211.1 292.7L1214.3 298.3M1214.3 253.5L1217.5 259.1M1214.3 264.7L1217.5 270.3M1214.3 275.9L1217.5 281.5M1214.3 287.1L1217.5 292.7M1214.3 298.3L1217.5 303.9M1217.5 259.1L1220.7 264.7M1217.5 270.3L1220.7 275.9M1217.5 281.5L1220.7 287.1M1217.5 292.7L1220.7 298.3M1220.7 253.5L1223.9 259.1M1220.7 264.7L1223.9 270.3M1220.7 275.9L1223.9 281.5M1220.7 287.1L1223.9 292.7M1220.7 298.3L1223.9 303.9M1223.9 259.1L1227.1 264.7M1223.9 270.3L1227.1 275.9M1223.9 281.5L1227.1 287.1M1223.9 292.7L1227.1 298.3M1227.1 253.5L1230.3 259.1M1227.1 264.7L1230.3 270.3M1227.1 275.9L1230.3 281.5M1227.1 287.1L1230.3 292.7M1227.1 298.3L1230.3 303.9M1230.3 259.1L1233.5 264.7M1230.3 270.3L1233.5 275.9M1230.3 281.5L1233.5 287.1M1230.3 292.7L1233.5 298.3M1233.5 253.5L1236.7 259.1M1233.5 264.7L1236.7 270.3M1233.5 275.9L1236.7 281.5M1233.5 287.1L1236.7 292.7M1233.5 298.3L1236.7 303.9M1236.7 259.1L1239.9 264.7M1236.7 270.3L1239.9 275.9M1236.7 281.5L1239.9 287.1M1236.7 292.7L1239.9 298.3M1239.9 253.5L1243.1 259.1M1239.9 264.7L1243.1 270.3M1239.9 275.9L1243.1 281.5M1239.9 287.1L1243.1 292.7M1239.9 298.3L1243.1 303.9M1243.1 259.1L1246.3 264.7M1243.1 270.3L1246.3 275.9M1243.1 281.5L1246.3 287.1M1243.1 292.7L1246.3 298.3M1246.3 253.5L1249.5 259.1M1246.3 264.7L1249.5 270.3M1246.3 275.9L1249.5 281.5M1246.3 287.1L1249.5 292.7M1246.3 298.3L1249.5 303.9M1249.5 259.1L1252.7 264.7M1249.5 270.3L1252.7 275.9M1249.5 281.5L1252.7 287.1M1249.5 292.7L1252.7 298.3M1252.7 253.5L1255.9 259.1M1252.7 264.7L1255.9 270.3M1252.7 275.9L1255.9 281.5M1252.7 287.1L1255.9 292.7M1252.7 298.3L1255.9 303.9M1255.9 259.1L1259.1 264.7M1255.9 270.3L1259.1 275.9M1255.9 281.5L1259.1 287.1M1255.9 292.7L1259.1 298.3M1259.1 253.5L1262.3 259.1M1259.1 264.7L1262.3 270.3M1259.1 275.9L1262.3 281.5M1259.1 287.1L1262.3 292.7M1259.1 298.3L1262.3 303.9M1262.3 259.1L1265.5 264.7M1262.3 270.3L1265.5 275.9M1262.3 281.5L1265.5 287.1M1262.3 292.7L1265.5 298.3M1265.5 253.5L1268.8 259.1M1265.5 264.7L1268.8 270.3M1265.5 275.9L1268.8 281.5M1265.5 287.1L1268.8 292.7M1265.5 298.3L1268.8 303.9M1268.8 259.1L1272.0 264.7M1268.8 270.3L1272.0 275.9M1268.8 281.5L1272.0 287.1M1268.8 292.7L1272.0 298.3M1272.0 253.5L1275.2 259.1M1272.0 264.7L1275.2 270.3M1272.0 275.9L1275.2 281.5M1272.0 287.1L1275.2 292.7M1272.0 298.3L1275.2 303.9M1275.2 259.1L1278.4 264.7M1275.2 270.3L1278.4 275.9M1275.2 281.5L1278.4 287.1M1275.2 292.7L1278.4 298.3M1278.4 253.5L1281.6 259.1M1278.4 264.7L1281.6 270.3M1278.4 275.9L1281.6 281.5M1278.4 287.1L1281.6 292.7M1278.4 298.3L1281.6 303.9M1281.6 259.1L1284.8 264.7M1281.6 270.3L1284.8 275.9M1281.6 281.5L1284.8 287.1M1281.6 292.7L1284.8 298.3M1284.8 253.5L1288.0 259.1M1284.8 264.7L1288.0 270.3M1284.8 275.9L1288.0 281.5M1284.8 287.1L1288.0 292.7M1284.8 298.3L1288.0 303.9M1288.0 259.1L1291.2 264.7M1288.0 270.3L1291.2 275.9M1288.0 281.5L1291.2 287.1M1288.0 292.7L1291.2 298.3M1291.2 253.5L1294.4 259.1M1291.2 264.7L1294.4 270.3M1291.2 275.9L1294.4 281.5M1291.2 287.1L1294.4 292.7M1291.2 298.3L1294.4 303.9M1294.4 259.1L1297.6 264.7M1294.4 270.3L1297.6 275.9M1294.4 281.5L1297.6 287.1M1294.4 292.7L1297.6 298.3M1297.6 253.5L1300.8 259.1M1297.6 264.7L1300.8 270.3M1297.6 275.9L1300.8 281.5M1297.6 287.1L1300.8 292.7M1297.6 298.3L1300.8 303.9M1300.8 259.1L1304.0 264.7M1300.8 270.3L1304.0 275.9M1300.8 281.5L1304.0 287.1M1300.8 292.7L1304.0 298.3"/>
<path d="M849.0 253.5L849.0 259.1M849.0 259.1L849.0 264.7M849.0 264.7L849.0 270.3M849.0 270.3L849.0 275.9M849.0 275.9L849.0 281.5M849.0 281.5L849.0 287.1M849.0 287.1L849.0 292.7M849.0 292.7L849.0 298.3M849.0 298.3L849.0 303.9M1304.0 253.5L1304.0 259.1M1304.0 259.1L1304.0 264.7M1304.0 264.7L1304.0 270.3M1304.0 270.3L1304.0 275.9M1304.0 275.9L1304.0 281.5M1304.0 281.5L1304.0 287.1M1304.0 287.1L1304.0 292.7M1304.0 292.7L1304.0 298.3M1304.0 298.3L1304.0 303.9"/>
<path d="M849.0 264.7L852.2 259.1M849.0 275.9L852.2 270.3M849.0 287.1L852.2 281.5M849.0 298.3L852.2 292.7M852.2 259.1L855.4 253.5M852.2 270.3L855.4 264.7M852.2 281.5L855.4 275.9M852.2 292.7L855.4 287.1M852.2 303.9L855.4 298.3M855.4 264.7L858.6 259.1M855.4 275.9L858.6 270.3M855.4 287.1L858.6 281.5M855.4 298.3L858.6 292.7M858.6 259.1L861.8 253.5M858.6 270.3L861.8 264.7M858.6 281.5L861.8 275.9M858.6 292.7L861.8 287.1M858.6 303.9L861.8 298.3M861.8 264.7L865.0 259.1M861.8 275.9L865.0 270.3M861.8 287.1L865.0 281.5M861.8 298.3L865.0 292.7M865.0 259.1L868.2 253.5M865.0 270.3L868.2 264.7M865.0 281.5L868.2 275.9M865.0 292.7L868.2 287.1M865.0 303.9L868.2 298.3M868.2 264.7L871.4 259.1M868.2 275.9L871.4 270.3M868.2 287.1L871.4 281.5M868.2 298.3L871.4 292.7M871.4 259.1L874.6 253.5M871.4 270.3L874.6 264.7M871.4 281.5L874.6 275.9M871.4 292.7L874.6 287.1M871.4 303.9L874.6 298.3M874.6 264.7L877.8 259.1M874.6 275.9L877.8 270.3M874.6 287.1L877.8 281.5M874.6 298.3L877.8 292.7M877.8 259.1L881.0 253.5M877.8 270.3L881.0 264.7M877.8 281.5L881.0 275.9M877.8 292.7L881.0 287.1M877.8 303.9L881.0 298.3M881.0 264.7L884.2 259.1M881.0 275.9L884.2 270.3M881.0 287.1L884.2 281.5M881.0 298.3L884.2 292.7M884.2 259.1L887.5 253.5M884.2 270.3L887.5 264.7M884.2 281.5L887.5 275.9M884.2 292.7L887.5 287.1M884.2 303.9L887.5 298.3M887.5 264.7L890.7 259.1M887.5 275.9L890.7 270.3M887.5 287.1L890.7 281.5M887.5 298.3L890.7 292.7M890.7 259.1L893.9 253.5M890.7 270.3L893.9 264.7M890.7 281.5L893.9 275.9M890.7 292.7L893.9 287.1M890.7 303.9L893.9 298.3M893.9 264.7L897.1 259.1M893.9 275.9L897.1 270.3M893.9 287.1L897.1 281.5M893.9 298.3L897.1 292.7M897.1 259.1L900.3 253.5M897.1 270.3L900.3 264.7M897.1 281.5L900.3 275.9M897.1 292.7L900.3 287.1M897.1 303.9L900.3 298.3M900.3 264.7L903.5 259.1M900.3 275.9L903.5 270.3M900.3 287.1L903.5 281.5M900.3 298.3L903.5 292.7M903.5 259.1L906.7 253.5M903.5 270.3L906.7 264.7M903.5 281.5L906.7 275.9M903.5 292.7L906.7 287.1M903.5 303.9L906.7 298.3M906.7 264.7L909.9 259.1M906.7 275.9L909.9 270.3M906.7 287.1L909.9 281.5M906.7 298.3L909.9 292.7M909.9 259.1L913.1 253.5M909.9 270.3L913.1 264.7M909.9 281.5L913.1 275.9M909.9 292.7L913.1 287.1M909.9 303.9L913.1 298.3M913.1 264.7L916.3 259.1M913.1 275.9L916.3 270.3M913.1 287.1L916.3 281.5M913.1 298.3L916.3 292.7M916.3 259.1L919.5 253.5M916.3 270.3L919.5 264.7M916.3 281.5L919.5 275.9M916.3 292.7L919.5 287.1M916.3 303.9L919.5 298.3M919.5 264.7L922.7 259.1M919.5 275.9L922.7 270.3M919.5 287.1L922.7 281.5M919.5 298.3L922.7 292.7M922.7 259.1L925.9 253.5M922.7 270.3L925.9 264.7M922.7 281.5L925.9 275.9M922.7 292.7L925.9 287.1M922.7 303.9L925.9 298.3M925.9 264.7L929.1 259.1M925.9 275.9L929.1 270.3M925.9 287.1L929.1 281.5M925.9 298.3L929.1 292.7M929.1 259.1L932.3 253.5M929.1 270.3L932.3 264.7M929.1 281.5L932.3 275.9M929.1 292.7L932.3 287.1M929.1 303.9L932.3 298.3M932.3 264.7L935.5 259.1M932.3 275.9L935.5 270.3M932.3 287.1L935.5 281.5M932.3 298.3L935.5 292.7M935.5 259.1L938.7 253.5M935.5 270.3L938.7 264.7M935.5 281.5L938.7 275.9M935.5 292.7L938.7 287.1M935.5 303.9L938.7 298.3M938.7 264.7L941.9 259.1M938.7 275.9L941.9 270.3M938.7 287.1L941.9 281.5M938.7 298.3L941.9 292.7M941.9 259.1L945.1 253.5M941.9 270.3L945.1 264.7M941.9 281.5L945.1 275.9M941.9 292.7L945.1 287.1M941.9 303.9L945.1 298.3M945.1 264.7L948.3 259.1M945.1 275.9L948.3 270.3M945.1 287.1L948.3 281.5M945.1 298.3L948.3 292.7M948.3 259.1L951.5 253.5M948.3 270.3L951.5 264.7M948.3 281.5L951.5 275.9M948.3 292.7L951.5 287.1M948.3 303.9L951.5 298.3M951.5 264.7L954.7 259.1M951.5 275.9L954.7 270.3M951.5 287.1L954.7 281.5M951.5 298.3L954.7 292.7M954.7 259.1L957.9 253.5M954.7 270.3L957.9 264.7M954.7 281.5L957.9 275.9M954.7 292.7L957.9 287.1M954.7 303.9L957.9 298.3M957.9 264.7L961.1 259.1M957.9 275.9L961.1 270.3M957.9 287.1L961.1 281.5M957.9 298.3L961.1 292.7M961.1 259.1L964.4 253.5M961.1 270.3L964.4 264.7M961.1 281.5L964.4 275.9M961.1 292.7L964.4 287.1M961.1 303.9L964.4 298.3M964.4 264.7L967.6 259.1M964.4 275.9L967.6 270.3M964.4 287.1L967.6 281.5M964.4 298.3L967.6 292.7M967.6 259.1L970.8 253.5M967.6 270.3L970.8 264.7M967.6 281.5L970.8 275.9M967.6 292.7L970.8 287.1M967.6 303.9L970.8 298.3M970.8 264.7L974.0 259.1M970.8 275.9L974.0 270.3M970.8 287.1L974.0 281.5M970.8 298.3L974.0 292.7M974.0 259.1L977.2 253.5M974.0 270.3L977.2 264.7M974.0 281.5L977.2 275.9M974.0 292.7L977.2 287.1M974.0 303.9L977.2 298.3M977.2 264.7L980.4 259.1M977.2 275.9L980.4 270.3M977.2 287.1L980.4 281.5M977.2 298.3L980.4 292.7M980.4 259.1L983.6 253.5M980.4 270.3L983.6 264.7M980.4 281.5L983.6 275.9M980.4 292.7L983.6 287.1M980.4 303.9L983.6 298.3M983.6 264.7L986.8 259.1M983.6 275.9L986.8 270.3M983.6 287.1L986.8 281.5M983.6 298.3L986.8 292.7M986.8 259.1L990.0 253.5M986.8 270.3L990.0 264.7M986.8 281.5L990.0 275.9M986.8 292.7L990.0 287.1M986.8 303.9L990.0 298.3M990.0 264.7L993.2 259.1M990.0 275.9L993.2 270.3M990.0 287.1L993.2 281.5M990.0 298.3L993.2 292.7M993.2 259.1L996.4 253.5M993.2 270.3L996.4 264.7M993.2 281.5L996.4 275.9M993.2 292.7L996.4 287.1M993.2 303.9L996.4 298.3M996.4 264.7L999.6 259.1M996.4 275.9L999.6 270.3M996.4 287.1L999.6 281.5M996.4 298.3L999.6 292.7M999.6 259.1L1002.8 253.5M999.6 270.3L1002.8 264.7M999.6 281.5L1002.8 275.9M999.6 292.7L1002.8 287.1M999.6 303.9L1002.8 298.3M1002.8 264.7L1006.0 259.1M1002.8 275.9L1006.0 270.3M1002.8 287.1L1006.0 281.5M1002.8 298.3L1006.0 292.7M1006.0 259.1L1009.2 253.5M1006.0 270.3L1009.2 264.7M1006.0 281.5L1009.2 275.9M1006.0 292.7L1009.2 287.1M1006.0 303.9L1009.2 298.3M1009.2 264.7L1012.4 259.1M1009.2 275.9L1012.4 270.3M1009.2 287.1L1012.4 281.5M1009.2 298.3L1012.4 292.7M1012.4 259.1L1015.6 253.5M1012.4 270.3L1015.6 264.7M1012.4 281.5L1015.6 275.9M1012.4 292.7L1015.6 287.1M1012.4 303.9L1015.6 298.3M1015.6 264.7L1018.8 259.1M1015.6 275.9L1018.8 270.3M1015.6 287.1L1018.8 281.5M1015.6 298.3L1018.8 292.7M1018.8 259.1L1022.0 253.5M1018.8 270.3L1022.0 264.7M1018.8 281.5L1022.0 275.9M1018.8 292.7L1022.0 287.1M1018.8 303.9L1022.0 298.3M1022.0 264.7L1025.2 259.1M1022.0 275.9L1025.2 270.3M1022.0 287.1L1025.2 281.5M1022.0 298.3L1025.2 292.7M1025.2 259.1L1028.4 253.5M1025.2 270.3L1028.4 264.7M1025.2 281.5L1028.4 275.9M1025.2 292.7L1028.4 287.1M1025.2 303.9L1028.4 298.3M1028.4 264.7L1031.6 259.1M1028.4 275.9L1031.6 270.3M1028.4 287.1L1031.6 281.5M1028.4 298.3L1031.6 292.7M1031.6 259.1L1034.8 253.5M1031.6 270.3L1034.8 264.7M1031.6 281.5L1034.8 275.9M1031.6 292.7L1034.8 287.1M1031.6 303.9L1034.8 298.3M1034.8 264.7L1038.0 259.1M1034.8 275.9L1038.0 270.3M1034.8 287.1L1038.0 281.5M1034.8 298.3L1038.0 292.7M1038.0 259.1L1041.3 253.5M1038.0 270.3L1041.3 264.7M1038.0 281.5L1041.3 275.9M1038.0 292.7L1041.3 287.1M1038.0 303.9L1041.3 298.3M1041.3 264.7L1044.5 259.1M1041.3 275.9L1044.5 270.3M1041.3 287.1L1044.5 281.5M1041.3 298.3L1044.5 292.7M1044.5 259.1L1047.7 253.5M1044.5 270.3L1047.7 264.7M1044.5 281.5L1047.7 275.9M1044.5 292.7L1047.7 287.1M1044.5 303.9L1047.7 298.3M1047.7 264.7L1050.9 259.1M1047.7 275.9L1050.9 270.3M1047.7 287.1L1050.9 281.5M1047.7 298.3L1050.9 292.7M1050.9 259.1L1054.1 253.5M1050.9 270.3L1054.1 264.7M1050.9 281.5L1054.1 275.9M1050.9 292.7L1054.1 287.1M1050.9 303.9L1054.1 298.3M1054.1 264.7L1057.3 259.1M1054.1 275.9L1057.3 270.3M1054.1 287.1L1057.3 281.5M1054.1 298.3L1057.3 292.7M1057.3 259.1L1060.5 253.5M1057.3 270.3L1060.5 264.7M1057.3 281.5L1060.5 275.9M1057.3 292.7L1060.5 287.1M1057.3 303.9L1060.5 298.3M1060.5 264.7L1063.7 259.1M1060.5 275.9L1063.7 270.3M1060.5 287.1L1063.7 281.5M1060.5 298.3L1063.7 292.7M1063.7 259.1L1066.9 253.5M1063.7 270.3L1066.9 264.7M1063.7 281.5L1066.9 275.9M1063.7 292.7L1066.9 287.1M1063.7 303.9L1066.9 298.3M1066.9 264.7L1070.1 259.1M1066.9 275.9L1070.1 270.3M1066.9 287.1L1070.1 281.5M1066.9 298.3L1070.1 292.7M1070.1 259.1L1073.3 253.5M1070.1 270.3L1073.3 264.7M1070.1 281.5L1073.3 275.9M1070.1 292.7L1073.3 287.1M1070.1 303.9L1073.3 298.3M1073.3 264.7L1076.5 259.1M1073.3 275.9L1076.5 270.3M1073.3 287.1L1076.5 281.5M1073.3 298.3L1076.5 292.7M1076.5 259.1L1079.7 253.5M1076.5 270.3L1079.7 264.7M1076.5 281.5L1079.7 275.9M1076.5 292.7L1079.7 287.1M1076.5 303.9L1079.7 298.3M1079.7 264.7L1082.9 259.1M1079.7 275.9L1082.9 270.3M1079.7 287.1L1082.9 281.5M1079.7 298.3L1082.9 292.7M1082.9 259.1L1086.1 253.5M1082.9 270.3L1086.1 264.7M1082.9 281.5L1086.1 275.9M1082.9 292.7L1086.1 287.1M1082.9 303.9L1086.1 298.3M1086.1 264.7L1089.3 259.1M1086.1 275.9L1089.3 270.3M1086.1 287.1L1089.3 281.5M1086.1 298.3L1089.3 292.7M1089.3 259.1L1092.5 253.5M1089.3 270.3L1092.5 264.7M1089.3 281.5L1092.5 275.9M1089.3 292.7L1092.5 287.1M1089.3 303.9L1092.5 298.3M1092.5 264.7L1095.7 259.1M1092.5 275.9L1095.7 270.3M1092.5 287.1L1095.7 281.5M1092.5 298.3L1095.7 292.7M1095.7 259.1L1098.9 253.5M1095.7 270.3L1098.9 264.7M1095.7 281.5L1098.9 275.9M1095.7 292.7L1098.9 287.1M1095.7 303.9L1098.9 298.3M1098.9 264.7L1102.1 259.1M1098.9 275.9L1102.1 270.3M1098.9 287.1L1102.1 281.5M1098.9 298.3L1102.1 292.7M1102.1 259.1L1105.3 253.5M1102.1 270.3L1105.3 264.7M1102.1 281.5L1105.3 275.9M1102.1 292.7L1105.3 287.1M1102.1 303.9L1105.3 298.3M1105.3 264.7L1108.5 259.1M1105.3 275.9L1108.5 270.3M1105.3 287.1L1108.5 281.5M1105.3 298.3L1108.5 292.7M1108.5 259.1L1111.7 253.5M1108.5 270.3L1111.7 264.7M1108.5 281.5L1111.7 275.9M1108.5 292.7L1111.7 287.1M1108.5 303.9L1111.7 298.3M1111.7 264.7L1115.0 259.1M1111.7 275.9L1115.0 270.3M1111.7 287.1L1115.0 281.5M1111.7 298.3L1115.0 292.7M1115.0 259.1L1118.2 253.5M1115.0 270.3L1118.2 264.7M1115.0 281.5L1118.2 275.9M1115.0 292.7L1118.2 287.1M1115.0 303.9L1118.2 298.3M1118.2 264.7L1121.4 259.1M1118.2 275.9L1121.4 270.3M1118.2 287.1L1121.4 281.5M1118.2 298.3L1121.4 292.7M1121.4 259.1L1124.6 253.5M1121.4 270.3L1124.6 264.7M1121.4 281.5L1124.6 275.9M1121.4 292.7L1124.6 287.1M1121.4 303.9L1124.6 298.3M1124.6 264.7L1127.8 259.1M1124.6 275.9L1127.8 270.3M1124.6 287.1L1127.8 281.5M1124.6 298.3L1127.8 292.7M1127.8 259.1L1131.0 253.5M1127.8 270.3L1131.0 264.7M1127.8 281.5L1131.0 275.9M1127.8 292.7L1131.0 287.1M1127.8 303.9L1131.0 298.3M1131.0 264.7L1134.2 259.1M1131.0 275.9L1134.2 270.3M1131.0 287.1L1134.2 281.5M1131.0 298.3L1134.2 292.7M1134.2 259.1L1137.4 253.5M1134.2 270.3L1137.4 264.7M1134.2 281.5L1137.4 275.9M1134.2 292.7L1137.4 287.1M1134.2 303.9L1137.4 298.3M1137.4 264.7L1140.6 259.1M1137.4 275.9L1140.6 270.3M1137.4 287.1L1140.6 281.5M1137.4 298.3L1140.6 292.7M1140.6 259.1L1143.8 253.5M1140.6 270.3L1143.8 264.7M1140.6 281.5L1143.8 275.9M1140.6 292.7L1143.8 287.1M1140.6 303.9L1143.8 298.3M1143.8 264.7L1147.0 259.1M1143.8 275.9L1147.0 270.3M1143.8 287.1L1147.0 281.5M1143.8 298.3L1147.0 292.7M1147.0 259.1L1150.2 253.5M1147.0 270.3L1150.2 264.7M1147.0 281.5L1150.2 275.9M1147.0 292.7L1150.2 287.1M1147.0 303.9L1150.2 298.3M1150.2 264.7L1153.4 259.1M1150.2 275.9L1153.4 270.3M1150.2 287.1L1153.4 281.5M1150.2 298.3L1153.4 292.7M1153.4 259.1L1156.6 253.5M1153.4 270.3L1156.6 264.7M1153.4 281.5L1156.6 275.9M1153.4 292.7L1156.6 287.1M1153.4 303.9L1156.6 298.3M1156.6 264.7L1159.8 259.1M1156.6 275.9L1159.8 270.3M1156.6 287.1L1159.8 281.5M1156.6 298.3L1159.8 292.7M1159.8 259.1L1163.0 253.5M1159.8 270.3L1163.0 264.7M1159.8 281.5L1163.0 275.9M1159.8 292.7L1163.0 287.1M1159.8 303.9L1163.0 298.3M1163.0 264.7L1166.2 259.1M1163.0 275.9L1166.2 270.3M1163.0 287.1L1166.2 281.5M1163.0 298.3L1166.2 292.7M1166.2 259.1L1169.4 253.5M1166.2 270.3L1169.4 264.7M1166.2 281.5L1169.4 275.9M1166.2 292.7L1169.4 287.1M1166.2 303.9L1169.4 298.3M1169.4 264.7L1172.6 259.1M1169.4 275.9L1172.6 270.3M1169.4 287.1L1172.6 281.5M1169.4 298.3L1172.6 292.7M1172.6 259.1L1175.8 253.5M1172.6 270.3L1175.8 264.7M1172.6 281.5L1175.8 275.9M1172.6 292.7L1175.8 287.1M1172.6 303.9L1175.8 298.3M1175.8 264.7L1179.0 259.1M1175.8 275.9L1179.0 270.3M1175.8 287.1L1179.0 281.5M1175.8 298.3L1179.0 292.7M1179.0 259.1L1182.2 253.5M1179.0 270.3L1182.2 264.7M1179.0 281.5L1182.2 275.9M1179.0 292.7L1182.2 287.1M1179.0 303.9L1182.2 298.3M1182.2 264.7L1185.4 259.1M1182.2 275.9L1185.4 270.3M1182.2 287.1L1185.4 281.5M1182.2 298.3L1185.4 292.7M1185.4 259.1L1188.6 253.5M1185.4 270.3L1188.6 264.7M1185.4 281.5L1188.6 275.9M1185.4 292.7L1188.6 287.1M1185.4 303.9L1188.6 298.3M1188.6 264.7L1191.9 259.1M1188.6 275.9L1191.9 270.3M1188.6 287.1L1191.9 281.5M1188.6 298.3L1191.9 292.7M1191.9 259.1L1195.1 253.5M1191.9 270.3L1195.1 264.7M1191.9 281.5L1195.1 275.9M1191.9 292.7L1195.1 287.1M1191.9 303.9L1195.1 298.3M1195.1 264.7L1198.3 259.1M1195.1 275.9L1198.3 270.3M1195.1 287.1L1198.3 281.5M1195.1 298.3L1198.3 292.7M1198.3 259.1L1201.5 253.5M1198.3 270.3L1201.5 264.7M1198.3 281.5L1201.5 275.9M1198.3 292.7L1201.5 287.1M1198.3 303.9L1201.5 298.3M1201.5 264.7L1204.7 259.1M1201.5 275.9L1204.7 270.3M1201.5 287.1L1204.7 281.5M1201.5 298.3L1204.7 292.7M1204.7 259.1L1207.9 253.5M1204.7 270.3L1207.9 264.7M1204.7 281.5L1207.9 275.9M1204.7 292.7L1207.9 287.1M1204.7 303.9L1207.9 298.3M1207.9 264.7L1211.1 259.1M1207.9 275.9L1211.1 270.3M1207.9 287.1L1211.1 281.5M1207.9 298.3L1211.1 292.7M1211.1 259.1L1214.3 253.5M1211.1 270.3L1214.3 264.7M1211.1 281.5L1214.3 275.9M1211.1 292.7L1214.3 287.1M1211.1 303.9L1214.3 298.3M1214.3 264.7L1217.5 259.1M1214.3 275.9L1217.5 270.3M1214.3 287.1L1217.5 281.5M1214.3 298.3L1217.5 292.7M1217.5 259.1L1220.7 253.5M1217.5 270.3L1220.7 264.7M1217.5 281.5L1220.7 275.9M1217.5 292.7L1220.7 287.1M1217.5 303.9L1220.7 298.3M1220.7 264.7L1223.9 259.1M1220.7 275.9L1223.9 270.3M1220.7 287.1L1223.9 281.5M1220.7 298.3L1223.9 292.7M1223.9 259.1L1227.1 253.5M1223.9 270.3L1227.1 264.7M1223.9 281.5L1227.1 275.9M1223.9 292.7L1227.1 287.1M1223.9 303.9L1227.1 298.3M1227.1 264.7L1230.3 259.1M1227.1 275.9L1230.3 270.3M1227.1 287.1L1230.3 281.5M1227.1 298.3L1230.3 292.7M1230.3 259.1L1233.5 253.5M1230.3 270.3L1233.5 264.7M1230.3 281.5L1233.5 275.9M1230.3 292.7L1233.5 287.1M1230.3 303.9L1233.5 298.3M1233.5 264.7L1236.7 259.1M1233.5 275.9L1236.7 270.3M1233.5 287.1L1236.7 281.5M1233.5 298.3L1236.7 292.7M1236.7 259.1L1239.9 253.5M1236.7 270.3L1239.9 264.7M1236.7 281.5L1239.9 275.9M1236.7 292.7L1239.9 287.1M1236.7 303.9L1239.9 298.3M1239.9 264.7L1243.1 259.1M1239.9 275.9L1243.1 270.3M1239.9 287.1L1243.1 281.5M1239.9 298.3L1243.1 292.7M1243.1 259.1L1246.3 253.5M1243.1 270.3L1246.3 264.7M1243.1 281.5L1246.3 275.9M1243.1 292.7L1246.3 287.1M1243.1 303.9L1246.3 298.3M1246.3 264.7L1249.5 259.1M1246.3 275.9L1249.5 270.3M1246.3 287.1L1249.5 281.5M1246.3 298.3L1249.5 292.7M1249.5 259.1L1252.7 253.5M1249.5 270.3L1252.7 264.7M1249.5 281.5L1252.7 275.9M1249.5 292.7L1252.7 287.1M1249.5 303.9L1252.7 298.3M1252.7 264.7L1255.9 259.1M1252.7 275.9L1255.9 270.3M1252.7 287.1L1255.9 281.5M1252.7 298.3L1255.9 292.7M1255.9 259.1L1259.1 253.5M1255.9 270.3L1259.1 264.7M1255.9 281.5L1259.1 275.9M1255.9 292.7L1259.1 287.1M1255.9 303.9L1259.1 298.3M1259.1 264.7L1262.3 259.1M1259.1 275.9L1262.3 270.3M1259.1 287.1L1262.3 281.5M1259.1 298.3L1262.3 292.7M1262.3 259.1L1265.5 253.5M1262.3 270.3L1265.5 264.7M1262.3 281.5L1265.5 275.9M1262.3 292.7L1265.5 287.1M1262.3 303.9L1265.5 298.3M1265.5 264.7L1268.8 259.1M1265.5 275.9L1268.8 270.3M1265.5 287.1L1268.8 281.5M1265.5 298.3L1268.8 292.7M1268.8 259.1L1272.0 253.5M1268.8 270.3L1272.0 264.7M1268.8 281.5L1272.0 275.9M1268.8 292.7L1272.0 287.1M1268.8 303.9L1272.0 298.3M1272.0 264.7L1275.2 259.1M1272.0 275.9L1275.2 270.3M1272.0 287.1L1275.2 281.5M1272.0 298.3L1275.2 292.7M1275.2 259.1L1278.4 253.5M1275.2 270.3L1278.4 264.7M1275.2 281.5L1278.4 275.9M1275.2 292.7L1278.4 287.1M1275.2 303.9L1278.4 298.3M1278.4 264.7L1281.6 259.1M1278.4 275.9L1281.6 270.3M1278.4 287.1L1281.6 281.5M1278.4 298.3L1281.6 292.7M1281.6 259.1L1284.8 253.5M1281.6 270.3L1284.8 264.7M1281.6 281.5L1284.8 275.9M1281.6 292.7L1284.8 287.1M1281.6 303.9L1284.8 298.3M1284.8 264.7L1288.0 259.1M1284.8 275.9L1288.0 270.3M1284.8 287.1L1288.0 281.5M1284.8 298.3L1288.0 292.7M1288.0 259.1L1291.2 253.5M1288.0 270.3L1291.2 264.7M1288.0 281.5L1291.2 275.9M1288.0 292.7L1291.2 287.1M1288.0 303.9L1291.2 298.3M1291.2 264.7L1294.4 259.1M1291.2 275.9L1294.4 270.3M1291.2 287.1L1294.4 281.5M1291.2 298.3L1294.4 292.7M1294.4 259.1L1297.6 253.5M1294.4 270.3L1297.6 264.7M1294.4 281.5L1297.6 275.9M1294.4 292.7L1297.6 287.1M1294.4 303.9L1297.6 298.3M1297.6 264.7L1300.8 259.1M1297.6 275.9L1300.8 270.3M1297.6 287.1L1300.8 281.5M1297.6 298.3L1300.8 292.7M1300.8 259.1L1304.0 253.5M1300.8 270.3L1304.0 264.7M1300.8 281.5L1304.0 275.9M1300.8 292.7L1304.0 287.1M1300.8 303.9L1304.0 298.3"/>
<path d="M849.0 303.9L855.4 303.9M849.0 311.3L862.0 311.3M849.0 326.6L869.2 328.6M849.0 354.6L890.4 354.6M855.4 303.9L861.8 303.9M861.8 303.9L868.2 303.9M862.0 311.3L876.8 311.4M868.2 303.9L874.6 303.9M869.2 328.6L890.1 323.4M874.6 303.9L881.0 303.9M876.8 311.4L889.0 311.6M881.0 303.9L887.5 303.9M887.5 303.9L893.9 303.9M889.0 311.6L901.3 310.7M890.1 323.4L911.8 328.3M890.4 354.6L931.7 354.6M893.9 303.9L900.3 303.9M900.3 303.9L906.7 303.9M901.3 310.7L915.4 311.4M906.7 303.9L913.1 303.9M911.8 328.3L931.6 323.6M913.1 303.9L919.5 303.9M915.4 311.4L930.3 310.7M919.5 303.9L925.9 303.9M925.9 303.9L932.3 303.9M930.3 310.7L941.2 312.0M931.6 323.6L952.8 328.1M931.7 354.6L973.1 354.6M932.3 303.9L938.7 303.9M938.7 303.9L945.1 303.9M941.2 312.0L956.1 310.7M945.1 303.9L951.5 303.9M951.5 303.9L957.9 303.9M952.8 328.1L972.5 322.9M956.1 310.7L969.6 311.2M957.9 303.9L964.4 303.9M964.4 303.9L970.8 303.9M969.6 311.2L982.9 311.4M970.8 303.9L977.2 303.9M972.5 322.9L994.4 328.6M973.1 354.6L1014.5 354.6M977.2 303.9L983.6 303.9M982.9 311.4L997.3 311.8M983.6 303.9L990.0 303.9M990.0 303.9L996.4 303.9M994.4 328.6L1013.9 323.5M996.4 303.9L1002.8 303.9M997.3 311.8L1008.9 310.9M1002.8 303.9L1009.2 303.9M1008.9 310.9L1022.0 311.8M1009.2 303.9L1015.6 303.9M1013.9 323.5L1035.9 328.5M1014.5 354.6L1055.8 354.6M1015.6 303.9L1022.0 303.9M1022.0 311.8L1036.5 311.2M1022.0 303.9L1028.4 303.9M1028.4 303.9L1034.8 303.9M1034.8 303.9L1041.3 303.9M1036.5 311.2L1049.2 311.4M1041.3 303.9L1047.7 303.9M1047.7 303.9L1054.1 303.9M1049.2 311.4L1064.1 311.4M1054.1 303.9L1060.5 303.9M1055.6 323.2L1075.9 328.0M1055.8 354.6L1097.2 354.6M1060.5 303.9L1066.9 303.9M1064.1 311.4L1077.6 311.8M1066.9 303.9L1073.3 303.9M1073.3 303.9L1079.7 303.9M1075.9 328.0L1097.9 323.3M1077.6 311.8L1090.8 311.2M1079.7 303.9L1086.1 303.9M1086.1 303.9L1092.5 303.9M1090.8 311.2L1102.4 311.6M1092.5 303.9L1098.9 303.9M1097.2 354.6L1138.5 354.6M1098.9 303.9L1105.3 303.9M1102.4 311.6L1116.2 310.6M1105.3 303.9L1111.7 303.9M1111.7 303.9L1118.2 303.9M1116.2 310.6L1128.6 311.4M1117.9 328.7L1138.4 323.5M1118.2 303.9L1124.6 303.9M1124.6 303.9L1131.0 303.9M1128.6 311.4L1142.7 311.2M1131.0 303.9L1137.4 303.9M1137.4 303.9L1143.8 303.9M1138.4 323.5L1159.7 328.2M1138.5 354.6L1179.9 354.6M1142.7 311.2L1158.2 311.6M1143.8 303.9L1150.2 303.9M1150.2 303.9L1156.6 303.9M1156.6 303.9L1163.0 303.9M1158.2 311.6L1171.5 311.4M1159.7 328.2L1179.5 323.0M1163.0 303.9L1169.4 303.9M1169.4 303.9L1175.8 303.9M1171.5 311.4L1184.9 311.5M1175.8 303.9L1182.2 303.9M1179.5 323.0L1200.2 328.5M1179.9 354.6L1221.3 354.6M1182.2 303.9L1188.6 303.9M1184.9 311.5L1196.1 310.8M1188.6 303.9L1195.1 303.9M1195.1 303.9L1201.5 303.9M1196.1 310.8L1209.4 311.4M1200.2 328.5L1220.9 323.1M1201.5 303.9L1207.9 303.9M1207.9 303.9L1214.3 303.9M1209.4 311.4L1224.1 311.3M1214.3 303.9L1220.7 303.9M1220.7 303.9L1227.1 303.9M1221.3 354.6L1262.6 354.6M1224.1 311.3L1238.1 311.6M1227.1 303.9L1233.5 303.9M1233.5 303.9L1239.9 303.9M1238.1 311.6L1250.9 311.2M1239.9 303.9L1246.3 303.9M1241.4 328.7L1262.4 323.2M1246.3 303.9L1252.7 303.9M1250.9 311.2L1262.6 311.7M1252.7 303.9L1259.1 303.9M1259.1 303.9L1265.5 303.9M1262.4 323.2L1283.5 328.7M1262.6 311.7L1278.5 311.2M1262.6 354.6L1304.0 354.6M1265.5 303.9L1272.0 303.9M1272.0 303.9L1278.4 303.9M1278.4 303.9L1284.8 303.9M1278.5 311.2L1291.4 311.6M1283.5 328.7L1304.0 326.6M1284.8 303.9L1291.2 303.9M1291.2 303.9L1297.6 303.9M1291.4 311.6L1304.0 311.3M1297.6 303.9L1304.0 303.9"/>
<path d="M868.2 303.9L876.8 311.4M876.8 311.4L890.1 323.4M881.0 303.9L889.0 311.6M893.9 303.9L901.3 310.7M906.7 303.9L915.4 311.4M915.4 311.4L931.6 323.6M919.5 303.9L930.3 310.7M945.1 303.9L956.1 310.7M956.1 310.7L972.5 322.9M997.3 311.8L1013.9 323.5M1028.4 303.9L1036.5 311.2M1041.3 303.9L1049.2 311.4M1054.1 303.9L1064.1 311.4M1097.9 323.3L1117.9 328.7M1150.2 303.9L1158.2 311.6M1163.0 303.9L1171.5 311.4M1175.8 303.9L1184.9 311.5M1188.6 303.9L1196.1 310.8M1201.5 303.9L1209.4 311.4M1214.3 303.9L1224.1 311.3M1220.9 323.1L1241.4 328.7"/>
<path d="M855.4 303.9L862.0 311.3M862.0 311.3L869.2 328.6M869.2 328.6L890.4 354.6M874.6 303.9L876.8 311.4M901.3 310.7L911.8 328.3M911.8 328.3L931.7 354.6M913.1 303.9L915.4 311.4M925.9 303.9L930.3 310.7M938.7 303.9L941.2 312.0M941.2 312.0L952.8 328.1M951.5 303.9L956.1 310.7M952.8 328.1L973.1 354.6M964.4 303.9L969.6 311.2M977.2 303.9L982.9 311.4M982.9 311.4L994.4 328.6M990.0 303.9L997.3 311.8M994.4 328.6L1014.5 354.6M1002.8 303.9L1008.9 310.9M1008.9 310.9L1013.9 323.5M1015.6 303.9L1022.0 311.8M1022.0 311.8L1035.9 328.5M1035.9 328.5L1055.8 354.6M1049.2 311.4L1055.6 323.2M1060.5 303.9L1064.1 311.4M1064.1 311.4L1075.9 328.0M1073.3 303.9L1077.6 311.8M1075.9 328.0L1097.2 354.6M1086.1 303.9L1090.8 311.2M1090.8 311.2L1097.9 323.3M1098.9 303.9L1102.4 311.6M1111.7 303.9L1116.2 310.6M1117.9 328.7L1138.5 354.6M1124.6 303.9L1128.6 311.4M1128.6 311.4L1138.4 323.5M1137.4 303.9L1142.7 311.2M1159.7 328.2L1179.9 354.6M1169.4 303.9L1171.5 311.4M1171.5 311.4L1179.5 323.0M1182.2 303.9L1184.9 311.5M1200.2 328.5L1221.3 354.6M1209.4 311.4L1220.9 323.1M1220.7 303.9L1224.1 311.3M1233.5 303.9L1238.1 311.6M1241.4 328.7L1262.6 354.6M1246.3 303.9L1250.9 311.2M1250.9 311.2L1262.4 323.2M1259.1 303.9L1262.6 311.7M1272.0 303.9L1278.5 311.2M1278.5 311.2L1283.5 328.7M1283.5 328.7L1304.0 354.6M1284.8 303.9L1291.4 311.6M1291.4 311.6L1304.0 326.6M1297.6 303.9L1304.0 311.3"/>
<path d="M849.0 303.9L849.0 311.3M849.0 311.3L849.0 326.6M849.0 326.6L849.0 354.6M861.8 303.9L862.0 311.3M887.5 303.9L889.0 311.6M889.0 311.6L890.1 323.4M890.1 323.4L890.4 354.6M900.3 303.9L901.3 310.7M911.8 328.3L915.4 311.4M930.3 310.7L931.6 323.6M931.6 323.6L931.7 354.6M952.8 328.1L956.1 310.7M956.1 310.7L957.9 303.9M969.6 311.2L970.8 303.9M969.6 311.2L972.5 322.9M972.5 322.9L973.1 354.6M982.9 311.4L983.6 303.9M994.4 328.6L997.3 311.8M996.4 303.9L997.3 311.8M1008.9 310.9L1009.2 303.9M1013.9 323.5L1014.5 354.6M1022.0 311.8L1022.0 303.9M1034.8 303.9L1036.5 311.2M1035.9 328.5L1036.5 311.2M1047.7 303.9L1049.2 311.4M1055.6 323.2L1055.8 354.6M1075.9 328.0L1077.6 311.8M1090.8 311.2L1092.5 303.9M1097.2 354.6L1097.9 323.3M1116.2 310.6L1117.9 328.7M1138.4 323.5L1138.5 354.6M1142.7 311.2L1143.8 303.9M1156.6 303.9L1158.2 311.6M1158.2 311.6L1159.7 328.2M1179.5 323.0L1179.9 354.6M1195.1 303.9L1196.1 310.8M1196.1 310.8L1200.2 328.5M1207.9 303.9L1209.4 311.4M1220.9 323.1L1221.3 354.6M1238.1 311.6L1239.9 303.9M1238.1 311.6L1241.4 328.7M1250.9 311.2L1252.7 303.9M1262.4 323.2L1262.6 311.7M1262.4 323.2L1262.6 354.6M1278.4 303.9L1278.5 311.2M1291.2 303.9L1291.4 311.6M1304.0 303.9L1304.0 311.3M1304.0 311.3L1304.0 326.6M1304.0 326.6L1304.0 354.6"/>
<path d="M849.0 311.3L855.4 303.9M849.0 326.6L862.0 311.3M849.0 354.6L869.2 328.6M862.0 311.3L868.2 303.9M869.2 328.6L876.8 311.4M876.8 311.4L881.0 303.9M889.0 311.6L893.9 303.9M890.1 323.4L901.3 310.7M890.4 354.6L911.8 328.3M901.3 310.7L906.7 303.9M915.4 311.4L919.5 303.9M930.3 310.7L932.3 303.9M931.6 323.6L941.2 312.0M931.7 354.6L952.8 328.1M941.2 312.0L945.1 303.9M972.5 322.9L982.9 311.4M973.1 354.6L994.4 328.6M982.9 311.4L990.0 303.9M997.3 311.8L1002.8 303.9M1008.9 310.9L1015.6 303.9M1013.9 323.5L1022.0 311.8M1014.5 354.6L1035.9 328.5M1022.0 311.8L1028.4 303.9M1035.9 328.5L1049.2 311.4M1036.5 311.2L1041.3 303.9M1049.2 311.4L1054.1 303.9M1055.6 323.2L1064.1 311.4M1055.8 354.6L1075.9 328.0M1064.1 311.4L1066.9 303.9M1075.9 328.0L1090.8 311.2M1077.6 311.8L1079.7 303.9M1097.2 354.6L1117.9 328.7M1097.9 323.3L1102.4 311.6M1102.4 311.6L1105.3 303.9M1116.2 310.6L1118.2 303.9M1117.9 328.7L1128.6 311.4M1128.6 311.4L1131.0 303.9M1138.4 323.5L1142.7 311.2M1138.5 354.6L1159.7 328.2M1158.2 311.6L1163.0 303.9M1159.7 328.2L1171.5 311.4M1171.5 311.4L1175.8 303.9M1179.5 323.0L1184.9 311.5M1179.9 354.6L1200.2 328.5M1184.9 311.5L1188.6 303.9M1196.1 310.8L1201.5 303.9M1200.2 328.5L1209.4 311.4M1209.4 311.4L1214.3 303.9M1220.9 323.1L1224.1 311.3M1221.3 354.6L1241.4 328.7M1224.1 311.3L1227.1 303.9M1241.4 328.7L1250.9 311.2M1262.6 311.7L1265.5 303.9M1262.6 354.6L1283.5 328.7M1278.5 311.2L1284.8 303.9M1283.5 328.7L1291.4 311.6M1291.4 311.6L1297.6 303.9"/>
<path d="M930.3 310.7L938.7 303.9M956.1 310.7L964.4 303.9M969.6 311.2L977.2 303.9M1035.9 328.5L1055.6 323.2M1064.1 311.4L1073.3 303.9M1077.6 311.8L1086.1 303.9M1090.8 311.2L1098.9 303.9M1097.9 323.3L1116.2 310.6M1102.4 311.6L1111.7 303.9M1116.2 310.6L1124.6 303.9M1128.6 311.4L1137.4 303.9M1138.4 323.5L1158.2 311.6M1142.7 311.2L1150.2 303.9M1179.5 323.0L1196.1 310.8M1220.9 323.1L1238.1 311.6M1224.1 311.3L1233.5 303.9M1238.1 311.6L1246.3 303.9M1250.9 311.2L1259.1 303.9M1262.4 323.2L1278.5 311.2M1262.6 311.7L1272.0 303.9"/>
<path d="M849.0 354.6L890.4 354.6M849.0 431.3L899.6 431.3M890.4 354.6L931.7 354.6M899.6 431.3L950.1 431.3M931.7 354.6L973.1 354.6M950.1 431.3L1000.7 431.3M973.1 354.6L1014.5 354.6M1000.7 431.3L1051.2 431.3M1014.5 354.6L1055.8 354.6M1051.2 431.3L1101.8 431.3M1055.8 354.6L1097.2 354.6M1097.2 354.6L1138.5 354.6M1101.8 431.3L1152.3 431.3M1138.5 354.6L1179.9 354.6M1152.3 431.3L1202.9 431.3M1179.9 354.6L1221.3 354.6M1202.9 431.3L1253.4 431.3M1221.3 354.6L1262.6 354.6M1253.4 431.3L1304.0 431.3M1262.6 354.6L1304.0 354.6"/>
<path d="M849.0 390.5L899.6 431.3M1262.6 354.6L1304.0 390.5"/>
<path d="M973.1 354.6L1000.7 431.3M1014.5 354.6L1051.2 431.3M1055.8 354.6L1076.4 389.6M1076.4 389.6L1101.8 431.3M1179.9 354.6L1202.9 431.3M1221.3 354.6L1253.4 431.3"/>
<path d="M849.0 354.6L849.0 390.5M849.0 390.5L849.0 431.3M890.4 354.6L899.6 431.3M931.7 354.6L950.1 431.3M1000.7 431.3L1014.5 354.6M1051.2 431.3L1055.8 354.6M1097.2 354.6L1101.8 431.3M1138.5 354.6L1152.3 431.3M1202.9 431.3L1221.3 354.6M1253.4 431.3L1262.6 354.6M1304.0 354.6L1304.0 390.5M1304.0 390.5L1304.0 431.3"/>
<path d="M899.6 431.3L931.7 354.6M950.1 431.3L973.1 354.6M1051.2 431.3L1076.4 389.6M1076.4 389.6L1097.2 354.6M1101.8 431.3L1138.5 354.6M1152.3 431.3L1179.9 354.6"/>
<path d="M849.0 390.5L890.4 354.6M1253.4 431.3L1304.0 390.5"/>
</g>
</svg>
</div>
</body></html>
